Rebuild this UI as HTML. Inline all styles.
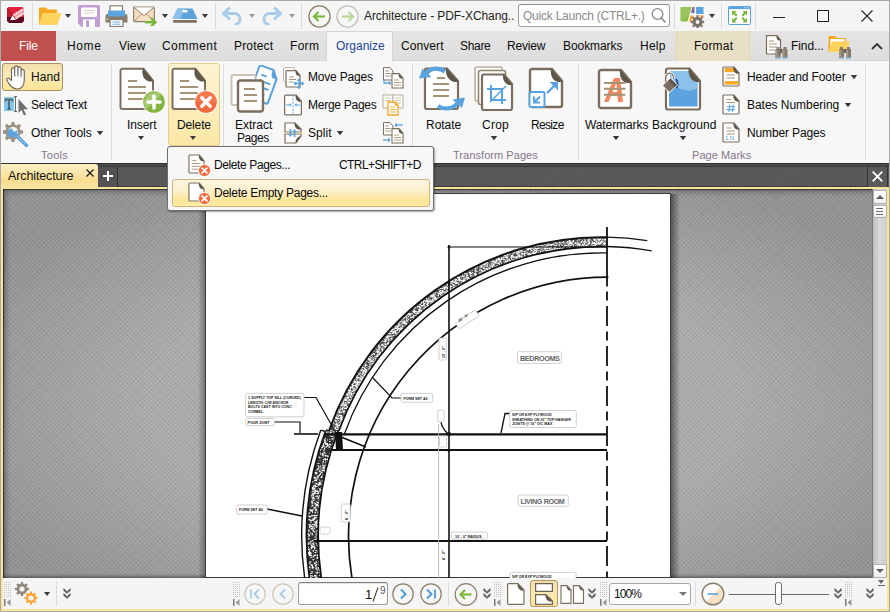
<!DOCTYPE html>
<html><head><meta charset="utf-8">
<style>
*{margin:0;padding:0;box-sizing:border-box}
html,body{width:890px;height:612px;overflow:hidden;background:#f5f5f5}
body{position:relative;font-family:"Liberation Sans",sans-serif;font-size:12px;color:#0a0a0a}
.a{position:absolute}
.t{position:absolute;white-space:nowrap;line-height:14px}
.sep{position:absolute;width:1px;background:#dcdcdc}
.dd{position:absolute;width:0;height:0;border-left:3.5px solid transparent;border-right:3.5px solid transparent;border-top:4px solid #3a3a3a}
.gl{position:absolute;color:#85768a;font-size:11px;white-space:nowrap;line-height:14px}
</style></head>
<body>

<svg width="0" height="0" style="position:absolute">
<defs>
<symbol id="pg" viewBox="0 0 36 44">
<path d="M3.5,1.8 H24.5 L34,13.5 V40 A2,2 0 0 1 32,42 H3.5 A2,2 0 0 1 1.5,40 V3.8 A2,2 0 0 1 3.5,1.8 Z" fill="#fff" stroke="#7b6e5e" stroke-width="2"/>
<path d="M23.8,1.2 L34.6,14.5 L31,14.5 C26,14 22,9 23.8,1.2 Z" fill="#5f564a"/>
<path d="M9,14 H18 M9,20 H27 M9,26 H27 M9,32 H27" stroke="#a39478" stroke-width="1.8"/>
</symbol>
<symbol id="pgs" viewBox="0 0 18 21">
<path d="M2,1 H12 L17,7 V19 A1,1 0 0 1 16,20 H2 A1,1 0 0 1 1,19 V2 A1,1 0 0 1 2,1 Z" fill="#fff" stroke="#7b6e5e" stroke-width="1.2"/>
<path d="M11.5,0.8 L17.2,7.5 L15,7.5 C12.5,7 11,4.5 11.5,0.8 Z" fill="#5f564a"/>
</symbol>
<symbol id="pgl" viewBox="0 0 18 21">
<use href="#pgs"/>
<path d="M4,7 H9 M4,10 H13 M4,13 H13 M4,16 H13" stroke="#a39478" stroke-width="1"/>
</symbol>
<symbol id="xc" viewBox="0 0 24 24">
<circle cx="12" cy="12" r="12" fill="#fff" opacity=".7"/>
<circle cx="12" cy="12" r="10.8" fill="#f36a3f"/>
<path d="M12,1.2 A10.8,10.8 0 0 1 22.8,12 L1.2,12 A10.8,10.8 0 0 1 12,1.2Z" fill="#f7825a" opacity=".6"/>
<path d="M7.8,7.8 L16.2,16.2 M16.2,7.8 L7.8,16.2" stroke="#fff" stroke-width="3.4" stroke-linecap="round"/>
</symbol>
<symbol id="plc" viewBox="0 0 24 24">
<circle cx="12" cy="12" r="12" fill="#fff" opacity=".7"/>
<circle cx="12" cy="12" r="10.8" fill="#86b443"/>
<path d="M4.4,19.6 A10.8,10.8 0 0 1 19.6,4.4 Z" fill="#a6c970"/>
<path d="M12,6 V18 M6,12 H18" stroke="#fff" stroke-width="3.6" stroke-linecap="round"/>
</symbol>
<symbol id="xs" viewBox="0 0 12 12">
<circle cx="6" cy="6" r="5.6" fill="#f36a3f" stroke="#fff" stroke-width=".8"/>
<path d="M3.8,3.8 L8.2,8.2 M8.2,3.8 L3.8,8.2" stroke="#fff" stroke-width="1.7" stroke-linecap="round"/>
</symbol>
<symbol id="chev" viewBox="0 0 8 12">
<defs><linearGradient id="chg" x1="0" y1="0" x2="0" y2="1"><stop offset="0" stop-color="#3c3c3c"/><stop offset="1" stop-color="#8a8a8a"/></linearGradient></defs>
<path d="M0.5,0 L4,3.2 L7.5,0 V2.8 L4,6 L0.5,2.8 Z" fill="url(#chg)"/>
<path d="M0.5,5 L4,8.2 L7.5,5 V7.8 L4,11 L0.5,7.8 Z" fill="url(#chg)"/>
</symbol>
<symbol id="grip" viewBox="0 0 8 26">
<g fill="#c0c0c0"><rect x="0" y="1" width="1" height="1"/><rect x="2" y="1" width="1" height="1"/><rect x="4" y="1" width="1" height="1"/><rect x="6" y="1" width="1" height="1"/><rect x="0" y="3" width="1" height="1"/><rect x="2" y="3" width="1" height="1"/><rect x="4" y="3" width="1" height="1"/><rect x="6" y="3" width="1" height="1"/><rect x="0" y="5" width="1" height="1"/><rect x="2" y="5" width="1" height="1"/><rect x="4" y="5" width="1" height="1"/><rect x="6" y="5" width="1" height="1"/><rect x="0" y="7" width="1" height="1"/><rect x="2" y="7" width="1" height="1"/><rect x="4" y="7" width="1" height="1"/><rect x="6" y="7" width="1" height="1"/><rect x="0" y="9" width="1" height="1"/><rect x="2" y="9" width="1" height="1"/><rect x="4" y="9" width="1" height="1"/><rect x="6" y="9" width="1" height="1"/><rect x="0" y="11" width="1" height="1"/><rect x="2" y="11" width="1" height="1"/><rect x="4" y="11" width="1" height="1"/><rect x="6" y="11" width="1" height="1"/><rect x="0" y="13" width="1" height="1"/><rect x="2" y="13" width="1" height="1"/><rect x="4" y="13" width="1" height="1"/><rect x="6" y="13" width="1" height="1"/><rect x="0" y="15" width="1" height="1"/><rect x="2" y="15" width="1" height="1"/><rect x="4" y="15" width="1" height="1"/><rect x="6" y="15" width="1" height="1"/></g>
<rect x="0" y="18" width="1.5" height="7" fill="#7a7a7a"/>
<path d="M6.5,18 L2.5,21.5 L6.5,25 Z" fill="#9a9a9a"/>
</symbol>
</defs>
</svg>
<!-- window frame -->


<!-- TITLE BAR -->
<div id="titlebar" class="a" style="left:1px;top:1px;width:888px;height:30px;background:#f5f5f5"></div>
<div class="sep" style="left:32px;top:3px;height:26px"></div>
<div class="sep" style="left:215px;top:3px;height:26px"></div>
<div class="sep" style="left:301px;top:3px;height:26px"></div>
<div class="sep" style="left:674px;top:3px;height:26px"></div>
<div class="sep" style="left:721px;top:3px;height:26px"></div>
<div class="sep" style="left:755px;top:3px;height:26px"></div>
<div class="t" style="left:364px;top:9px;font-size:12px;color:#1e1e1e;letter-spacing:-0.09px">Architecture - PDF-XChang..</div>
<div class="a" style="left:518px;top:4px;width:152px;height:23px;border:1px solid #a0a0a0;border-top-color:#8c8c8c;border-radius:3px;background:#fff"></div>
<div class="t" style="left:523px;top:9px;color:#8a8a8a;letter-spacing:-0.23px">Quick Launch (CTRL+.)</div>


<!-- QAT ICONS -->
<svg class="a" style="left:7px;top:7px" width="17" height="16" viewBox="0 0 17 16">
<defs><clipPath id="lg"><path d="M2,0 H15 L17,2 V14 L15,16 H2 L0,14 V2Z"/></clipPath></defs>
<g clip-path="url(#lg)">
<rect width="17" height="16" fill="#5e0322"/>
<rect width="17" height="10" fill="#e0233a"/>
<path d="M0,0 L8,10 L0,10Z" fill="#bd1a2b"/>
<path d="M3,13 L9,13 L5.5,8.5Z" fill="#fff"/>
<path d="M6.5,8.5 L17,2 M8.5,11.5 L17,6" stroke="#fff" stroke-width="2.2"/>
<path d="M6.5,8.5 L17,2 M8.5,11.5 L17,6" stroke="#d02030" stroke-width=".8" stroke-dasharray="1 1"/>
<path d="M7.5,10 L17,4" stroke="#fff" stroke-width=".6"/>
</g>
</svg>
<svg class="a" style="left:38px;top:7px" width="24" height="18" viewBox="0 0 24 18">
<path d="M1,1.5 A1,1 0 0 1 2,0.5 H8 L10,2.5 H18 A1,1 0 0 1 19,3.5 V17.5 H1 Z" fill="#f6a823"/>
<path d="M4.5,6 H23.5 L19.5,17.5 H1 Z" fill="#fdd45c"/>
</svg>
<div class="dd" style="left:65px;top:14px"></div>
<svg class="a" style="left:78px;top:5px" width="22" height="22" viewBox="0 0 22 22">
<path d="M1.5,0 H20.5 A1.5,1.5 0 0 1 22,1.5 V20.5 A1.5,1.5 0 0 1 20.5,22 H3.5 L0,18.5 V1.5 A1.5,1.5 0 0 1 1.5,0Z" fill="#c29fd3"/>
<rect x="3" y="2.5" width="16" height="9.5" rx="1.5" fill="#fff"/>
<path d="M6,5.5 H16 M6,8 H16" stroke="#d9ccb8" stroke-width="1"/>
<rect x="5" y="14.5" width="12" height="7.5" fill="#fff"/>
<rect x="8" y="15.5" width="3" height="6.5" fill="#c29fd3"/>
</svg>
<svg class="a" style="left:105px;top:5px" width="23" height="22" viewBox="0 0 23 22">
<rect x="5" y="0.8" width="12.5" height="8" fill="#fff" stroke="#8a7d6c" stroke-width="1.2"/>
<path d="M2.5,10 A2,2 0 0 1 4.5,8 H18.5 A2,2 0 0 1 20.5,10 V17 H2.5Z" fill="#8a7d6c"/>
<path d="M0.5,11 A2,2 0 0 1 2.5,9 H20.5 A2,2 0 0 1 22.5,11 V17.5 H0.5Z" fill="#8a7d6c"/>
<rect x="3" y="5.5" width="17" height="6" fill="#5ba4de"/>
<rect x="5" y="14.5" width="13" height="7" fill="#fff" stroke="#8a7d6c" stroke-width="1.2"/>
<path d="M7.5,17 H15.5 M7.5,19.2 H15.5" stroke="#5ba4de" stroke-width=".9"/>
<circle cx="2.5" cy="14" r=".7" fill="#fff"/>
</svg>
<svg class="a" style="left:133px;top:6px" width="24" height="20" viewBox="0 0 24 20">
<rect x="0.7" y="1" width="20.6" height="14.6" rx="1" fill="#f6e0c2" stroke="#8c7e6a" stroke-width="1.2"/>
<path d="M1.3,1.5 L11,9.5 L20.7,1.5" fill="#fff" stroke="#8c7e6a" stroke-width="1"/>
<path d="M1.5,15 L8.5,8 M20.5,15 L13.5,8" stroke="#8c7e6a" stroke-width=".8"/>
<path d="M12,16.2 H21" stroke="#78b43b" stroke-width="2.4"/>
<path d="M18,12 L22.5,16.2 L18,20.4" fill="none" stroke="#78b43b" stroke-width="2.4"/>
</svg>
<div class="dd" style="left:162px;top:14px"></div>
<svg class="a" style="left:172px;top:8px" width="26" height="15" viewBox="0 0 26 15">
<path d="M5.5,0.5 H20.5 L25.5,11 H0.5Z" fill="#5ba2dc"/>
<path d="M5.5,0.5 H13 L8,11 H0.5Z" fill="#8cc0ea"/>
<rect x="10.5" y="2" width="5" height="2.5" fill="#fff"/>
<rect x="1" y="12" width="24" height="2.8" rx="1" fill="#7d7062"/>
<rect x="2" y="11" width="22" height="1" fill="#fff"/>
</svg>
<div class="dd" style="left:202px;top:14px"></div>
<svg class="a" style="left:222px;top:7px" width="21" height="18" viewBox="0 0 21 18">
<path d="M2,6.5 H12.5 A5.5,5.5 0 0 1 12.5,17.5" fill="none" stroke="#a9cde9" stroke-width="3"/>
<path d="M8,0.5 L1.5,6.5 L8,12.5" fill="none" stroke="#a9cde9" stroke-width="3"/>
</svg>
<div class="dd" style="left:249px;top:14px;border-top-color:#9a9a9a"></div>
<svg class="a" style="left:261px;top:7px" width="21" height="18" viewBox="0 0 21 18">
<path d="M19,6.5 H8.5 A5.5,5.5 0 0 0 8.5,17.5" fill="none" stroke="#a9cde9" stroke-width="3"/>
<path d="M13,0.5 L19.5,6.5 L13,12.5" fill="none" stroke="#a9cde9" stroke-width="3"/>
</svg>
<div class="dd" style="left:289px;top:14px;border-top-color:#9a9a9a"></div>
<svg class="a" style="left:308px;top:5px" width="23" height="23" viewBox="0 0 23 23">
<circle cx="11.5" cy="11.5" r="10.6" fill="#f7f7f7" stroke="#8b7f6c" stroke-width="1.3"/>
<path d="M6,11.5 H17" stroke="#7db63f" stroke-width="2.2"/>
<path d="M10.5,7 L6,11.5 L10.5,16" fill="none" stroke="#7db63f" stroke-width="2.2"/>
</svg>
<svg class="a" style="left:336px;top:5px" width="23" height="23" viewBox="0 0 23 23">
<circle cx="11.5" cy="11.5" r="10.6" fill="#f7f7f7" stroke="#c6bfb4" stroke-width="1.3"/>
<path d="M6,11.5 H17" stroke="#b9d898" stroke-width="2.2"/>
<path d="M12.5,7 L17,11.5 L12.5,16" fill="none" stroke="#b9d898" stroke-width="2.2"/>
</svg>
<svg class="a" style="left:651px;top:7px" width="16" height="17" viewBox="0 0 16 17">
<circle cx="6.5" cy="7" r="5.3" fill="none" stroke="#8a8a8a" stroke-width="1.3"/>
<path d="M10.3,11 L14.5,15.5" stroke="#8a8a8a" stroke-width="1.7"/>
</svg>
<svg class="a" style="left:680px;top:6px" width="25" height="22" viewBox="0 0 25 22">
<path d="M1.5,1 H11.5 L7.5,15.5 H1.5 A1,1 0 0 1 0.5,14.5 V2 A1,1 0 0 1 1.5,1Z" fill="#8cbd4c"/>
<path d="M1.5,1 H11.5 L9,10 L0.5,14Z" fill="#9fca62" opacity=".6"/>
<path d="M12.5,1 H14.5 V7 H11Z" fill="#8a5cb0"/>
<rect x="16" y="1" width="7.5" height="7" fill="#5ba3de"/>
<path d="M10.5,9.5 H13 V15.5 H9Z" fill="#f4a52c"/>
<rect x="16" y="9.5" width="7.5" height="2.5" fill="#f08a3c"/>
<g transform="translate(17.5,16)">
<circle r="6.4" fill="#f5f5f5"/>
<path d="M-0.9,-6 H0.9 L1.2,-4.3 L2.8,-3.6 L4.2,-4.7 L5.4,-3.5 L4.3,-2.1 L5,-0.5 L6.7,-0.2 V1.6 L5,1.9 L4.3,3.5 L5.4,4.9 L4.2,6.1 L2.8,5 L1.2,5.7 L0.9,7.4 H-0.9 L-1.2,5.7 L-2.8,5 L-4.2,6.1 L-5.4,4.9 L-4.3,3.5 L-5,1.9 L-6.7,1.6 V-0.2 L-5,-0.5 L-4.3,-2.1 L-5.4,-3.5 L-4.2,-4.7 L-2.8,-3.6 L-1.2,-4.3Z" fill="#7e7468" transform="translate(0,-0.7)"/>
<circle r="1.9" fill="#f5f5f5"/>
</g>
</svg>
<div class="dd" style="left:709px;top:14px"></div>
<svg class="a" style="left:728px;top:6px" width="23" height="19" viewBox="0 0 23 19">
<rect x="0.5" y="0.5" width="22" height="18" rx="1" fill="#fff" stroke="#5ba3de" stroke-width="1"/>
<rect x="0.5" y="0.5" width="22" height="2.6" fill="#5ba3de"/>
<path d="M16,1.8 h1 M18,1.8 h1 M20,1.8 h1" stroke="#fff" stroke-width=".9"/>
<g fill="#7ab43d">
<path d="M4,5 H8.5 L7,6.5 L9.5,9 L8,10.5 L5.5,8 L4,9.5Z"/>
<path d="M19,5 H14.5 L16,6.5 L13.5,9 L15,10.5 L17.5,8 L19,9.5Z"/>
<path d="M4,17 H8.5 L7,15.5 L9.5,13 L8,11.5 L5.5,14 L4,12.5Z" transform="translate(0,-0.5)"/>
<path d="M19,17 H14.5 L16,15.5 L13.5,13 L15,11.5 L17.5,14 L19,12.5Z" transform="translate(0,-0.5)"/>
</g>
</svg>
<!-- window controls -->
<div class="a" style="left:773px;top:17px;width:12px;height:1px;background:#222"></div>
<div class="a" style="left:817px;top:10px;width:12px;height:12px;border:1px solid #222"></div>
<svg class="a" style="left:861px;top:10px" width="12" height="12" viewBox="0 0 12 12"><path d="M0.5,0.5 L11.5,11.5 M11.5,0.5 L0.5,11.5" stroke="#222" stroke-width="1.1"/></svg>

<!-- MENU BAR -->
<div class="a" style="left:1px;top:31px;width:888px;height:30px;background:linear-gradient(#e4e4e4,#dedede);border-bottom:1px solid #d6d6d6"></div>
<div class="a" style="left:1px;top:31px;width:55px;height:30px;background:#c0504e"></div>
<div class="t" style="left:19px;top:39px;color:#fff;letter-spacing:-0.16px">File</div>
<div class="a" style="left:326px;top:31px;width:67px;height:31px;background:#f7f7f7;border:1px solid #d4d4d4;border-bottom:none;border-radius:2px 2px 0 0"></div>
<div class="a" style="left:676px;top:31px;width:74px;height:30px;background:#e8e0c4;border-left:1px solid #e8d9a0;border-right:1px solid #e8d9a0"></div>
<div class="t" style="left:67px;top:39px;letter-spacing:0.62px">Home</div>
<div class="t" style="left:119px;top:39px;letter-spacing:0.2px">View</div>
<div class="t" style="left:162px;top:39px;letter-spacing:0.45px">Comment</div>
<div class="t" style="left:234px;top:39px;letter-spacing:0.17px">Protect</div>
<div class="t" style="left:290px;top:39px;letter-spacing:0.3px">Form</div>
<div class="t" style="left:336px;top:39px;color:#23449a;letter-spacing:-0.0px">Organize</div>
<div class="t" style="left:401px;top:39px;letter-spacing:0.08px">Convert</div>
<div class="t" style="left:460px;top:39px;letter-spacing:-0.31px">Share</div>
<div class="t" style="left:507px;top:39px;letter-spacing:-0.19px">Review</div>
<div class="t" style="left:563px;top:39px;letter-spacing:-0.07px">Bookmarks</div>
<div class="t" style="left:640px;top:39px;letter-spacing:0.23px">Help</div>
<div class="t" style="left:694px;top:39px;letter-spacing:0.2px">Format</div>
<div class="t" style="left:791px;top:39px;letter-spacing:-0.08px">Find...</div>

<!-- menu bar right icons -->
<svg class="a" style="left:765px;top:35px" width="24" height="24" viewBox="0 0 24 24">
<path d="M1.5,0.7 H12 L15.5,5 V19 H1.5 Z" fill="#fff" stroke="#7b6e5e" stroke-width="1.2"/>
<path d="M11.5,0.5 L15.8,5.5 L13.5,5.5 C12,5 11.2,3 11.5,0.5Z" fill="#5f564a"/>
<path d="M4,6 H9 M4,9 H12 M4,12 H12 M4,15 H10" stroke="#a39478" stroke-width="1"/>
<g transform="translate(0,0)"><path d="M11.5,12 h3 v2 h1 v8.5 h-5 v-8.5 h1z M18.5,12 h3 v2 h1 v8.5 h-5 v-8.5 h1z" fill="#857c6e"/>
<path d="M15.5,14 h2 v4 h-2z" fill="#6a6258"/>
<path d="M10.5,15 h2 v7.5 h-2z M17.5,15 h2 v7.5 h-2z" fill="#a39a8c"/>
<path d="M10.5,23 h5 M17.5,23 h5" stroke="#5ba3de" stroke-width="1.2"/></g>
</svg>
<svg class="a" style="left:828px;top:35px" width="25" height="24" viewBox="0 0 25 24">
<path d="M0.5,2 A1,1 0 0 1 1.5,1 H7 L9,3 H17 A1,1 0 0 1 18,4 V17 H0.5Z" fill="#f6a823"/>
<rect x="2.5" y="4" width="14" height="8" fill="#fff"/>
<path d="M4,6.5 H22 L18,17 H0.5Z" fill="#fdd45c"/>
<g transform="translate(0.5,0)"><path d="M11.5,12 h3 v2 h1 v8.5 h-5 v-8.5 h1z M18.5,12 h3 v2 h1 v8.5 h-5 v-8.5 h1z" fill="#857c6e"/>
<path d="M15.5,14 h2 v4 h-2z" fill="#6a6258"/>
<path d="M10.5,15 h2 v7.5 h-2z M17.5,15 h2 v7.5 h-2z" fill="#a39a8c"/>
<path d="M10.5,23 h5 M17.5,23 h5" stroke="#5ba3de" stroke-width="1.2"/></g>
</svg>
<svg class="a" style="left:871px;top:42px" width="12" height="8" viewBox="0 0 12 8"><path d="M1,7 L6,2 L11,7" fill="none" stroke="#333" stroke-width="1.8"/></svg>


<!-- RIBBON -->
<div class="a" style="left:1px;top:61px;width:888px;height:102px;background:#f7f7f7"></div>
<div class="sep" style="left:111px;top:64px;height:96px"></div>
<div class="sep" style="left:223px;top:64px;height:96px"></div>
<div class="sep" style="left:412px;top:64px;height:96px"></div>
<div class="sep" style="left:578px;top:64px;height:96px"></div>
<div class="sep" style="left:865px;top:64px;height:96px"></div>

<!-- Tools group -->
<div class="a" style="left:2px;top:63px;width:61px;height:28px;border:1px solid #a89060;border-radius:3px;background:linear-gradient(#f2e0ac,#fbe9b6 45%,#fde496 100%)"></div>
<div class="t" style="left:31px;top:70px;letter-spacing:0.1px">Hand</div>
<div class="t" style="left:31px;top:98px;letter-spacing:-0.25px">Select Text</div>
<div class="t" style="left:31px;top:126px;letter-spacing:-0.04px">Other Tools</div>
<div class="dd" style="left:97px;top:131px"></div>
<div class="gl" style="left:41px;top:148px;letter-spacing:0.28px">Tools</div>

<!-- Insert / Delete -->
<div class="a" style="left:168px;top:63px;width:52px;height:83px;border:1px solid #e3cf8e;border-radius:3px;background:linear-gradient(#fdf3d2,#fbe7a6)"></div>
<div class="t" style="left:127px;top:118px;letter-spacing:-0.09px">Insert</div>
<div class="dd" style="left:138px;top:136px"></div>
<div class="t" style="left:177px;top:118px;letter-spacing:-0.13px">Delete</div>
<div class="dd" style="left:190px;top:136px"></div>

<!-- Extract etc -->
<div class="t" style="left:235px;top:118px;letter-spacing:-0.02px">Extract</div>
<div class="t" style="left:237px;top:131px;letter-spacing:-0.45px">Pages</div>
<div class="t" style="left:308px;top:70px;letter-spacing:-0.2px">Move Pages</div>
<div class="t" style="left:308px;top:98px;letter-spacing:-0.26px">Merge Pages</div>
<div class="t" style="left:308px;top:126px;letter-spacing:0.07px">Split</div>
<div class="dd" style="left:337px;top:131px"></div>

<!-- Transform -->
<div class="t" style="left:426px;top:118px;letter-spacing:-0.03px">Rotate</div>
<div class="t" style="left:482px;top:118px;letter-spacing:0.25px">Crop</div>
<div class="dd" style="left:491px;top:136px"></div>
<div class="t" style="left:531px;top:118px;letter-spacing:-0.66px">Resize</div>
<div class="gl" style="left:453px;top:148px;letter-spacing:0.06px">Transform Pages</div>

<!-- Page marks -->
<div class="t" style="left:585px;top:118px;letter-spacing:-0.09px">Watermarks</div>
<div class="dd" style="left:613px;top:136px"></div>
<div class="t" style="left:652px;top:118px;letter-spacing:0.03px">Background</div>
<div class="dd" style="left:680px;top:136px"></div>
<div class="t" style="left:747px;top:70px;letter-spacing:-0.13px">Header and Footer</div>
<div class="dd" style="left:851px;top:75px"></div>
<div class="t" style="left:747px;top:98px;letter-spacing:-0.03px">Bates Numbering</div>
<div class="dd" style="left:845px;top:103px"></div>
<div class="t" style="left:747px;top:126px;letter-spacing:-0.13px">Number Pages</div>
<div class="gl" style="left:692px;top:148px;letter-spacing:0.05px">Page Marks</div>


<!-- RIBBON ICONS -->
<svg class="a" style="left:6px;top:65px" width="20" height="25" viewBox="0 0 20 25">
<path d="M5.5,15 V4.5 a1.6,1.6 0 0 1 3.2,0 V11 V2.5 a1.6,1.6 0 0 1 3.2,0 V11 V3.5 a1.6,1.6 0 0 1 3.2,0 V11.5 V6 a1.6,1.6 0 0 1 3.2,0 V15 C18.1,20 16,24 11,24 C7,24 5.5,22 3.5,19.5 L1,15.5 a1.5,1.5 0 0 1 2.4,-1.8 L5.5,16" fill="#fff" stroke="#6a6258" stroke-width="1.1" stroke-linejoin="round"/>
</svg>
<svg class="a" style="left:4px;top:96px" width="25" height="20" viewBox="0 0 25 20">
<rect x="0" y="1" width="10" height="14" fill="#7ec7ef"/>
<path d="M1.5,3.5 H8.5 M5,3.5 V13 M3.5,13 H6.5 M1.5,3.5 V5.5 M8.5,3.5 V5.5" stroke="#555" stroke-width="1.6"/>
<path d="M11.5,0.5 V15.5 M10,0.5 H13 M10,15.5 H13" stroke="#666" stroke-width="1"/>
<path d="M14.5,3 V17 L17.5,14 L20,19.5 L22,18.5 L19.5,13.3 H24 Z" fill="#6e6e6e"/>
</svg>
<svg class="a" style="left:2px;top:121px" width="28" height="26" viewBox="0 0 28 26">
<g transform="translate(11,11)">
<path d="M7.42,-1.63 L10.07,-1.65 L10.07,1.65 L7.42,1.63 L7.02,2.91 L6.40,4.10 L8.28,5.95 L5.95,8.28 L4.10,6.40 L2.91,7.02 L1.63,7.42 L1.65,10.07 L-1.65,10.07 L-1.63,7.42 L-2.91,7.02 L-4.10,6.40 L-5.95,8.28 L-8.28,5.95 L-6.40,4.10 L-7.02,2.91 L-7.42,1.63 L-10.07,1.65 L-10.07,-1.65 L-7.42,-1.63 L-7.02,-2.91 L-6.40,-4.10 L-8.28,-5.95 L-5.95,-8.28 L-4.10,-6.40 L-2.91,-7.02 L-1.63,-7.42 L-1.65,-10.07 L1.65,-10.07 L1.63,-7.42 L2.91,-7.02 L4.10,-6.40 L5.95,-8.28 L8.28,-5.95 L6.40,-4.10 L7.02,-2.91Z M5.2,0 A5.2,5.2 0 1 0 -5.2,0 A5.2,5.2 0 1 0 5.2,0Z" fill="#9c9182" fill-rule="evenodd"/>
</g>
<path d="M13.5,13.5 L24.5,24.5" stroke="#5ba3de" stroke-width="3.2" stroke-linecap="round"/>
<path d="M15,15 L23.5,23.5" stroke="#d8ebf8" stroke-width="1" stroke-dasharray="1.2 1.2"/>
<path d="M14.5,13 A4.6,4.6 0 1 1 9.5,7.3 L11.2,10.2 L13.8,10.6 L15.4,8.4 A4.6,4.6 0 0 1 14.5,13Z" fill="#5ba3de"/>
</svg>
<div class="dd" style="left:97px;top:131px"></div>

<svg class="a" style="left:119px;top:67px" width="36" height="44"><use href="#pg"/></svg>
<svg class="a" style="left:142px;top:90px" width="24" height="24"><use href="#plc"/></svg>
<svg class="a" style="left:171px;top:67px" width="36" height="44"><use href="#pg"/></svg>
<svg class="a" style="left:194px;top:90px" width="24" height="24"><use href="#xc"/></svg>

<!-- Extract -->
<svg class="a" style="left:230px;top:65px" width="48" height="48" viewBox="0 0 48 48">
<g transform="translate(0,1.5) rotate(20 35 18)">
<path d="M25,1.5 H38 L44,9 V34 A1.5,1.5 0 0 1 42.5,35.5 H25 A1.5,1.5 0 0 1 23.5,34 V3 A1.5,1.5 0 0 1 25,1.5Z" fill="#fff" stroke="#5ba3de" stroke-width="2"/>
<path d="M37.5,1 L44.5,9.5 L41,9.5 C38,9 37,6 37.5,1Z" fill="#5ba3de"/>
<path d="M28,10 H34 M28,16 H40 M28,22 H40 M28,28 H38" stroke="#5ba3de" stroke-width="2"/>
</g>
<rect x="1.5" y="10" width="24" height="30" rx="2" fill="#fff" stroke="#cbc2b3" stroke-width="2"/>
<rect x="8" y="15.5" width="25" height="31" rx="2.5" fill="#fff" stroke="#7b6e5e" stroke-width="2.4"/>
<path d="M14,24 H25 M14,30 H27 M14,36 H27" stroke="#a39478" stroke-width="2"/>
</svg>

<!-- Move / Merge / Split small icons -->
<svg class="a" style="left:283px;top:67px" width="22" height="22" viewBox="0 0 22 22">
<rect x="0.6" y="0.6" width="11" height="14" rx="1" fill="#fff" stroke="#b8ae9e" stroke-width="1"/>
<path d="M4,3.6 H13 L17,8.5 V19 A1,1 0 0 1 16,20 H4 A1,1 0 0 1 3,19 V4.6 A1,1 0 0 1 4,3.6Z" fill="#fff" stroke="#7b6e5e" stroke-width="1.2"/>
<path d="M12.6,3.4 L17.2,8.8 L15,8.8 C13,8.4 12.3,6 12.6,3.4Z" fill="#5f564a"/>
<path d="M6,10 H11 M6,12.5 H13 M6,15 H11" stroke="#a39478" stroke-width="1"/>
<path d="M16,12 V21.5 M11.5,16.5 H20.5" stroke="#5ba3de" stroke-width="1.3"/>
<path d="M14.3,13.8 L16,12 L17.7,13.8 M14.3,19.8 L16,21.5 L17.7,19.8 M13.3,14.8 L11.5,16.5 L13.3,18.2 M18.7,14.8 L20.5,16.5 L18.7,18.2" fill="none" stroke="#5ba3de" stroke-width="1.1"/>
</svg>
<svg class="a" style="left:283px;top:94px" width="20" height="22"><use href="#pgs" width="20" height="22"/>
<path d="M10,1 V21" stroke="#5ba3de" stroke-width="1" stroke-dasharray="2 1.5"/>
<path d="M3,11 H8 M12,11 H17" stroke="#5ba3de" stroke-width="1.1"/>
<path d="M6.5,9 L8.5,11 L6.5,13 Z M13.5,9 L11.5,11 L13.5,13 Z" fill="#5ba3de"/>
</svg>
<svg class="a" style="left:283px;top:122px" width="20" height="22" viewBox="0 0 20 22">
<path d="M2,1 H12 L18,7 V10 H2Z M2,12 H18 V14 L13,21 H2Z" fill="#fff" stroke="#7b6e5e" stroke-width="1.2"/>
<path d="M11.5,0.8 L18.3,7.5 L15.5,7.5 C13,7 11.3,4.5 11.5,0.8Z M18.3,13.5 L12.5,21.3 C12.3,18 14,15 18.3,13.5Z" fill="#5f564a"/>
<path d="M0.5,11 H19.5" stroke="#f3d2a0" stroke-width="1"/>
<path d="M7.4,7 V12.5 M11.6,9.5 V15" stroke="#5ba3de" stroke-width="1.8"/>
<path d="M5.2,12 L7.4,15 L9.6,12Z M9.4,10 L11.6,7 L13.8,10Z" fill="#5ba3de"/>
</svg>
<div class="dd" style="left:337px;top:131px"></div>

<!-- right column small icons -->
<svg class="a" style="left:382px;top:67px" width="23" height="22" viewBox="0 0 23 22">
<path d="M1.5,0.6 H8 L11,4 V13 H1.5Z" fill="#fff" stroke="#7b6e5e" stroke-width="1"/>
<path d="M3,4 H7 M3,6.5 H9 M3,9 H9" stroke="#a39478" stroke-width=".9"/>
<path d="M10,6.6 H17 L21,11 V21 H10Z" fill="#fff" stroke="#7b6e5e" stroke-width="1.1"/>
<path d="M16.6,6.4 L21.2,11.4 L19,11.4 C17.2,11 16.4,9 16.6,6.4Z" fill="#5f564a"/>
<path d="M12,13 H17 M12,15.5 H19 M12,18 H19" stroke="#a39478" stroke-width=".9"/>
<path d="M2,12 V16 H8" fill="none" stroke="#5ba3de" stroke-width="1.3"/>
<path d="M7,14 L10,16 L7,18Z" fill="#5ba3de"/>
</svg>
<svg class="a" style="left:382px;top:94px" width="23" height="22" viewBox="0 0 23 22">
<rect x="1" y="1" width="10" height="13" fill="#fff" stroke="#b8ae9e" stroke-width="1"/>
<rect x="11" y="1" width="10" height="13" fill="#fff" stroke="#b8ae9e" stroke-width="1"/>
<path d="M3,4 H9 M3,6.5 H9 M13,4 H19 M13,6.5 H19 M13,9 H19" stroke="#cbbfa8" stroke-width=".9"/>
<path d="M6,8 H13 L16,11.5 V21 H6Z" fill="#fff" stroke="#f5a623" stroke-width="1.3"/>
<path d="M12.6,7.8 L16.2,12 L14,12 C12.8,11.5 12.4,10 12.6,7.8Z" fill="#f5a623"/>
<path d="M8,13 H13 M8,15.5 H14 M8,18 H14" stroke="#f5a623" stroke-width=".9"/>
</svg>
<svg class="a" style="left:382px;top:121px" width="23" height="23" viewBox="0 0 23 23">
<path d="M1.5,1.6 H8 L11,5 V14 H1.5Z" fill="#fff" stroke="#7b6e5e" stroke-width="1"/>
<path d="M3,5 H7 M3,7.5 H9 M3,10 H9" stroke="#a39478" stroke-width=".9"/>
<path d="M10,7.6 H17 L21,12 V22 H10Z" fill="#fff" stroke="#7b6e5e" stroke-width="1.1"/>
<path d="M16.6,7.4 L21.2,12.4 L19,12.4 C17.2,12 16.4,10 16.6,7.4Z" fill="#5f564a"/>
<path d="M12,14 H17 M12,16.5 H19 M12,19 H19" stroke="#a39478" stroke-width=".9"/>
<path d="M13,4 H21" stroke="#5ba3de" stroke-width="1.3"/><path d="M15,1.5 L12.5,4 L15,6.5Z" fill="#5ba3de"/>
<path d="M1,19 H8" stroke="#5ba3de" stroke-width="1.3"/><path d="M6,16.5 L8.5,19 L6,21.5Z" fill="#5ba3de"/>
</svg>

<!-- Rotate -->
<svg class="a" style="left:419px;top:66px" width="46" height="46" viewBox="0 0 46 46">
<path d="M8,2.5 H28 L39,15 V41 A2,2 0 0 1 37,43 H8 A2,2 0 0 1 6,41 V4.5 A2,2 0 0 1 8,2.5Z" fill="#fff" stroke="#7b6e5e" stroke-width="2.2"/>
<path d="M27,2 L39.5,16 L35.5,16 C30.5,15 26,10 27,2Z" fill="#5f564a"/>
<path d="M18,12 H26 M14,18 H30 M14,24 H30 M14,30 H30" stroke="#a39478" stroke-width="2"/>
<path d="M26,5.5 C18,0.5 10,2.5 7,8.5" fill="none" stroke="#5ba3de" stroke-width="4.2"/>
<path d="M0,12.5 L12.5,11 L3.5,2.5 Z" fill="#5ba3de"/>
<path d="M19,40 C27,45 36,42 40,35" fill="none" stroke="#5ba3de" stroke-width="4.2"/>
<path d="M46,31.5 L33.5,33.5 L43,42 Z" fill="#5ba3de"/>
</svg>
<!-- Crop -->
<svg class="a" style="left:474px;top:66px" width="40" height="46" viewBox="0 0 40 46">
<rect x="1" y="1" width="27" height="34" rx="2" fill="#fff" stroke="#b8ae9e" stroke-width="1.6"/>
<rect x="4.5" y="4.5" width="27" height="34" rx="2" fill="#fff" stroke="#8f8371" stroke-width="1.6"/>
<path d="M10,8.5 H30 L38,18 V42 A2,2 0 0 1 36,44 H10 A2,2 0 0 1 8,42 V10.5 A2,2 0 0 1 10,8.5Z" fill="#fff" stroke="#7b6e5e" stroke-width="2.2"/>
<path d="M29,8 L38.5,19 L35,19 C31,18 28.5,14 29,8Z" fill="#5f564a"/>
<path d="M17,19 V34 H32 M13,23 H28 V38" fill="none" stroke="#5ba3de" stroke-width="2"/>
<path d="M16,36 L32,20" stroke="#5ba3de" stroke-width="1.6"/>
</svg>
<div class="dd" style="left:491px;top:136px"></div>
<!-- Resize -->
<svg class="a" style="left:528px;top:66px" width="36" height="46"><use href="#pgs" width="36" height="44"/>
<rect x="1.5" y="26" width="15" height="15" rx="1.5" fill="#fff" stroke="#5ba3de" stroke-width="2"/>
<path d="M12,30.5 L6,36.5 M6,30.5 V36.5 H12" fill="none" stroke="#5ba3de" stroke-width="2.2"/>
<path d="M19,27 L28,18" stroke="#5ba3de" stroke-width="2.4"/>
<path d="M21.5,16 H30 V24.5Z" fill="#5ba3de"/>
</svg>

<!-- Watermarks -->
<svg class="a" style="left:597px;top:67px" width="36" height="44" viewBox="0 0 36 44">
<use href="#pgs" width="36" height="44"/>
<path d="M7,35 L17,11 H23 L26,35 H21 L20.5,29 H14 L11.5,35 Z M15.5,25 H20.2 L19.5,15.5Z" fill="#f7875c" fill-rule="evenodd"/>
<path d="M7,16 H28.5 M7,21.8 H28.5 M7,27.8 H28.5" stroke="#a39478" stroke-width="2"/>
</svg>
<div class="dd" style="left:613px;top:136px"></div>
<!-- Background -->
<svg class="a" style="left:661px;top:67px" width="42" height="44" viewBox="0 0 42 44">
<path d="M7,1.5 H28.5 L39,14 V40.5 A2,2 0 0 1 37,42.5 H7 A2,2 0 0 1 5,40.5 V3.5 A2,2 0 0 1 7,1.5 Z" fill="#fff" stroke="#7b6e5e" stroke-width="2.2"/>
<path d="M9,4 H27.5 L36.5,15 V39.5 H8 V24 L12,20 L9,17Z" fill="#5ba3de"/>
<path d="M9,4 H27.5 L36.5,15 V21 C30,25 22,24 16,20 L12,20 L9,17Z" fill="#8cc2ea"/>
<path d="M27.5,1 L39.5,15 L35.5,15 C31,14 27,10 27.5,1Z" fill="#5f564a"/>
<path d="M15,12 C17,15 17,19 15.5,21" stroke="#1f4f90" stroke-width="2" fill="none"/>
<path d="M1,18.5 L9.5,10.5 L17,18 L8.5,26 Z" fill="#fff"/>
<path d="M2,18.5 L9.5,11.5 L16,18 L8.5,25 Z" fill="#7b6e5e"/>
<path d="M9.5,11.5 L16,18 L14,20 L7.5,13.5Z" fill="#5f564a"/>
<path d="M5,14 C3,8 8,4 11.5,7.5 L13,12" fill="none" stroke="#fff" stroke-width="2.4"/>
<path d="M5,14 C3,8 8,4 11.5,7.5 L13,12" fill="none" stroke="#7b6e5e" stroke-width="1.2"/>
</svg>
<div class="dd" style="left:680px;top:136px"></div>

<!-- Header/Bates/Number -->
<svg class="a" style="left:722px;top:66px" width="18" height="21" viewBox="0 0 18 21">
<use href="#pgs"/>
<path d="M2.6,2 H11.3 L13.5,4.6 V6.3 H2.6Z" fill="#f7a72c"/>
<path d="M2.6,15 H16.4 V18.6 H2.6Z" fill="#f7a72c"/>
<path d="M4.5,9 H13 M4.5,12 H13" stroke="#a39478" stroke-width="1"/>
<path d="M11.5,0.8 L17.2,7.5 L15,7.5 C12.5,7 11,4.5 11.5,0.8 Z" fill="#5f564a"/>
</svg>
<svg class="a" style="left:722px;top:94px" width="18" height="21" viewBox="0 0 18 21">
<use href="#pgs"/>
<path d="M4.5,5.5 H9 M4.5,8.5 H13" stroke="#a39478" stroke-width="1"/>
<path d="M7.8,10.5 L7,18 M11.3,10.5 L10.5,18 M5,12.8 H13 M4.6,15.6 H12.6" stroke="#5ba3de" stroke-width="1.1"/>
</svg>
<svg class="a" style="left:722px;top:122px" width="18" height="21" viewBox="0 0 18 21">
<use href="#pgs"/>
<path d="M4.5,6 H9 M4.5,9 H13 M4.5,12 H13" stroke="#a39478" stroke-width="1"/>
<text x="3" y="18.4" font-family="Liberation Sans" font-size="6.2" fill="#4f9ad8" letter-spacing="-.2">1.N</text>
</svg>
<div class="dd" style="left:851px;top:75px"></div>
<div class="dd" style="left:845px;top:103px"></div>

<!-- TAB BAR -->
<div class="a" style="left:1px;top:163px;width:888px;height:24px;background-color:#535353;background-image:repeating-linear-gradient(45deg,rgba(255,255,255,.035) 0 1.2px,transparent 1.2px 2.6px),repeating-linear-gradient(-45deg,rgba(255,255,255,.035) 0 1.2px,transparent 1.2px 2.6px)"></div>
<div class="a" style="left:1px;top:163px;width:888px;height:1px;background:#2f2f2f"></div>
<div class="a" style="left:1px;top:164px;width:888px;height:3px;background:#4a4a4a;border-bottom:1px solid #3a3a3a"></div>
<div class="a" style="left:1px;top:186px;width:888px;height:1px;background:#3a3a3a"></div>
<div class="a" style="left:1px;top:164px;width:97px;height:24px;border-radius:0 3px 0 0;background:linear-gradient(#fdf0c6,#f9dc8e 70%,#fae3a2)"></div>
<div class="t" style="left:8px;top:169px;font-size:12.5px;color:#111;letter-spacing:-0.12px">Architecture</div>
<svg class="a" style="left:86px;top:169px" width="8" height="8" viewBox="0 0 8 8"><path d="M0.5,0.5 L7.5,7.5 M7.5,0.5 L0.5,7.5" stroke="#111" stroke-width="1.1"/></svg>
<div class="a" style="left:98px;top:167px;width:20px;height:20px;background:#525252;border-right:1px solid #333"></div>
<svg class="a" style="left:103px;top:171px" width="10" height="10" viewBox="0 0 10 10"><path d="M5,0 V10 M0,5 H10" stroke="#fff" stroke-width="2"/></svg>
<div class="a" style="left:867px;top:167px;width:21px;height:20px;background:#5a5a5a;border-left:1px solid #333;border-right:1px solid #333"></div>
<svg class="a" style="left:872px;top:171px" width="11" height="11" viewBox="0 0 11 11"><path d="M0.7,0.7 L10.3,10.3 M10.3,0.7 L0.7,10.3" stroke="#fff" stroke-width="1.8"/></svg>

<!-- DOC AREA -->
<div class="a" style="left:1px;top:187px;width:888px;height:391px;background:#f9e49f"></div>
<div class="a" style="left:3px;top:189px;width:884px;height:389px;background-color:#a5a5a5;background-image:radial-gradient(ellipse 60% 65% at 50% 55%,rgba(255,255,255,.08) 0%,rgba(255,255,255,.04) 55%,rgba(0,0,0,.12) 100%),repeating-linear-gradient(45deg,rgba(255,255,255,.07) 0 1.4px,rgba(0,0,0,.02) 1.4px 3.1px),repeating-linear-gradient(-45deg,rgba(255,255,255,.07) 0 1.4px,rgba(0,0,0,.02) 1.4px 3.1px);box-shadow:inset 1px 1px 0 rgba(0,0,0,.5),inset 3px 3px 5px rgba(0,0,0,.3),inset 0 -2px 3px rgba(0,0,0,.35)"></div>
<div class="a" style="left:671px;top:194px;width:9px;height:384px;background:linear-gradient(90deg,rgba(0,0,0,.45),rgba(0,0,0,0))"></div>
<div class="a" style="left:198px;top:194px;width:7px;height:384px;background:linear-gradient(270deg,rgba(0,0,0,.3),rgba(0,0,0,0))"></div>
<div class="a" style="left:205px;top:193px;width:466px;height:385px;background:#fff;border:1px solid #3a3a3a"></div>
<!-- DRAWING -->
<svg class="a" style="left:206px;top:194px" width="464" height="384" viewBox="206 194 464 384">
<defs><clipPath id="cl"><rect x="206" y="194" width="401.5" height="384"/></clipPath></defs>
<g fill="none" stroke="#111">
<path d="M607.5,241.9 A284.7,284.7 0 0 0 333.8,431.0" stroke="#4a4a4a" stroke-width="9.4"/>
<path d="M331.8,431.0 A295.4,295.4 0 0 0 315.9,582.0" stroke="#333" stroke-width="11.8"/>
<path d="M358.4,381.8h1.3v0.6h-1.3zM403.9,321.6h0.8v0.9h-0.8zM424.3,308.7h0.8v0.6h-0.8zM546.4,247.9h0.8v0.7h-0.8zM588.5,241.1h1.2v0.8h-1.2zM337.1,412.4h1.5v0.7h-1.5zM353.9,392.6h1.0v1.1h-1.0zM466.4,279.0h1.3v0.8h-1.3zM342.5,408.5h0.8v0.6h-0.8zM419.5,306.2h1.0v0.9h-1.0zM388.3,338.9h1.4v1.0h-1.4zM464.0,279.8h1.2v1.1h-1.2zM384.0,340.7h1.6v0.6h-1.6zM522.5,253.8h0.8v0.8h-0.8zM494.2,266.9h1.4v0.9h-1.4zM389.2,333.0h1.3v0.9h-1.3zM427.9,300.5h1.5v1.2h-1.5zM491.5,264.3h0.8v1.0h-0.8zM604.5,240.7h1.4v0.7h-1.4zM493.3,264.3h0.7v0.8h-0.7zM353.6,392.7h0.8v1.0h-0.8zM378.7,354.6h1.1v1.1h-1.1zM428.3,305.1h1.2v1.1h-1.2zM558.8,242.6h1.0v0.8h-1.0zM566.3,245.2h1.6v0.6h-1.6zM375.1,358.8h0.9v0.8h-0.9zM379.1,348.2h0.7v0.8h-0.7zM461.1,280.3h1.6v1.0h-1.6zM476.5,270.8h1.3v0.5h-1.3zM529.3,248.0h1.5v1.1h-1.5zM413.3,314.5h0.8v0.9h-0.8zM346.6,408.6h0.9v0.6h-0.9zM342.5,412.4h0.7v0.6h-0.7zM405.7,324.6h0.7v1.1h-0.7zM356.0,381.4h0.9v0.7h-0.9zM353.3,390.2h1.5v1.2h-1.5zM436.2,295.4h0.8v0.6h-0.8zM381.1,348.9h1.4v0.6h-1.4zM589.8,245.8h1.2v0.6h-1.2zM337.6,420.1h1.2v1.2h-1.2zM501.0,257.3h0.9v0.8h-0.9zM528.1,254.3h1.2v1.0h-1.2zM372.3,360.6h1.4v1.2h-1.4zM538.5,246.2h1.4v1.0h-1.4zM447.1,290.2h1.0v0.5h-1.0zM386.2,346.5h0.9v1.0h-0.9zM423.6,300.1h1.5v1.2h-1.5zM401.4,319.5h0.9v0.7h-0.9zM369.4,366.5h1.3v1.1h-1.3zM433.3,293.9h1.3v1.1h-1.3zM491.6,267.6h1.5v1.0h-1.5zM433.3,294.8h0.9v1.1h-0.9zM537.6,250.5h1.6v0.8h-1.6zM588.2,242.9h1.4v0.6h-1.4zM359.8,382.5h1.5v1.1h-1.5zM546.7,250.0h1.6v1.0h-1.6zM455.8,283.6h0.8v0.5h-0.8zM485.3,262.8h1.2v1.2h-1.2zM561.9,245.2h1.4v0.6h-1.4zM388.0,341.7h0.9v0.9h-0.9zM419.3,310.6h0.8v1.1h-0.8zM429.5,301.4h1.2v1.1h-1.2zM578.0,243.4h1.2v0.9h-1.2zM336.6,422.9h1.1v0.6h-1.1zM537.6,253.2h0.9v0.8h-0.9zM456.7,279.7h1.0v0.9h-1.0zM531.5,250.2h0.8v0.9h-0.8zM384.3,346.0h1.4v0.9h-1.4zM523.2,252.4h1.5v0.8h-1.5zM441.9,290.0h1.2v1.0h-1.2zM450.8,285.7h1.1v1.2h-1.1zM563.3,242.9h1.5v0.7h-1.5zM586.9,241.7h1.5v0.6h-1.5zM426.2,306.3h0.8v0.7h-0.8zM494.5,266.5h1.4v1.1h-1.4zM509.5,260.1h1.3v0.6h-1.3zM595.5,238.9h0.9v1.2h-0.9zM437.5,295.1h1.6v1.1h-1.6zM423.1,308.4h1.2v0.7h-1.2zM394.2,335.3h1.3v0.5h-1.3zM423.6,304.1h0.7v0.7h-0.7zM443.8,288.6h0.8v1.2h-0.8zM596.9,239.6h0.8v0.7h-0.8zM530.7,254.6h0.9v0.6h-0.9zM575.8,243.6h1.4v0.7h-1.4zM578.7,245.5h1.2v1.0h-1.2zM345.0,411.6h1.3v0.8h-1.3zM585.4,245.6h1.3v1.1h-1.3zM557.0,248.7h0.8v1.1h-0.8zM397.7,328.7h1.2v1.1h-1.2zM355.0,388.6h1.2v0.7h-1.2zM361.8,379.5h0.7v0.6h-0.7zM390.4,338.2h1.4v0.7h-1.4zM362.2,373.0h1.0v0.5h-1.0zM338.2,424.8h1.4v0.9h-1.4zM434.9,299.0h1.5v0.6h-1.5zM420.0,304.3h1.1v1.1h-1.1zM443.2,291.2h1.3v1.2h-1.3zM548.4,248.1h1.3v0.9h-1.3zM400.1,326.9h0.7v0.6h-0.7zM517.9,258.0h0.9v0.6h-0.9zM551.8,249.6h1.5v1.0h-1.5zM376.6,355.4h1.0v0.8h-1.0zM427.0,305.3h0.9v1.2h-0.9zM452.8,279.7h0.9v1.2h-0.9zM402.8,325.1h0.7v0.8h-0.7zM441.7,291.5h0.9v0.9h-0.9zM383.0,350.7h0.8v0.8h-0.8zM340.6,423.0h1.0v0.7h-1.0zM449.0,285.6h1.4v1.0h-1.4zM564.2,242.6h1.1v0.7h-1.1zM353.7,379.6h1.4v1.0h-1.4zM549.8,250.2h1.5v0.9h-1.5zM540.8,246.6h0.8v0.9h-0.8zM549.0,246.7h1.4v1.1h-1.4zM569.2,243.0h1.3v1.0h-1.3zM340.4,419.7h0.8v0.8h-0.8zM549.9,249.7h1.2v0.9h-1.2zM496.5,261.0h1.1v0.5h-1.1zM518.7,251.8h1.2v0.9h-1.2zM342.2,407.1h1.4v0.7h-1.4zM382.9,350.0h1.4v0.6h-1.4zM598.4,240.0h1.1v0.8h-1.1zM497.9,261.7h1.4v0.9h-1.4zM344.0,403.5h0.8v0.7h-0.8zM387.7,336.2h1.2v0.5h-1.2zM383.7,349.2h1.3v1.0h-1.3zM385.0,340.1h1.2v0.8h-1.2zM351.8,391.2h1.5v0.6h-1.5zM584.3,238.6h0.7v0.8h-0.7zM595.7,239.4h1.1v0.7h-1.1zM587.9,244.4h0.9v0.9h-0.9zM449.3,289.5h1.6v0.6h-1.6zM441.9,288.1h1.5v1.0h-1.5zM571.2,245.6h1.1v0.5h-1.1zM440.6,296.7h1.1v0.7h-1.1zM400.7,329.2h1.0v1.1h-1.0zM521.3,257.5h1.5v0.6h-1.5zM506.4,254.8h1.5v0.7h-1.5zM411.8,316.0h1.6v0.9h-1.6zM421.2,308.0h0.9v0.5h-0.9zM549.5,249.8h1.0v1.2h-1.0zM381.9,349.1h1.2v0.6h-1.2zM591.5,243.0h1.5v1.1h-1.5zM576.4,241.9h1.5v0.9h-1.5zM339.4,412.2h1.4v0.8h-1.4zM484.3,265.1h1.0v0.5h-1.0zM350.2,386.7h1.1v0.7h-1.1zM516.7,256.5h1.6v0.7h-1.6zM387.4,337.6h1.2v0.8h-1.2zM361.4,379.2h0.9v1.1h-0.9zM370.6,360.7h1.5v1.2h-1.5zM355.6,384.7h0.9v0.6h-0.9zM348.2,400.2h0.9v0.7h-0.9zM567.2,243.4h1.4v0.8h-1.4zM448.2,287.7h1.0v0.7h-1.0zM385.6,346.8h1.6v0.6h-1.6zM480.3,269.1h1.5v0.7h-1.5zM378.0,353.7h1.1v0.8h-1.1zM553.2,242.4h1.5v0.5h-1.5zM507.6,261.8h1.5v0.8h-1.5zM333.9,428.8h1.1v1.1h-1.1zM555.8,243.0h1.6v0.7h-1.6zM360.5,381.6h1.2v1.0h-1.2zM509.3,253.7h1.3v1.0h-1.3zM456.2,282.4h0.7v1.0h-0.7zM578.9,244.8h1.3v0.7h-1.3zM379.6,353.5h1.3v1.0h-1.3zM346.7,407.5h1.2v0.9h-1.2zM372.0,360.2h1.2v0.5h-1.2zM430.4,301.2h1.6v1.0h-1.6zM431.9,294.5h0.9v0.7h-0.9zM503.5,255.5h1.0v0.5h-1.0zM494.8,262.8h1.1v0.7h-1.1zM580.5,241.3h0.9v0.5h-0.9zM419.3,309.8h1.3v0.6h-1.3zM515.6,252.8h1.2v0.6h-1.2zM388.1,333.1h1.4v0.7h-1.4zM524.1,254.9h1.0v1.2h-1.0zM364.1,370.2h0.9v0.8h-0.9zM588.8,240.8h0.8v0.8h-0.8zM597.9,244.1h0.8v0.5h-0.8zM413.5,317.7h1.5v1.1h-1.5zM606.1,240.0h1.5v0.7h-1.5zM584.5,244.8h1.4v0.5h-1.4zM406.5,317.7h1.0v0.7h-1.0zM337.2,429.1h1.0v0.7h-1.0zM349.4,387.7h1.6v0.6h-1.6zM544.6,248.8h1.4v0.8h-1.4zM435.2,300.1h1.0v1.1h-1.0zM405.4,323.9h1.5v0.5h-1.5zM541.2,249.1h1.4v0.5h-1.4zM346.1,410.2h1.5v0.7h-1.5zM571.0,241.5h1.0v0.7h-1.0zM474.8,267.8h0.9v1.0h-0.9zM383.6,346.1h0.7v1.0h-0.7zM480.4,265.5h1.5v0.5h-1.5zM434.8,298.6h1.6v1.2h-1.6zM377.8,352.5h1.1v0.8h-1.1zM360.4,369.7h1.4v1.0h-1.4zM527.0,249.2h1.2v0.7h-1.2zM404.1,323.8h1.4v0.6h-1.4zM521.6,255.9h0.9v0.5h-0.9zM458.2,285.0h1.0v1.2h-1.0zM602.7,238.8h0.9v0.6h-0.9zM442.1,294.8h1.3v0.8h-1.3zM418.8,311.3h1.3v1.0h-1.3zM552.9,244.1h1.3v0.6h-1.3zM384.7,338.5h1.2v0.8h-1.2zM364.8,365.7h0.9v0.7h-0.9zM566.5,246.7h1.2v0.7h-1.2zM604.3,242.6h1.2v0.7h-1.2zM487.0,263.4h1.6v0.6h-1.6zM543.6,248.1h1.5v1.1h-1.5zM389.4,342.6h0.8v0.6h-0.8zM464.0,273.3h1.5v0.8h-1.5zM424.5,300.3h0.9v1.0h-0.9zM346.4,393.4h1.2v0.9h-1.2zM406.4,322.7h0.8v0.6h-0.8zM471.7,275.5h1.3v0.6h-1.3zM397.4,334.1h1.3v0.6h-1.3zM368.4,366.3h1.4v0.9h-1.4zM351.8,397.9h1.1v0.9h-1.1zM346.2,399.1h0.8v1.0h-0.8zM384.8,343.5h1.0v1.2h-1.0zM461.3,280.7h1.0v0.8h-1.0zM605.8,239.0h1.0v0.6h-1.0zM365.8,364.4h0.7v1.1h-0.7zM544.1,248.4h1.1v1.1h-1.1zM359.6,377.7h0.7v0.9h-0.7zM575.1,242.0h0.8v0.9h-0.8zM442.6,291.8h0.8v0.7h-0.8zM580.7,242.4h0.8v0.8h-0.8zM595.2,239.5h0.9v0.6h-0.9zM598.3,238.4h1.1v0.5h-1.1zM407.6,314.0h1.5v0.9h-1.5zM356.8,376.9h1.4v0.7h-1.4zM553.1,246.8h1.4v0.6h-1.4zM414.4,315.3h1.2v0.8h-1.2zM378.6,354.8h1.4v1.1h-1.4zM461.1,283.2h1.4v0.5h-1.4zM349.1,390.0h1.2v0.9h-1.2zM388.8,336.3h1.1v0.9h-1.1zM490.0,265.4h1.1v0.8h-1.1zM478.6,274.1h1.1v0.7h-1.1zM529.6,249.0h1.1v0.6h-1.1zM349.9,394.7h0.8v0.8h-0.8zM426.3,306.6h1.2v0.5h-1.2zM344.8,402.0h1.4v1.0h-1.4zM341.5,411.3h1.2v0.8h-1.2zM351.6,383.8h1.5v1.2h-1.5zM541.8,246.4h0.9v1.2h-0.9zM591.7,242.1h1.5v0.6h-1.5zM582.3,240.2h0.8v0.7h-0.8zM357.0,377.7h1.5v0.7h-1.5zM353.8,382.1h1.2v1.1h-1.2zM381.5,350.1h1.2v0.7h-1.2zM366.1,373.7h0.8v1.2h-0.8zM570.0,242.2h0.9v1.0h-0.9zM451.4,288.4h1.3v0.8h-1.3zM455.7,278.9h1.2v1.1h-1.2zM604.5,244.9h1.3v0.8h-1.3zM378.3,346.7h1.6v0.9h-1.6zM525.2,253.5h1.1v0.6h-1.1zM339.0,412.5h1.4v0.7h-1.4zM601.3,240.7h1.2v1.0h-1.2zM336.1,429.0h0.7v0.6h-0.7zM421.1,305.5h1.2v1.1h-1.2zM374.4,360.3h1.3v0.5h-1.3zM404.1,327.2h0.8v0.8h-0.8zM466.9,278.3h1.2v0.6h-1.2zM433.0,296.2h0.8v1.2h-0.8zM358.7,382.6h0.8v0.9h-0.8zM530.2,248.0h1.1v0.7h-1.1zM486.8,270.3h1.2v0.7h-1.2zM424.1,302.8h1.5v1.0h-1.5zM573.2,245.2h0.7v0.9h-0.7zM374.8,356.1h0.8v1.0h-0.8zM457.8,285.4h1.5v0.6h-1.5zM474.6,274.5h1.2v0.9h-1.2zM359.6,372.6h1.0v0.7h-1.0zM568.4,247.3h1.4v1.0h-1.4zM553.0,250.0h1.4v0.8h-1.4zM426.1,300.3h0.9v0.6h-0.9zM341.4,417.2h1.0v1.0h-1.0zM552.4,244.6h1.3v0.7h-1.3zM422.4,305.0h1.4v0.9h-1.4zM485.1,268.9h1.6v0.7h-1.6zM333.6,423.0h0.9v0.7h-0.9zM587.4,240.3h1.4v0.7h-1.4zM392.7,329.1h0.9v1.1h-0.9zM500.5,259.4h1.3v1.2h-1.3zM550.7,246.7h1.3v1.1h-1.3zM511.6,257.1h1.2v0.7h-1.2zM479.1,272.2h0.8v1.1h-0.8zM340.4,421.3h0.8v1.2h-0.8zM356.7,384.5h0.7v0.5h-0.7zM481.1,267.1h1.3v1.0h-1.3zM469.6,278.3h1.0v1.1h-1.0zM568.4,241.3h0.8v1.1h-0.8zM587.2,238.9h0.8v0.6h-0.8zM341.7,419.0h1.5v1.1h-1.5zM545.4,246.4h1.3v0.7h-1.3zM351.0,398.9h1.4v0.6h-1.4zM420.2,309.2h0.7v0.7h-0.7zM509.0,259.2h1.0v0.7h-1.0zM439.8,288.1h1.5v0.9h-1.5zM418.8,313.4h1.1v1.0h-1.1zM505.2,260.0h1.2v0.7h-1.2zM344.6,398.4h1.4v0.6h-1.4zM370.1,368.1h1.4v1.2h-1.4zM440.3,296.9h1.1v1.1h-1.1zM440.6,295.0h1.0v1.1h-1.0zM587.3,244.1h1.0v0.7h-1.0zM439.4,290.9h0.8v0.9h-0.8zM533.6,253.5h1.3v1.1h-1.3zM400.9,323.6h1.1v0.8h-1.1zM343.6,399.8h1.5v0.5h-1.5zM381.6,350.0h1.5v0.9h-1.5zM566.3,245.0h0.9v0.8h-0.9zM521.4,253.2h1.4v1.0h-1.4zM395.3,332.4h0.8v1.1h-0.8zM516.9,253.5h0.9v0.8h-0.9zM463.5,275.3h0.8v0.8h-0.8zM371.9,353.8h0.9v0.7h-0.9zM551.8,244.7h0.8v0.6h-0.8zM395.9,333.0h1.2v0.6h-1.2zM365.5,370.4h1.6v1.0h-1.6zM593.8,245.0h0.8v0.8h-0.8zM534.3,246.1h1.4v0.8h-1.4zM484.0,270.0h0.8v0.6h-0.8zM339.6,418.3h1.1v1.1h-1.1zM440.0,290.5h1.3v0.8h-1.3zM473.4,275.6h1.1v1.0h-1.1zM419.0,304.3h1.2v1.0h-1.2zM372.8,358.6h1.3v1.1h-1.3zM502.5,257.5h1.5v1.0h-1.5zM426.9,300.6h1.0v0.9h-1.0zM420.2,311.5h1.4v1.0h-1.4zM376.1,351.6h1.1v0.8h-1.1zM414.8,310.7h1.3v1.2h-1.3zM489.3,267.7h1.4v0.8h-1.4zM598.0,241.9h0.7v0.9h-0.7zM531.4,253.4h1.5v0.9h-1.5zM464.6,280.7h1.2v1.0h-1.2zM483.4,267.6h1.4v0.9h-1.4zM588.7,242.8h0.9v1.0h-0.9zM524.5,253.4h0.8v1.2h-0.8zM343.0,411.1h0.9v0.8h-0.9zM420.4,312.2h1.1v1.0h-1.1zM381.1,348.7h0.9v1.0h-0.9zM446.9,283.7h0.9v1.1h-0.9zM369.6,363.5h0.8v1.0h-0.8zM480.8,266.2h1.1v0.9h-1.1zM594.3,244.0h1.0v0.9h-1.0zM542.0,245.6h1.1v0.7h-1.1zM352.4,388.8h1.5v0.7h-1.5zM378.6,345.7h1.0v0.7h-1.0zM364.3,370.9h0.7v1.0h-0.7zM377.2,354.6h1.0v0.8h-1.0zM483.0,268.5h1.3v0.8h-1.3zM555.3,242.3h0.8v1.1h-0.8zM530.7,247.6h0.8v1.1h-0.8zM335.4,423.8h0.7v1.2h-0.7zM375.9,351.4h0.8v0.6h-0.8zM529.4,253.4h1.0v0.6h-1.0zM533.4,246.9h0.9v1.1h-0.9zM530.4,250.1h1.3v1.1h-1.3zM550.0,244.3h0.9v1.0h-0.9zM517.2,254.5h1.1v1.1h-1.1zM379.7,347.9h0.9v0.6h-0.9zM342.3,410.0h1.1v0.6h-1.1zM440.3,292.3h1.2v1.1h-1.2zM551.8,250.2h1.1v0.9h-1.1zM550.8,245.1h1.0v0.8h-1.0zM341.5,403.1h1.3v0.9h-1.3zM475.7,275.5h1.3v1.2h-1.3zM600.5,243.1h1.2v0.8h-1.2zM335.9,416.8h1.3v0.9h-1.3zM558.5,246.4h1.0v0.8h-1.0zM526.9,251.7h0.9v0.8h-0.9zM457.1,282.1h1.4v0.7h-1.4zM412.3,310.8h1.2v0.7h-1.2zM598.1,241.8h1.3v1.1h-1.3zM393.1,335.0h1.0v0.9h-1.0zM531.3,249.6h0.7v1.0h-0.7zM452.6,280.6h0.7v0.7h-0.7zM367.8,371.5h1.5v0.9h-1.5zM532.9,249.0h1.5v0.9h-1.5zM479.1,268.7h1.3v0.9h-1.3zM367.9,362.0h1.3v0.8h-1.3zM347.0,395.4h0.9v0.5h-0.9zM576.5,240.8h1.3v0.8h-1.3zM531.8,248.0h1.2v0.7h-1.2zM419.8,309.8h1.0v0.8h-1.0zM583.6,241.3h0.7v0.9h-0.7zM354.8,392.6h1.4v0.9h-1.4zM423.5,300.5h0.7v0.8h-0.7zM585.0,241.6h1.6v0.8h-1.6zM349.5,396.5h1.3v0.6h-1.3zM338.9,425.0h0.7v1.0h-0.7zM595.2,244.8h0.8v1.1h-0.8zM339.4,424.3h1.3v0.7h-1.3zM362.5,369.2h0.7v1.0h-0.7zM555.9,243.9h1.4v0.6h-1.4zM506.0,257.4h1.1v1.2h-1.1zM594.4,243.8h1.3v0.5h-1.3zM488.6,269.5h1.4v0.6h-1.4zM513.5,257.5h0.8v1.1h-0.8zM342.5,409.6h1.0v0.9h-1.0zM495.8,262.9h0.8v1.1h-0.8zM485.7,267.8h1.3v0.8h-1.3zM532.5,251.3h1.6v1.0h-1.6zM386.0,340.3h0.8v1.2h-0.8zM546.1,245.7h1.0v0.9h-1.0zM547.1,243.4h1.2v0.7h-1.2zM567.7,244.4h1.0v1.0h-1.0zM570.3,242.8h1.4v0.7h-1.4zM382.8,351.0h1.1v0.9h-1.1zM567.0,241.5h0.7v1.1h-0.7zM559.9,242.5h1.2v0.7h-1.2zM538.8,246.1h1.3v1.1h-1.3zM347.3,402.0h1.2v1.1h-1.2zM520.7,256.1h1.5v0.7h-1.5zM495.6,261.5h1.1v0.6h-1.1zM520.9,255.6h1.4v0.8h-1.4zM540.0,251.9h1.4v0.7h-1.4zM570.6,242.9h1.5v0.9h-1.5zM467.7,275.7h0.9v0.6h-0.9zM504.4,261.7h1.0v0.9h-1.0zM446.2,289.1h0.8v0.5h-0.8zM403.6,317.0h0.8v0.9h-0.8zM356.3,378.3h1.2v0.7h-1.2zM336.9,422.3h0.7v1.2h-0.7zM435.1,292.3h1.2v0.7h-1.2zM418.5,306.0h1.6v1.0h-1.6zM594.0,239.4h0.9v0.5h-0.9zM364.7,373.4h0.8v0.5h-0.8zM561.4,244.3h1.1v1.2h-1.1zM340.1,406.8h1.2v0.8h-1.2zM592.7,244.9h0.9v0.9h-0.9zM591.6,240.9h1.3v0.8h-1.3zM359.2,378.6h1.6v1.2h-1.6zM341.4,417.3h0.9v0.7h-0.9zM573.0,240.1h1.5v0.5h-1.5zM505.7,256.2h1.3v1.2h-1.3zM359.1,384.7h1.4v1.2h-1.4zM386.8,338.0h1.2v1.0h-1.2zM396.0,334.4h0.9v0.6h-0.9zM360.6,375.8h0.9v0.6h-0.9zM334.7,424.5h1.3v0.6h-1.3zM581.7,246.2h0.9v1.2h-0.9zM567.4,241.0h0.8v0.8h-0.8zM582.1,245.6h1.5v0.9h-1.5zM397.9,328.5h1.4v0.8h-1.4zM354.9,383.1h0.9v0.5h-0.9zM455.8,280.3h0.8v1.1h-0.8zM417.3,312.2h0.8v0.7h-0.8zM394.4,327.8h0.9v0.8h-0.9zM573.0,244.7h0.8v1.2h-0.8zM570.4,247.0h1.3v0.6h-1.3zM385.1,342.4h0.9v0.6h-0.9zM603.8,242.9h1.6v1.1h-1.6zM388.1,343.5h1.5v0.5h-1.5zM385.3,339.2h1.6v0.5h-1.6zM396.2,326.3h0.8v0.5h-0.8zM447.2,284.5h0.9v0.8h-0.9zM367.6,359.3h1.2v0.6h-1.2zM527.5,254.3h1.3v0.6h-1.3zM349.5,402.2h1.2v0.8h-1.2zM369.2,365.7h1.3v1.0h-1.3zM464.5,274.4h0.9v0.5h-0.9zM413.9,310.3h1.3v0.5h-1.3zM394.8,327.8h1.5v1.1h-1.5zM336.4,424.0h1.5v0.8h-1.5zM378.2,345.9h0.9v1.1h-0.9zM360.4,377.8h1.0v0.9h-1.0zM448.7,291.2h1.1v0.9h-1.1zM509.0,260.5h1.4v1.1h-1.4zM507.4,259.5h1.0v1.0h-1.0zM562.7,248.0h1.6v0.8h-1.6zM449.7,285.9h1.2v0.5h-1.2zM368.4,357.5h0.9v0.6h-0.9zM543.3,249.9h0.7v0.6h-0.7zM364.3,367.0h0.7v0.9h-0.7zM447.1,286.9h1.3v0.6h-1.3zM508.0,254.7h0.7v0.6h-0.7zM441.0,291.8h1.0v0.6h-1.0zM355.4,385.7h1.2v1.1h-1.2zM463.9,280.7h1.4v0.6h-1.4zM584.8,239.8h1.0v0.8h-1.0zM446.8,284.6h1.1v1.2h-1.1zM395.8,327.1h0.9v0.7h-0.9zM600.3,242.3h1.4v1.1h-1.4zM553.0,243.5h0.7v0.9h-0.7zM583.6,238.8h0.9v0.8h-0.9zM403.1,321.4h1.2v0.5h-1.2zM442.4,291.4h0.7v0.6h-0.7zM528.0,247.8h1.5v0.9h-1.5zM566.0,241.7h1.5v0.5h-1.5zM379.5,347.1h1.3v0.7h-1.3zM580.3,242.3h1.3v0.7h-1.3zM421.9,305.8h1.6v0.7h-1.6zM486.7,267.9h0.8v0.9h-0.8zM442.8,286.2h0.9v0.8h-0.9zM356.6,381.7h0.8v0.6h-0.8zM415.8,313.3h1.0v0.7h-1.0zM456.1,285.8h1.5v0.9h-1.5zM486.8,265.6h0.9v1.0h-0.9zM455.1,283.0h1.3v0.8h-1.3zM376.4,355.3h0.9v0.9h-0.9zM467.0,276.9h0.7v0.7h-0.7zM372.2,353.7h1.2v0.8h-1.2zM602.6,243.5h1.0v1.0h-1.0zM345.9,408.5h1.5v0.8h-1.5zM412.1,319.0h1.1v1.0h-1.1zM374.1,361.0h1.6v1.0h-1.6zM398.9,330.9h1.0v1.0h-1.0zM554.1,244.9h1.4v0.9h-1.4zM517.1,252.8h1.4v0.8h-1.4zM505.3,256.4h1.5v0.6h-1.5zM332.3,426.7h1.4v0.9h-1.4zM593.8,241.9h1.2v0.8h-1.2zM561.9,242.4h1.2v0.8h-1.2zM429.0,300.9h1.4v0.7h-1.4zM457.6,282.1h1.0v0.7h-1.0zM553.7,243.6h1.1v0.8h-1.1zM390.9,339.2h0.8v0.9h-0.8zM346.1,400.3h1.5v0.7h-1.5zM549.7,243.9h1.6v0.6h-1.6zM575.5,243.6h0.7v0.5h-0.7zM439.7,292.0h1.5v1.0h-1.5zM606.4,241.5h1.2v0.9h-1.2zM409.3,315.0h1.0v0.9h-1.0zM588.6,243.3h1.3v0.9h-1.3zM408.5,322.0h1.1v0.9h-1.1zM564.6,243.7h1.6v0.8h-1.6zM478.9,270.3h1.6v0.7h-1.6zM542.4,247.9h0.9v0.7h-0.9zM545.2,243.7h1.2v0.6h-1.2zM498.8,257.9h1.4v1.2h-1.4zM416.6,306.5h0.8v0.7h-0.8zM442.1,290.8h0.9v0.6h-0.9zM471.5,272.3h1.0v1.2h-1.0zM339.0,414.8h1.1v1.1h-1.1zM500.7,262.0h0.7v0.7h-0.7zM465.4,273.7h1.3v0.6h-1.3zM456.6,281.8h0.9v1.0h-0.9zM606.0,241.6h1.2v0.8h-1.2zM360.8,380.8h1.4v0.6h-1.4zM363.5,376.8h1.2v1.1h-1.2zM539.1,247.9h0.8v0.5h-0.8zM392.0,331.2h1.3v0.7h-1.3zM382.5,349.2h0.8v1.1h-0.8zM399.4,325.5h1.1v0.8h-1.1zM568.8,247.2h1.2v1.2h-1.2zM477.5,271.0h0.9v0.5h-0.9zM555.4,242.2h1.0v1.1h-1.0zM387.1,336.0h1.2v1.2h-1.2zM589.2,242.1h0.9v0.8h-0.9zM369.5,359.3h1.0v1.1h-1.0zM534.5,250.0h0.9v0.6h-0.9zM364.8,371.0h1.6v0.7h-1.6zM350.6,391.9h1.2v0.8h-1.2zM343.9,408.1h0.8v1.1h-0.8zM376.7,354.3h0.9v0.7h-0.9zM340.8,418.4h1.3v0.7h-1.3zM506.1,261.3h0.8v0.7h-0.8zM350.9,386.9h1.1v1.1h-1.1zM356.7,377.3h1.0v1.0h-1.0zM592.3,242.9h0.9v1.2h-0.9zM372.0,358.6h1.1v0.6h-1.1zM378.0,348.2h1.5v0.9h-1.5zM376.9,353.9h1.2v0.6h-1.2zM349.8,388.3h1.2v0.9h-1.2zM527.8,253.5h1.0v1.0h-1.0zM390.3,335.4h1.1v0.6h-1.1zM555.0,248.3h1.0v1.0h-1.0zM460.8,282.8h1.0v0.9h-1.0zM344.7,408.3h1.0v0.7h-1.0zM509.7,260.3h1.0v0.8h-1.0zM527.6,248.4h1.5v1.1h-1.5zM384.9,346.7h0.7v1.0h-0.7zM399.6,324.5h1.1v1.0h-1.1zM375.3,351.7h1.5v0.7h-1.5zM362.1,371.3h0.8v1.1h-0.8zM506.8,256.3h0.7v0.5h-0.7zM368.3,368.5h1.0v0.8h-1.0zM393.3,338.1h1.3v0.6h-1.3zM460.4,276.5h1.3v0.7h-1.3zM498.2,261.9h1.0v0.5h-1.0zM528.3,248.8h1.0v0.5h-1.0zM472.1,270.1h0.7v0.7h-0.7zM534.8,253.0h0.9v1.1h-0.9zM344.6,400.3h1.3v0.8h-1.3zM546.5,245.3h1.0v0.6h-1.0zM417.2,305.4h1.5v1.0h-1.5zM547.0,245.3h1.3v0.8h-1.3zM503.9,263.0h1.1v0.9h-1.1zM350.2,386.6h1.4v0.5h-1.4zM538.6,247.3h0.9v0.9h-0.9zM481.3,264.6h1.2v0.7h-1.2zM404.5,326.2h1.1v0.6h-1.1zM356.0,386.2h1.3v1.0h-1.3zM376.7,355.8h1.2v0.8h-1.2zM398.1,322.9h1.0v1.1h-1.0zM461.0,282.4h1.0v1.1h-1.0zM523.4,252.5h0.9v1.0h-0.9zM429.2,299.3h1.4v1.1h-1.4zM387.9,343.4h1.0v0.6h-1.0zM386.4,345.9h0.9v1.0h-0.9zM351.0,392.9h1.0v0.8h-1.0zM361.3,376.5h0.8v0.5h-0.8zM519.0,250.2h0.8v1.0h-0.8zM457.9,276.6h0.8v0.8h-0.8zM365.0,369.7h1.2v0.5h-1.2zM483.8,263.9h1.3v1.2h-1.3zM376.3,351.1h0.9v0.6h-0.9zM529.2,255.1h1.5v0.7h-1.5zM484.1,270.1h1.5v1.1h-1.5zM532.4,253.1h1.4v1.0h-1.4zM364.6,371.8h1.4v0.7h-1.4zM456.5,283.0h1.0v1.1h-1.0zM341.7,416.4h1.2v0.9h-1.2zM504.2,256.5h1.5v1.2h-1.5zM440.6,292.0h0.8v0.7h-0.8zM344.9,402.8h1.3v0.6h-1.3zM596.3,242.3h0.8v0.5h-0.8zM365.1,369.4h1.4v0.5h-1.4zM555.7,242.9h1.4v0.8h-1.4zM491.3,266.0h1.2v0.8h-1.2zM424.2,305.8h1.3v1.1h-1.3zM357.0,375.3h1.0v0.8h-1.0zM399.3,325.8h0.9v0.6h-0.9zM430.3,301.1h1.6v1.1h-1.6zM597.9,239.0h1.6v0.9h-1.6zM340.2,408.5h1.3v0.9h-1.3zM462.8,280.0h1.6v0.8h-1.6zM387.1,338.0h1.0v1.1h-1.0zM367.4,371.8h1.3v0.8h-1.3zM491.5,267.6h1.0v0.9h-1.0zM449.9,286.6h1.2v0.8h-1.2zM365.3,373.8h1.5v0.9h-1.5zM559.0,248.1h0.9v0.6h-0.9zM377.0,351.6h1.1v0.9h-1.1zM463.6,280.2h0.8v0.9h-0.8zM344.8,402.8h1.1v0.6h-1.1zM559.0,245.5h1.2v1.0h-1.2zM349.2,391.3h1.6v1.0h-1.6zM548.0,250.1h1.1v0.6h-1.1zM457.7,276.9h1.4v0.6h-1.4zM340.1,409.4h0.9v0.8h-0.9zM471.0,278.0h0.9v0.7h-0.9zM418.9,306.4h1.5v0.9h-1.5zM458.1,277.5h1.5v1.1h-1.5zM519.2,256.8h1.0v1.0h-1.0zM545.5,246.0h0.8v0.8h-0.8zM588.6,240.3h1.3v0.5h-1.3zM347.8,396.5h1.2v1.1h-1.2zM580.9,245.6h1.3v0.7h-1.3zM427.1,304.9h1.5v0.9h-1.5zM339.9,423.3h0.8v1.1h-0.8zM458.1,283.7h1.0v1.0h-1.0zM356.8,383.6h1.5v0.9h-1.5zM539.5,247.2h1.6v0.5h-1.6zM358.3,381.7h1.2v1.1h-1.2zM336.8,416.6h0.9v1.1h-0.9zM410.1,314.3h1.1v0.6h-1.1zM409.4,313.2h1.5v0.9h-1.5zM397.5,333.2h0.9v1.1h-0.9zM339.5,414.5h0.9v0.8h-0.9zM464.0,277.8h1.0v0.7h-1.0zM466.4,280.6h1.0v0.5h-1.0zM602.2,242.1h0.7v0.6h-0.7zM380.8,345.1h0.9v0.9h-0.9zM462.3,280.6h1.2v1.2h-1.2zM335.3,416.4h1.2v1.0h-1.2zM527.4,248.7h1.3v0.9h-1.3zM384.7,344.2h1.4v1.1h-1.4zM495.8,258.7h1.0v1.0h-1.0zM442.3,288.6h1.3v0.7h-1.3zM414.3,311.9h0.8v0.7h-0.8zM602.9,243.2h1.1v0.8h-1.1zM375.3,357.7h1.0v0.6h-1.0zM562.1,248.5h1.1v0.8h-1.1zM388.3,337.6h0.9v0.5h-0.9zM391.3,337.4h1.4v0.9h-1.4zM395.4,325.7h1.5v0.9h-1.5zM365.2,374.5h1.2v1.2h-1.2zM528.5,252.6h1.1v1.1h-1.1zM438.2,297.7h1.5v0.7h-1.5zM339.1,422.2h0.8v0.7h-0.8zM368.9,360.2h1.1v0.6h-1.1zM559.1,244.2h1.3v0.6h-1.3zM593.9,240.1h1.2v0.6h-1.2zM562.8,242.1h1.0v0.6h-1.0zM452.9,286.8h1.5v0.9h-1.5zM366.3,361.0h1.0v1.0h-1.0zM413.6,311.5h1.3v0.7h-1.3zM419.0,312.9h0.7v0.9h-0.7zM439.8,294.1h1.2v0.7h-1.2zM336.4,424.7h1.5v0.9h-1.5zM338.4,409.3h1.3v1.0h-1.3zM348.7,399.5h0.8v0.6h-0.8zM345.1,399.1h1.4v0.8h-1.4zM467.2,275.4h1.2v1.0h-1.2zM394.9,330.0h1.4v0.7h-1.4zM524.0,251.0h1.4v0.7h-1.4zM599.0,239.7h1.1v0.7h-1.1zM586.1,242.1h0.8v0.5h-0.8zM488.7,265.5h1.4v0.8h-1.4zM369.2,356.1h1.4v0.6h-1.4zM357.5,388.0h0.8v0.9h-0.8zM362.6,371.6h1.5v0.8h-1.5zM364.5,374.6h1.4v1.1h-1.4zM340.6,420.6h1.4v0.7h-1.4zM438.3,289.0h1.3v0.7h-1.3zM427.9,298.3h1.0v1.1h-1.0zM515.3,258.5h0.8v1.0h-0.8zM559.3,245.8h0.8v0.9h-0.8zM578.5,243.5h1.6v0.9h-1.6zM379.0,353.0h0.9v0.8h-0.9zM368.9,366.7h1.4v0.9h-1.4zM604.9,243.4h0.9v0.9h-0.9zM559.2,247.7h1.5v0.7h-1.5zM544.5,245.7h1.0v0.7h-1.0zM568.6,243.9h0.8v1.0h-0.8zM426.9,301.0h1.2v1.1h-1.2zM566.3,246.3h1.0v1.0h-1.0zM360.7,370.1h1.5v1.2h-1.5zM339.0,421.7h0.8v1.2h-0.8zM576.2,246.8h0.8v1.0h-0.8zM363.2,377.4h1.3v0.6h-1.3zM578.3,244.0h1.3v1.1h-1.3zM335.2,416.9h0.9v1.1h-0.9zM338.0,416.1h1.2v0.7h-1.2zM349.8,395.5h0.7v1.2h-0.7zM564.4,245.7h0.8v0.8h-0.8zM422.4,309.3h0.9v1.0h-0.9zM516.8,257.7h1.2v0.6h-1.2zM440.3,293.6h1.5v0.7h-1.5zM595.6,244.1h1.5v1.0h-1.5zM363.6,374.1h0.9v0.5h-0.9zM445.3,293.1h1.1v0.9h-1.1zM336.8,426.0h1.3v1.0h-1.3zM455.0,282.3h1.3v1.2h-1.3zM508.2,254.6h1.1v0.7h-1.1zM597.4,242.5h1.0v0.8h-1.0zM356.4,383.8h1.6v0.5h-1.6zM580.9,241.7h0.9v0.9h-0.9zM375.7,355.4h0.9v0.6h-0.9zM530.8,248.1h1.5v0.5h-1.5zM392.8,331.2h1.3v0.9h-1.3zM597.0,243.3h0.7v1.0h-0.7zM442.2,287.6h1.2v1.2h-1.2zM481.2,271.0h1.4v0.8h-1.4zM410.2,313.9h1.2v0.9h-1.2zM392.3,331.9h1.3v0.9h-1.3zM475.9,273.7h0.9v1.1h-0.9zM510.5,257.1h1.2v0.8h-1.2zM357.5,384.9h1.5v0.9h-1.5zM448.7,286.4h1.4v0.7h-1.4zM545.0,250.2h1.1v0.9h-1.1zM569.4,241.1h1.5v0.5h-1.5zM548.2,247.9h1.4v0.6h-1.4zM379.3,353.4h0.8v0.7h-0.8zM445.7,285.7h1.1v0.6h-1.1zM605.9,242.6h1.3v0.8h-1.3zM536.4,249.6h1.4v0.6h-1.4zM403.4,320.5h1.2v0.7h-1.2zM398.4,328.9h1.0v0.5h-1.0zM463.0,280.7h0.8v0.6h-0.8zM381.0,344.3h1.0v0.7h-1.0zM344.8,398.4h1.3v1.1h-1.3zM420.7,310.1h1.4v0.9h-1.4zM341.1,415.1h1.1v0.8h-1.1zM385.8,338.8h1.1v1.0h-1.1zM399.0,323.4h1.0v0.9h-1.0zM362.1,367.1h1.6v1.0h-1.6zM492.3,264.9h1.0v0.5h-1.0zM406.2,317.0h1.2v0.8h-1.2zM521.5,250.2h0.7v0.9h-0.7zM430.1,299.9h1.5v0.8h-1.5zM568.4,244.0h1.1v0.8h-1.1zM545.5,247.4h1.3v1.0h-1.3zM340.4,416.1h1.3v0.9h-1.3zM526.1,249.9h0.8v0.7h-0.8zM543.7,251.2h0.8v0.6h-0.8zM459.0,278.0h0.7v1.0h-0.7zM434.8,294.0h0.7v1.0h-0.7zM466.3,277.0h1.6v1.1h-1.6zM353.8,381.3h1.0v0.9h-1.0zM603.0,245.7h0.9v0.7h-0.9zM379.1,351.7h1.5v0.9h-1.5zM418.3,308.9h0.7v0.7h-0.7zM537.0,246.4h1.5v0.7h-1.5zM343.4,413.0h1.2v0.8h-1.2zM437.7,294.3h1.2v0.8h-1.2zM364.6,365.1h1.5v0.9h-1.5zM394.1,337.2h1.2v0.8h-1.2zM393.3,332.1h0.9v1.1h-0.9zM507.3,259.7h1.4v0.9h-1.4zM584.0,242.7h1.1v1.1h-1.1zM424.2,308.6h1.3v0.5h-1.3zM341.6,404.5h1.2v0.6h-1.2zM457.3,277.5h1.4v0.8h-1.4zM494.5,261.4h1.0v0.6h-1.0zM354.0,381.3h1.5v0.6h-1.5zM350.6,399.7h1.4v1.2h-1.4zM490.0,265.5h0.9v1.1h-0.9zM356.7,379.1h0.8v1.0h-0.8zM550.1,250.2h1.0v0.7h-1.0zM392.1,333.3h1.2v0.6h-1.2zM391.5,330.0h1.5v0.6h-1.5zM599.9,239.5h1.1v0.5h-1.1zM484.3,268.3h0.9v0.9h-0.9zM432.5,301.7h1.4v0.8h-1.4zM349.7,391.7h1.4v0.6h-1.4zM605.6,238.5h1.5v0.9h-1.5zM400.8,327.4h1.4v0.8h-1.4zM344.4,397.5h1.1v1.1h-1.1zM452.4,283.4h0.8v0.6h-0.8zM569.5,245.5h1.5v0.7h-1.5zM335.5,417.2h1.2v1.2h-1.2zM587.4,243.4h1.3v0.5h-1.3zM427.2,303.4h0.9v1.0h-0.9zM533.4,252.8h1.0v0.5h-1.0zM347.5,398.0h1.2v1.1h-1.2zM429.3,299.3h0.7v0.9h-0.7zM487.1,269.4h0.8v0.9h-0.8zM407.2,320.5h1.3v0.6h-1.3zM586.5,244.8h1.0v1.1h-1.0zM433.3,293.5h0.8v0.6h-0.8zM348.8,390.1h1.1v0.9h-1.1zM433.3,300.9h0.8v0.9h-0.8zM404.4,321.5h0.9v0.8h-0.9zM355.1,389.5h0.9v1.1h-0.9zM568.5,243.8h0.7v1.2h-0.7zM533.9,250.1h1.2v1.0h-1.2zM520.6,255.9h0.8v0.7h-0.8zM413.7,317.9h1.2v0.7h-1.2zM343.3,400.4h1.2v0.7h-1.2zM531.3,249.9h1.3v0.5h-1.3zM471.6,275.6h1.6v0.5h-1.6zM500.2,259.6h1.4v0.7h-1.4zM428.4,297.8h1.5v0.5h-1.5zM413.9,308.2h1.1v0.6h-1.1zM515.1,257.5h1.3v0.6h-1.3zM356.4,384.9h0.9v0.7h-0.9zM598.5,243.1h1.6v1.1h-1.6zM440.1,292.5h1.4v1.1h-1.4zM481.7,266.3h0.9v0.9h-0.9zM531.7,247.8h0.8v1.0h-0.8zM360.3,378.3h1.6v1.0h-1.6zM352.7,385.0h1.4v1.2h-1.4zM517.3,251.4h1.4v1.1h-1.4zM422.0,305.0h1.4v1.0h-1.4zM385.7,337.0h1.6v0.9h-1.6zM348.1,390.2h1.6v1.1h-1.6zM550.6,248.4h0.9v0.6h-0.9zM374.3,356.1h1.1v1.1h-1.1zM506.2,256.9h1.1v1.0h-1.1zM496.7,259.5h1.5v1.1h-1.5zM347.2,401.2h1.3v1.1h-1.3zM470.0,275.7h1.5v1.1h-1.5zM439.8,297.2h0.7v0.6h-0.7zM416.4,307.4h1.2v0.8h-1.2zM370.3,363.3h1.0v1.1h-1.0zM385.6,340.1h0.8v0.7h-0.8zM423.3,302.8h1.3v1.1h-1.3zM498.7,264.4h0.7v1.1h-0.7zM383.5,347.8h1.6v0.8h-1.6zM568.4,246.0h1.2v1.1h-1.2zM441.1,292.6h1.6v0.9h-1.6zM361.3,367.5h1.4v0.6h-1.4zM334.3,428.9h0.9v1.2h-0.9zM540.3,248.9h0.9v0.7h-0.9zM458.0,284.5h1.5v0.9h-1.5zM581.9,243.5h1.5v1.0h-1.5zM480.0,272.9h1.1v1.2h-1.1zM490.9,265.5h1.3v0.8h-1.3zM495.4,262.3h1.5v0.8h-1.5zM598.6,242.9h0.8v1.1h-0.8zM457.1,279.8h1.1v1.0h-1.1zM511.9,253.2h1.4v0.5h-1.4zM355.9,386.0h1.6v1.1h-1.6zM468.4,278.2h1.2v0.5h-1.2zM519.3,255.0h1.3v0.7h-1.3zM384.5,339.6h1.2v0.8h-1.2zM485.0,262.9h1.4v1.0h-1.4zM594.0,242.8h1.3v1.0h-1.3zM360.7,378.7h1.2v1.1h-1.2zM397.8,324.8h0.8v0.9h-0.8zM356.8,376.2h1.4v0.6h-1.4zM342.8,412.2h1.0v0.8h-1.0zM593.5,238.3h0.9v0.7h-0.9zM363.1,365.3h1.0v0.8h-1.0zM381.5,351.3h1.1v0.8h-1.1zM377.8,345.3h0.9v1.1h-0.9zM549.9,247.0h1.3v1.0h-1.3zM358.7,381.5h1.4v0.8h-1.4zM493.4,262.8h1.4v0.7h-1.4zM578.0,243.9h1.2v0.7h-1.2zM378.2,348.9h1.4v0.5h-1.4zM459.3,277.2h1.0v1.2h-1.0zM376.9,355.2h0.8v0.9h-0.8zM495.3,260.4h1.1v1.1h-1.1zM392.0,338.8h1.3v1.2h-1.3zM500.2,259.5h1.4v0.8h-1.4zM516.4,251.4h1.0v0.8h-1.0zM398.4,324.1h0.9v1.1h-0.9zM446.8,287.5h1.3v1.1h-1.3zM399.4,330.5h0.8v0.8h-0.8zM554.9,245.7h1.3v0.9h-1.3zM463.2,278.8h0.9v1.1h-0.9zM549.8,244.3h0.8v1.0h-0.8zM439.8,290.1h1.5v1.1h-1.5zM543.8,245.9h1.3v1.1h-1.3zM505.6,261.7h1.3v0.9h-1.3zM345.1,407.9h1.2v1.1h-1.2zM370.6,363.7h0.9v0.6h-0.9zM598.1,240.5h1.4v0.8h-1.4zM342.8,405.0h1.5v0.7h-1.5zM481.9,272.7h0.8v0.7h-0.8zM427.5,305.9h1.2v1.1h-1.2zM547.1,250.8h0.8v0.7h-0.8zM397.0,327.5h1.0v0.9h-1.0zM535.3,252.0h0.9v1.1h-0.9zM450.4,282.7h0.7v1.0h-0.7zM444.2,294.0h1.1v0.5h-1.1zM511.1,255.6h1.2v0.8h-1.2zM467.4,275.5h0.9v1.1h-0.9zM537.6,245.2h1.6v0.7h-1.6zM340.7,404.3h1.1v0.6h-1.1zM497.6,262.0h1.3v0.8h-1.3zM365.6,370.1h1.1v0.7h-1.1zM516.0,257.6h1.2v0.8h-1.2zM505.3,261.2h0.9v0.7h-0.9zM503.5,258.9h1.6v1.0h-1.6zM578.5,239.3h1.4v1.0h-1.4zM370.5,366.8h0.7v1.1h-0.7zM479.8,267.4h0.9v0.7h-0.9zM482.3,271.1h1.6v0.7h-1.6zM364.7,375.7h1.0v1.1h-1.0zM426.5,299.3h0.8v0.6h-0.8zM530.0,253.9h1.1v1.2h-1.1zM534.4,246.6h1.1v1.1h-1.1zM352.6,395.4h1.2v0.9h-1.2zM379.1,353.1h0.7v1.1h-0.7zM587.6,240.5h1.6v0.8h-1.6zM407.6,316.0h1.4v1.1h-1.4zM338.7,425.9h0.9v0.9h-0.9zM336.5,426.4h1.4v1.1h-1.4zM340.3,415.0h1.5v0.9h-1.5zM396.1,334.8h1.3v1.1h-1.3zM483.5,267.7h0.9v0.7h-0.9zM406.3,315.4h0.8v0.9h-0.8zM368.9,368.1h1.1v0.9h-1.1zM505.2,257.6h1.1v0.5h-1.1zM339.9,410.8h1.1v0.8h-1.1zM507.3,256.6h0.9v1.0h-0.9zM431.7,296.5h0.8v1.1h-0.8zM342.1,408.3h0.9v1.2h-0.9zM412.4,317.0h1.4v1.1h-1.4zM516.8,253.8h0.7v0.6h-0.7zM537.1,245.5h0.7v0.5h-0.7zM582.7,244.5h0.9v1.0h-0.9zM481.8,264.7h1.5v0.7h-1.5zM339.3,424.1h1.4v0.6h-1.4zM505.3,254.8h0.9v1.1h-0.9zM445.7,291.7h0.8v1.1h-0.8zM577.2,239.8h0.7v1.1h-0.7zM544.3,247.3h1.2v0.9h-1.2zM536.7,248.6h0.8v0.5h-0.8zM385.8,340.8h1.1v0.5h-1.1zM335.7,420.5h1.4v1.1h-1.4zM352.5,390.1h1.3v0.6h-1.3zM350.7,393.8h1.6v0.9h-1.6zM348.6,399.2h1.4v1.1h-1.4zM346.4,395.1h1.0v0.7h-1.0zM354.9,381.0h1.2v1.2h-1.2zM333.4,426.1h0.8v0.6h-0.8zM469.9,272.6h1.2v0.8h-1.2zM474.8,272.6h1.3v1.1h-1.3zM535.4,247.8h1.5v1.1h-1.5zM336.8,418.4h1.3v1.1h-1.3zM564.2,244.9h0.9v1.2h-0.9zM505.5,259.1h0.9v0.7h-0.9zM394.8,333.0h0.8v0.8h-0.8zM486.7,262.1h1.5v1.0h-1.5zM605.0,239.2h1.4v0.7h-1.4zM417.6,312.2h0.7v0.7h-0.7zM578.8,239.7h1.0v1.0h-1.0zM567.9,241.7h1.4v0.9h-1.4zM546.4,250.4h1.0v0.9h-1.0zM452.3,285.6h1.6v0.6h-1.6zM486.8,265.9h1.2v1.2h-1.2zM576.6,243.7h1.3v1.2h-1.3zM371.6,364.7h1.0v1.1h-1.0zM382.1,351.7h1.3v1.2h-1.3zM424.8,306.9h1.3v1.0h-1.3zM520.5,251.7h0.9v0.7h-0.9zM501.6,264.0h0.9v0.7h-0.9zM483.2,263.8h1.2v1.0h-1.2zM501.3,259.4h1.0v0.5h-1.0zM339.4,425.5h1.0v0.6h-1.0zM440.6,295.6h1.6v1.0h-1.6zM527.0,253.7h0.9v0.6h-0.9zM416.4,312.7h1.3v0.8h-1.3zM346.1,397.6h1.5v0.7h-1.5zM336.0,418.0h1.4v0.7h-1.4zM537.4,246.4h1.3v0.7h-1.3zM367.7,371.5h1.5v0.6h-1.5zM466.3,274.8h1.3v0.6h-1.3zM350.6,399.0h1.6v0.8h-1.6zM461.0,277.8h0.9v0.5h-0.9zM555.8,249.4h0.8v1.2h-0.8zM511.1,257.8h0.8v1.1h-0.8zM405.6,323.1h1.2v0.6h-1.2zM536.1,251.6h1.0v0.8h-1.0zM369.7,358.3h0.9v0.7h-0.9zM404.6,322.6h1.3v0.8h-1.3zM338.5,411.4h1.3v1.1h-1.3zM340.1,420.2h1.1v0.6h-1.1zM507.2,258.4h0.8v0.6h-0.8zM361.6,374.3h0.9v0.8h-0.9zM346.3,408.2h1.0v0.8h-1.0zM455.3,278.5h0.8v0.7h-0.8zM458.5,278.4h1.5v1.2h-1.5zM347.7,392.4h1.5v0.9h-1.5zM362.6,376.2h1.5v0.6h-1.5zM382.8,350.0h1.5v0.8h-1.5zM342.9,404.1h1.1v0.7h-1.1zM492.0,266.4h1.0v0.6h-1.0zM433.2,292.5h0.9v0.5h-0.9zM444.4,288.0h0.7v0.8h-0.7zM450.7,283.1h0.9v0.8h-0.9zM486.9,265.2h0.8v1.1h-0.8zM515.7,251.6h1.5v0.8h-1.5zM360.3,370.1h0.9v0.9h-0.9zM342.9,401.1h0.9v0.5h-0.9zM355.8,384.5h0.9v1.0h-0.9zM585.6,241.6h1.1v1.0h-1.1zM588.9,245.9h0.9v0.8h-0.9zM588.7,242.0h1.1v1.2h-1.1zM369.1,361.2h1.5v0.6h-1.5zM426.0,297.8h0.9v1.2h-0.9zM415.7,313.0h1.0v1.0h-1.0zM408.8,322.5h0.8v1.1h-0.8zM475.1,276.0h0.9v0.8h-0.9zM507.0,257.6h0.8v0.7h-0.8zM593.0,244.9h0.8v0.6h-0.8zM465.1,276.7h1.5v0.5h-1.5zM362.0,377.2h1.2v0.8h-1.2zM567.8,244.6h1.3v1.1h-1.3zM378.3,344.7h1.5v0.8h-1.5zM577.2,246.4h0.8v0.5h-0.8zM386.8,342.6h1.6v1.1h-1.6zM449.7,286.7h1.5v1.1h-1.5zM443.8,288.3h0.8v0.7h-0.8zM466.1,274.9h1.4v1.1h-1.4zM362.1,366.6h0.8v1.1h-0.8zM362.5,371.6h1.3v0.7h-1.3zM405.7,323.2h1.2v1.0h-1.2zM518.0,258.0h1.3v0.8h-1.3zM536.5,248.0h0.7v0.8h-0.7zM505.8,257.1h1.3v0.6h-1.3zM531.2,247.1h0.9v0.8h-0.9zM365.0,362.4h1.1v1.2h-1.1zM370.7,355.3h1.4v0.8h-1.4zM525.3,251.0h0.8v0.7h-0.8zM382.1,349.2h0.7v0.6h-0.7zM419.0,309.4h0.8v0.9h-0.8zM462.1,274.6h1.0v1.0h-1.0zM362.2,374.0h1.1v0.5h-1.1zM357.9,377.3h1.0v1.2h-1.0zM548.9,244.7h1.3v0.9h-1.3zM595.0,240.3h0.9v1.0h-0.9zM379.4,351.6h1.4v0.9h-1.4zM562.7,241.8h1.2v0.6h-1.2zM453.0,288.3h1.4v0.7h-1.4zM338.2,428.7h0.9v1.0h-0.9zM375.8,360.1h0.9v1.0h-0.9zM333.3,421.4h0.8v1.2h-0.8zM353.7,379.9h1.0v0.9h-1.0zM418.5,310.6h1.1v0.7h-1.1zM349.1,403.4h0.8v0.6h-0.8zM501.8,259.0h0.9v1.1h-0.9zM396.8,326.6h1.1v0.6h-1.1zM457.0,277.6h0.7v0.6h-0.7zM408.1,316.0h1.3v0.7h-1.3zM537.1,246.9h0.8v0.9h-0.8zM506.6,260.8h1.4v1.1h-1.4zM349.4,399.8h1.3v0.9h-1.3zM367.4,370.2h1.2v0.6h-1.2zM374.1,354.1h0.9v0.8h-0.9zM511.3,256.4h0.7v1.0h-0.7zM387.6,342.5h1.3v1.0h-1.3zM572.3,242.5h0.9v0.7h-0.9zM378.2,348.4h0.8v0.7h-0.8zM545.9,245.2h1.3v1.2h-1.3zM388.7,334.5h1.0v1.0h-1.0zM475.4,275.4h0.8v0.5h-0.8zM357.2,380.9h1.5v1.1h-1.5zM366.3,367.3h0.8v0.9h-0.8zM403.3,322.4h1.3v0.9h-1.3zM347.7,393.9h0.8v0.8h-0.8zM377.6,351.6h1.3v0.7h-1.3zM434.9,297.7h1.3v1.0h-1.3zM426.3,303.8h1.5v1.2h-1.5zM348.5,394.8h1.1v0.9h-1.1zM340.9,417.5h1.6v1.1h-1.6zM432.7,301.2h1.3v0.7h-1.3zM521.1,257.0h1.4v0.8h-1.4zM413.5,317.4h0.8v1.2h-0.8zM388.0,344.1h1.4v0.6h-1.4zM346.8,407.4h0.8v0.9h-0.8zM358.4,374.2h0.9v1.0h-0.9zM397.6,329.1h0.8v0.7h-0.8zM348.1,389.8h0.9v1.0h-0.9zM572.9,240.2h1.1v1.2h-1.1zM384.9,341.1h1.1v1.0h-1.1zM351.9,386.7h0.9v1.2h-0.9zM542.3,251.3h1.0v0.7h-1.0zM433.1,299.7h1.6v0.6h-1.6zM391.1,331.2h0.9v1.0h-0.9zM365.1,370.8h1.1v1.1h-1.1zM461.8,275.5h0.7v1.0h-0.7zM571.4,242.6h1.6v0.7h-1.6zM542.9,245.2h0.9v0.8h-0.9zM401.6,325.7h1.0v0.6h-1.0zM575.3,245.2h1.1v0.9h-1.1zM521.0,250.4h0.9v1.1h-0.9zM603.7,239.4h1.4v1.0h-1.4zM375.7,349.8h1.3v0.8h-1.3zM351.9,385.1h1.2v0.7h-1.2zM397.2,325.1h1.5v1.1h-1.5zM352.6,383.2h1.5v1.0h-1.5zM487.1,264.5h0.7v1.1h-0.7zM427.9,300.8h1.0v1.0h-1.0zM560.9,242.6h0.9v0.7h-0.9zM350.4,397.6h1.0v0.5h-1.0zM370.2,357.3h0.8v0.5h-0.8zM364.7,365.9h1.1v0.8h-1.1zM590.7,239.7h1.0v0.9h-1.0zM430.4,295.5h1.5v1.0h-1.5zM562.8,246.0h1.2v0.6h-1.2zM546.9,246.5h1.2v0.8h-1.2zM565.0,244.9h1.3v0.6h-1.3zM404.2,323.2h1.6v1.0h-1.6zM577.0,245.8h0.7v0.9h-0.7zM509.2,257.9h1.1v0.6h-1.1zM544.0,247.6h1.4v0.7h-1.4zM518.8,256.5h1.4v0.7h-1.4zM604.3,238.8h1.1v0.8h-1.1zM582.1,240.9h0.9v0.7h-0.9zM514.4,257.0h0.9v0.9h-0.9zM492.9,263.5h0.8v1.2h-0.8zM457.0,277.0h1.4v0.6h-1.4zM454.4,279.3h1.4v1.1h-1.4zM580.3,243.7h0.9v0.5h-0.9zM571.3,243.4h1.5v1.2h-1.5zM583.2,242.3h1.2v0.6h-1.2zM537.9,248.1h1.1v0.9h-1.1zM384.1,346.2h1.1v0.9h-1.1zM347.6,399.3h0.7v0.7h-0.7zM518.9,252.4h0.9v0.7h-0.9zM361.7,373.6h1.2v1.1h-1.2zM467.6,278.2h1.3v1.0h-1.3zM506.2,256.7h0.9v1.1h-0.9zM338.3,410.6h1.5v0.8h-1.5zM346.8,407.8h1.4v1.0h-1.4zM431.0,302.4h1.3v1.2h-1.3zM525.9,253.5h0.9v0.6h-0.9zM417.4,313.2h1.3v0.7h-1.3zM372.4,362.6h0.8v0.6h-0.8zM442.9,292.2h0.9v0.8h-0.9zM597.4,242.3h1.1v1.2h-1.1zM366.3,367.2h1.2v0.6h-1.2zM346.7,406.4h1.3v1.2h-1.3zM401.7,325.2h1.1v0.7h-1.1zM409.9,314.4h0.8v1.1h-0.8zM334.7,426.8h1.5v1.0h-1.5zM480.9,270.1h1.5v0.8h-1.5zM388.1,339.4h1.2v1.0h-1.2zM589.0,240.3h0.8v0.8h-0.8zM533.3,247.4h1.2v1.0h-1.2zM587.6,243.4h1.2v0.8h-1.2zM353.3,393.2h1.5v1.1h-1.5zM396.3,335.0h1.1v0.8h-1.1zM570.2,244.7h1.0v0.9h-1.0zM482.0,264.6h1.1v0.7h-1.1zM474.3,273.1h1.4v0.7h-1.4zM410.4,317.3h1.0v1.1h-1.0zM382.3,344.9h1.0v1.1h-1.0zM500.9,263.2h0.7v0.6h-0.7zM539.7,252.2h0.8v0.7h-0.8zM382.6,350.5h1.4v1.0h-1.4zM588.1,238.9h1.2v1.1h-1.2zM580.8,245.8h1.1v0.6h-1.1zM557.0,243.4h1.0v0.6h-1.0zM520.3,250.7h1.2v1.2h-1.2zM345.1,412.3h0.8v0.5h-0.8zM479.8,267.6h0.8v0.6h-0.8zM475.0,274.5h1.3v1.2h-1.3zM599.6,242.9h1.1v0.8h-1.1zM374.7,358.2h1.6v1.2h-1.6zM360.4,373.0h0.9v0.6h-0.9zM516.0,256.3h0.8v0.9h-0.8zM337.4,417.6h1.1v1.1h-1.1zM426.6,301.5h1.5v0.9h-1.5zM412.8,315.5h1.5v1.1h-1.5zM457.2,277.6h0.8v0.6h-0.8zM500.5,261.5h0.7v1.1h-0.7zM443.9,287.1h0.7v1.1h-0.7zM493.4,264.0h1.2v1.0h-1.2zM592.9,242.7h1.6v1.2h-1.6zM391.3,333.7h1.0v0.7h-1.0zM533.6,246.9h1.4v1.1h-1.4zM497.9,257.4h1.0v1.0h-1.0zM475.2,273.7h0.8v1.1h-0.8zM382.5,345.3h1.5v0.6h-1.5zM521.4,250.0h0.8v1.0h-0.8zM574.2,242.6h1.2v0.8h-1.2zM343.5,399.3h1.4v0.6h-1.4zM352.3,393.3h1.5v0.8h-1.5zM376.9,349.3h1.4v1.0h-1.4zM440.8,295.7h1.3v0.7h-1.3zM382.1,343.8h1.0v1.1h-1.0zM606.3,238.4h1.1v0.9h-1.1zM522.2,250.7h1.1v1.1h-1.1zM589.4,242.9h1.1v0.6h-1.1zM354.5,381.9h1.3v0.5h-1.3zM450.9,280.8h1.4v0.6h-1.4zM406.1,318.4h0.9v1.1h-0.9zM436.5,299.3h0.8v1.1h-0.8zM336.0,416.6h1.1v0.8h-1.1zM512.4,254.5h1.0v1.2h-1.0zM356.8,386.7h1.4v0.6h-1.4zM442.2,293.9h1.0v0.6h-1.0zM431.3,294.5h1.4v0.7h-1.4zM368.2,358.5h1.5v0.9h-1.5zM526.2,248.3h1.3v0.9h-1.3zM423.0,301.6h0.8v1.1h-0.8zM496.4,259.5h1.4v0.7h-1.4zM544.9,247.9h1.6v1.1h-1.6zM498.9,264.0h1.2v0.8h-1.2zM357.0,386.6h1.1v0.8h-1.1zM405.9,322.7h1.2v1.0h-1.2zM358.7,377.3h1.5v0.8h-1.5zM600.5,238.2h0.8v0.9h-0.8zM406.6,314.5h1.2v0.7h-1.2zM370.5,367.2h0.8v0.7h-0.8zM459.0,279.1h1.6v1.0h-1.6zM589.2,243.2h1.3v0.9h-1.3zM492.3,260.7h1.0v0.9h-1.0zM596.1,243.4h0.9v1.2h-0.9zM338.9,427.1h1.2v0.6h-1.2zM351.5,391.1h1.5v1.0h-1.5zM581.0,241.1h1.6v1.0h-1.6zM333.1,428.0h0.7v0.8h-0.7zM388.5,332.7h1.2v0.5h-1.2zM572.7,244.0h1.2v1.1h-1.2zM370.2,367.8h0.9v1.1h-0.9zM583.2,245.5h0.9v1.1h-0.9zM393.6,332.4h1.6v0.8h-1.6zM342.1,406.5h1.4v1.2h-1.4zM519.6,257.2h0.9v0.6h-0.9zM491.1,265.4h1.6v1.2h-1.6zM476.7,266.6h1.3v0.6h-1.3zM455.1,280.6h1.0v1.1h-1.0zM357.2,384.9h0.8v0.6h-0.8zM537.1,248.6h0.8v0.9h-0.8zM458.5,280.0h1.1v0.9h-1.1zM345.6,411.7h1.1v0.7h-1.1zM373.6,353.3h1.4v0.7h-1.4zM436.1,299.0h1.0v0.7h-1.0zM369.4,358.8h1.3v1.1h-1.3zM441.9,291.6h1.5v0.9h-1.5zM346.1,407.5h0.8v0.7h-0.8zM487.8,269.2h1.1v0.7h-1.1zM584.6,242.2h0.9v0.6h-0.9zM395.0,333.3h1.5v1.0h-1.5zM360.5,376.8h0.7v0.6h-0.7zM485.1,263.9h0.8v0.9h-0.8zM444.7,293.4h1.0v0.6h-1.0zM508.2,255.7h1.2v0.6h-1.2zM421.1,305.0h1.3v0.6h-1.3zM332.0,426.9h0.9v0.8h-0.9zM348.7,401.7h1.3v1.2h-1.3zM381.4,348.5h1.3v0.7h-1.3zM499.7,261.6h1.1v0.6h-1.1zM455.2,286.5h1.6v1.1h-1.6zM443.2,294.0h1.1v0.6h-1.1zM438.7,291.7h1.4v0.7h-1.4zM541.3,244.9h1.1v0.6h-1.1zM353.2,388.4h1.3v1.0h-1.3zM598.6,241.2h0.7v1.0h-0.7zM348.6,391.7h1.0v0.5h-1.0zM510.7,256.2h1.0v1.0h-1.0zM507.6,259.0h0.9v1.2h-0.9zM335.4,428.1h0.8v1.0h-0.8zM481.4,265.5h0.8v1.1h-0.8zM349.6,391.3h1.0v1.0h-1.0zM343.5,416.8h1.0v1.1h-1.0zM389.6,331.2h1.5v1.1h-1.5zM466.0,273.2h1.6v1.0h-1.6zM458.7,276.5h0.9v0.9h-0.9zM397.1,329.0h1.0v0.9h-1.0zM370.5,359.6h0.9v0.9h-0.9zM418.0,309.2h1.3v0.6h-1.3zM382.4,344.9h1.4v1.0h-1.4zM444.6,286.6h0.9v1.1h-0.9zM406.5,319.5h1.0v0.8h-1.0zM543.0,246.3h1.1v1.0h-1.1zM428.5,303.6h1.0v0.7h-1.0zM521.9,254.5h1.4v0.6h-1.4zM532.2,252.6h1.3v1.0h-1.3zM500.7,259.3h0.9v0.5h-0.9zM339.6,418.9h1.6v0.9h-1.6zM595.1,240.6h1.4v0.7h-1.4zM351.1,394.7h1.4v1.0h-1.4zM405.1,321.0h0.9v0.8h-0.9zM569.9,241.9h1.5v1.1h-1.5zM419.0,309.1h1.0v1.2h-1.0zM360.6,380.3h1.0v1.1h-1.0zM393.6,328.5h1.5v1.1h-1.5zM365.5,369.0h1.4v0.8h-1.4zM573.0,246.3h1.1v0.8h-1.1zM377.5,350.3h0.7v0.8h-0.7zM336.7,425.8h1.0v1.0h-1.0zM497.0,263.3h1.3v0.6h-1.3zM496.2,266.2h1.2v0.7h-1.2zM556.5,247.8h1.5v0.7h-1.5zM462.8,277.4h1.0v0.5h-1.0zM485.6,268.2h1.2v0.9h-1.2zM371.5,364.5h1.0v0.8h-1.0zM572.7,244.4h0.8v1.2h-0.8zM556.9,247.4h0.9v0.9h-0.9zM340.2,417.0h1.4v1.1h-1.4zM529.3,253.1h1.1v1.2h-1.1zM410.2,320.8h0.9v0.9h-0.9zM551.2,244.2h1.2v0.8h-1.2zM347.2,394.3h0.9v1.0h-0.9zM604.5,242.3h0.8v0.8h-0.8zM336.8,429.2h0.8v0.6h-0.8zM422.4,306.9h1.2v0.7h-1.2zM444.6,287.4h1.6v0.6h-1.6zM438.9,293.1h1.0v1.1h-1.0zM564.2,246.6h1.0v0.7h-1.0zM459.2,279.2h1.0v0.6h-1.0zM402.6,318.4h0.8v1.0h-0.8zM394.5,331.2h1.0v1.1h-1.0zM418.4,310.5h1.6v0.8h-1.6zM359.9,378.1h1.3v1.0h-1.3zM414.8,312.5h0.9v1.1h-0.9zM548.1,247.3h1.0v1.0h-1.0zM373.5,362.9h1.6v1.0h-1.6zM439.1,291.3h1.1v0.6h-1.1zM486.4,269.1h1.3v0.7h-1.3zM353.6,385.0h1.3v0.6h-1.3zM391.3,334.9h1.2v0.6h-1.2zM476.3,271.2h0.8v0.7h-0.8zM453.7,281.8h1.3v1.0h-1.3zM370.6,359.7h1.1v1.1h-1.1zM520.9,253.1h1.0v0.8h-1.0zM543.9,244.1h1.3v0.6h-1.3zM337.9,417.9h1.5v1.2h-1.5zM379.4,346.2h1.5v0.6h-1.5zM445.4,285.7h0.7v1.1h-0.7zM547.5,247.5h1.3v0.9h-1.3zM364.8,364.0h1.5v0.7h-1.5zM399.5,331.7h0.8v0.6h-0.8zM351.1,389.9h0.8v0.7h-0.8zM578.9,244.5h1.5v1.1h-1.5zM421.4,301.5h1.4v0.7h-1.4zM540.0,245.2h1.4v0.7h-1.4zM580.8,245.8h1.2v0.9h-1.2zM353.5,381.9h1.3v0.8h-1.3zM426.8,299.3h0.9v1.2h-0.9zM518.7,256.0h1.4v0.7h-1.4zM410.9,313.4h0.9v0.7h-0.9zM402.3,318.7h1.2v0.9h-1.2zM522.2,257.1h1.4v1.1h-1.4zM369.4,364.3h1.0v1.0h-1.0zM413.8,311.3h1.2v0.6h-1.2zM430.7,295.0h1.2v1.1h-1.2zM511.5,259.1h1.0v1.1h-1.0zM385.1,347.1h1.3v0.8h-1.3zM464.8,278.1h0.9v0.8h-0.9zM537.4,253.2h0.9v1.1h-0.9zM471.3,273.1h1.3v0.6h-1.3zM384.6,339.3h1.5v1.1h-1.5zM541.9,246.8h1.1v1.0h-1.1zM361.4,367.7h0.8v0.8h-0.8zM356.8,381.6h0.9v1.1h-0.9zM357.6,382.1h0.9v0.9h-0.9zM435.0,298.9h1.2v0.8h-1.2zM549.7,246.6h0.7v1.2h-0.7zM341.6,417.4h1.4v0.9h-1.4zM369.8,361.2h1.4v0.7h-1.4zM370.8,357.3h1.2v1.0h-1.2zM435.5,296.8h0.8v1.0h-0.8zM356.4,379.6h1.2v1.0h-1.2zM551.0,249.6h1.5v0.5h-1.5zM347.8,402.7h0.9v0.6h-0.9zM377.0,352.1h1.0v0.8h-1.0zM533.3,251.2h1.4v0.6h-1.4zM337.5,427.2h1.0v0.6h-1.0zM529.9,249.5h1.6v0.6h-1.6zM523.3,256.7h1.1v1.2h-1.1zM391.7,335.9h0.8v1.2h-0.8zM423.9,304.3h1.1v1.0h-1.1zM432.3,294.7h0.9v0.8h-0.9zM413.0,309.5h1.3v0.9h-1.3zM463.3,278.2h0.9v0.9h-0.9zM342.8,401.9h1.0v1.1h-1.0zM332.6,423.4h1.3v0.9h-1.3zM430.5,295.9h0.8v0.7h-0.8zM512.1,254.6h0.9v0.9h-0.9zM488.9,263.9h0.7v0.8h-0.7zM470.7,275.4h1.0v0.6h-1.0zM384.1,341.2h1.4v0.7h-1.4zM539.7,248.3h0.8v1.0h-0.8zM584.7,245.7h0.7v1.0h-0.7zM363.4,373.0h1.1v0.9h-1.1zM352.8,390.2h1.2v0.7h-1.2zM406.1,314.9h1.1v0.7h-1.1zM390.6,330.4h1.3v1.1h-1.3zM522.0,254.1h1.0v0.6h-1.0zM428.4,305.3h1.5v0.6h-1.5zM524.4,253.1h0.9v0.6h-0.9zM419.7,307.6h1.5v1.1h-1.5zM459.9,282.2h1.1v0.5h-1.1zM577.3,243.3h1.0v0.9h-1.0zM341.4,407.9h1.5v0.6h-1.5zM509.0,259.1h0.7v0.8h-0.7zM434.8,299.7h0.7v0.6h-0.7zM347.6,403.6h0.8v0.6h-0.8zM354.6,385.3h1.4v0.8h-1.4zM376.5,355.9h1.5v0.5h-1.5zM346.5,396.7h1.6v0.8h-1.6zM558.8,244.3h0.8v0.5h-0.8zM466.4,274.5h1.3v0.7h-1.3zM363.9,370.4h1.1v0.7h-1.1zM387.4,338.4h0.9v0.9h-0.9zM538.1,252.4h1.1v0.7h-1.1zM445.0,292.6h1.2v1.0h-1.2zM416.9,311.5h1.5v0.7h-1.5zM568.7,240.0h1.6v1.2h-1.6zM542.3,250.1h1.3v0.6h-1.3zM484.6,262.9h1.4v0.9h-1.4zM559.4,248.3h0.9v0.7h-0.9zM364.6,367.7h1.1v1.0h-1.1zM491.6,267.5h0.8v0.8h-0.8zM498.6,260.0h0.7v0.6h-0.7zM408.2,313.1h1.1v0.8h-1.1zM516.3,253.4h1.3v0.8h-1.3zM445.0,288.4h0.9v1.2h-0.9zM528.3,247.7h1.6v0.8h-1.6zM372.8,353.2h1.4v1.0h-1.4zM547.9,243.5h1.5v0.7h-1.5zM432.3,295.1h1.0v0.8h-1.0zM551.3,244.0h1.5v1.0h-1.5zM360.3,381.0h1.2v0.6h-1.2zM350.1,396.6h0.8v1.0h-0.8zM553.9,248.1h1.0v1.1h-1.0zM381.9,348.3h1.1v0.5h-1.1zM408.1,318.7h0.7v1.1h-0.7zM335.4,429.3h1.6v0.7h-1.6zM339.3,421.8h0.8v1.0h-0.8zM441.6,290.5h0.9v0.7h-0.9zM403.2,317.6h1.6v1.1h-1.6zM554.1,248.8h0.7v1.0h-0.7zM500.9,257.8h1.2v1.1h-1.2zM453.9,286.5h0.9v0.8h-0.9zM506.8,260.7h1.2v1.0h-1.2zM470.3,273.0h1.5v1.1h-1.5zM393.9,331.4h1.5v0.8h-1.5zM398.3,332.1h1.3v1.2h-1.3zM490.5,263.3h1.5v1.0h-1.5zM430.1,300.1h1.4v0.7h-1.4zM478.5,273.4h1.4v0.7h-1.4zM569.0,242.3h0.8v0.6h-0.8zM396.3,329.7h1.6v1.2h-1.6zM534.7,250.3h1.3v0.6h-1.3zM358.5,372.0h0.8v0.8h-0.8zM437.4,298.8h1.1v1.2h-1.1zM554.3,246.5h1.4v0.9h-1.4zM390.8,338.7h1.1v0.8h-1.1zM441.7,289.9h1.0v0.9h-1.0zM363.8,363.5h1.0v0.5h-1.0zM344.7,412.3h1.1v1.1h-1.1zM595.0,240.3h1.5v0.9h-1.5zM335.4,424.8h1.0v0.7h-1.0zM342.4,407.4h1.2v0.8h-1.2zM414.2,312.6h0.8v1.0h-0.8zM469.3,272.0h0.8v0.9h-0.8zM602.2,238.9h1.4v0.5h-1.4zM490.6,261.3h0.9v1.1h-0.9zM569.8,241.1h0.9v0.9h-0.9zM387.9,340.3h1.4v0.9h-1.4zM454.2,284.7h1.5v0.9h-1.5zM458.9,276.7h1.6v0.5h-1.6zM456.4,282.2h1.4v1.2h-1.4zM433.8,295.6h1.3v0.9h-1.3zM588.2,240.5h0.7v0.7h-0.7zM339.7,408.4h1.4v0.5h-1.4zM536.8,248.2h0.9v0.8h-0.9zM505.5,260.9h1.2v0.9h-1.2zM467.5,277.1h1.6v1.0h-1.6zM373.5,350.8h1.2v0.8h-1.2zM538.4,250.2h0.9v0.9h-0.9zM584.1,240.2h0.7v0.7h-0.7zM584.5,242.4h0.8v1.1h-0.8zM455.3,283.4h1.5v0.5h-1.5zM359.3,380.3h0.8v0.7h-0.8zM464.1,275.6h0.8v1.1h-0.8zM355.8,383.4h1.4v1.1h-1.4zM585.8,244.5h1.4v0.7h-1.4zM560.9,248.7h1.4v0.6h-1.4zM527.3,249.6h1.3v1.1h-1.3zM392.0,328.8h1.5v1.1h-1.5zM498.3,262.9h1.3v1.1h-1.3zM382.1,344.8h0.9v0.9h-0.9zM558.0,248.1h1.5v0.7h-1.5zM493.8,261.5h0.8v1.0h-0.8zM388.0,335.5h0.8v0.7h-0.8zM429.9,297.0h1.4v0.6h-1.4zM402.1,328.1h1.5v0.6h-1.5zM521.9,256.8h0.8v1.0h-0.8zM378.8,355.1h1.3v1.1h-1.3zM426.8,303.0h0.7v0.7h-0.7zM533.6,252.2h1.3v1.0h-1.3zM502.9,259.3h0.8v0.8h-0.8zM385.3,344.4h1.4v0.6h-1.4zM385.1,344.2h1.5v0.9h-1.5zM407.8,318.5h1.5v1.2h-1.5zM460.9,279.7h1.5v0.7h-1.5zM350.7,396.7h1.2v1.0h-1.2zM423.4,308.3h1.6v0.8h-1.6zM550.8,247.4h1.5v0.8h-1.5zM483.8,270.7h1.4v1.1h-1.4zM389.0,335.7h1.2v0.7h-1.2zM431.9,298.8h1.5v1.1h-1.5zM432.5,293.7h1.6v0.6h-1.6zM482.4,264.5h1.5v0.8h-1.5zM334.1,419.5h1.5v1.1h-1.5zM547.1,248.1h0.9v1.0h-0.9zM416.1,311.2h0.9v1.1h-0.9zM345.2,399.5h1.6v0.7h-1.6zM417.5,310.9h1.2v1.1h-1.2zM480.0,265.4h1.0v0.6h-1.0zM448.1,291.0h1.2v0.8h-1.2zM414.2,307.6h1.0v0.8h-1.0zM585.7,244.8h1.2v0.9h-1.2zM377.4,352.5h1.0v0.8h-1.0zM599.7,242.2h1.2v0.6h-1.2zM361.7,380.4h1.0v1.0h-1.0zM371.6,354.2h1.4v0.8h-1.4zM450.3,285.2h0.7v0.5h-0.7zM499.2,259.6h1.0v1.1h-1.0zM386.7,336.4h0.8v0.9h-0.8zM370.5,358.7h0.7v0.8h-0.7zM516.6,258.7h1.3v0.7h-1.3zM373.6,357.3h0.9v0.6h-0.9zM425.9,299.6h1.3v0.7h-1.3zM468.6,272.3h1.3v0.8h-1.3zM364.3,368.9h1.6v1.0h-1.6zM483.2,267.5h0.8v0.7h-0.8zM552.3,248.3h0.7v0.8h-0.7zM530.3,248.0h1.3v0.7h-1.3zM505.4,260.9h1.0v1.0h-1.0zM523.9,253.9h1.2v1.1h-1.2zM404.8,315.9h1.6v0.5h-1.6zM335.5,418.2h1.2v0.8h-1.2zM390.1,333.2h0.9v1.0h-0.9zM521.7,252.9h1.1v0.5h-1.1zM368.5,360.0h1.1v0.5h-1.1zM492.7,265.7h1.4v0.9h-1.4zM514.3,256.1h1.3v0.6h-1.3zM470.2,273.8h1.4v0.6h-1.4zM399.5,328.5h0.8v0.7h-0.8zM463.1,275.9h0.9v1.0h-0.9zM521.2,256.6h0.8v0.6h-0.8zM446.2,290.5h0.9v1.1h-0.9zM381.7,340.8h1.4v1.0h-1.4zM377.6,350.5h1.6v1.2h-1.6zM398.0,333.4h1.0v0.6h-1.0zM571.2,244.0h0.7v1.1h-0.7zM337.5,425.2h1.5v0.7h-1.5zM353.3,392.7h1.0v0.6h-1.0zM378.9,353.7h1.2v0.8h-1.2zM449.2,288.1h1.4v1.0h-1.4zM578.2,244.0h1.4v0.9h-1.4zM395.3,331.0h0.8v1.1h-0.8zM347.6,396.9h1.5v1.1h-1.5zM504.7,262.8h0.9v0.9h-0.9zM398.4,323.7h1.1v1.0h-1.1zM480.4,271.7h1.1v1.2h-1.1zM507.7,260.5h0.7v0.7h-0.7zM359.4,383.2h1.2v0.6h-1.2zM345.9,396.9h1.3v1.1h-1.3zM372.4,363.1h1.4v0.8h-1.4zM394.8,326.4h1.1v1.2h-1.1zM595.1,243.1h1.5v0.6h-1.5zM586.2,241.9h0.8v1.1h-0.8zM519.1,251.9h1.2v0.6h-1.2zM345.8,394.4h1.4v1.0h-1.4zM498.7,262.7h1.1v1.0h-1.1zM583.7,246.0h1.0v1.1h-1.0zM541.3,248.6h1.0v0.9h-1.0zM439.8,297.1h0.8v1.1h-0.8zM418.8,306.8h1.6v1.2h-1.6zM342.6,400.8h1.3v1.0h-1.3zM335.7,423.6h1.5v0.8h-1.5zM541.9,247.5h0.9v0.5h-0.9zM378.8,344.4h0.7v0.6h-0.7zM515.3,251.3h0.9v0.6h-0.9zM490.5,261.2h1.2v0.6h-1.2zM588.1,242.8h0.7v0.8h-0.7zM606.1,245.3h0.8v1.2h-0.8zM513.0,253.3h0.7v1.0h-0.7zM438.2,293.7h0.8v0.9h-0.8zM351.8,385.9h1.5v0.8h-1.5zM376.0,356.3h1.1v1.0h-1.1zM568.2,243.3h1.2v0.9h-1.2zM366.5,359.9h0.7v0.7h-0.7zM353.8,390.0h1.1v0.5h-1.1zM434.3,292.4h1.5v1.0h-1.5zM522.3,251.3h1.0v1.0h-1.0zM458.2,283.4h1.2v1.0h-1.2zM400.5,329.0h1.4v1.1h-1.4zM348.3,389.3h0.9v0.6h-0.9zM517.9,252.7h1.3v1.0h-1.3zM459.3,280.0h1.5v1.0h-1.5zM466.9,274.5h1.1v1.0h-1.1zM352.9,387.5h1.1v0.8h-1.1zM459.2,280.8h1.0v0.8h-1.0zM406.0,320.8h1.6v0.6h-1.6zM511.6,260.5h1.1v0.8h-1.1zM403.9,321.0h0.9v0.5h-0.9zM585.3,239.4h1.0v0.8h-1.0zM343.5,410.6h1.5v1.1h-1.5zM379.5,352.1h1.3v1.1h-1.3zM409.9,316.7h0.9v1.1h-0.9zM556.6,242.6h0.8v0.9h-0.8zM507.0,254.1h1.1v0.6h-1.1zM514.9,259.1h0.8v1.1h-0.8zM432.4,296.3h1.5v1.2h-1.5zM347.7,396.5h1.2v0.8h-1.2zM582.0,244.5h1.4v0.6h-1.4zM399.8,329.0h1.2v0.7h-1.2zM541.7,248.7h0.9v1.0h-0.9zM587.5,243.5h1.6v0.7h-1.6zM349.6,393.0h1.1v0.9h-1.1zM397.6,326.8h0.7v0.6h-0.7zM360.6,374.7h1.0v0.9h-1.0zM443.5,286.3h0.9v0.9h-0.9zM531.4,252.5h0.8v0.7h-0.8zM574.7,243.6h0.8v0.6h-0.8zM371.6,364.2h1.0v0.8h-1.0zM412.6,311.2h1.1v0.8h-1.1zM572.6,241.2h1.1v1.1h-1.1zM599.2,243.8h1.2v1.0h-1.2zM382.3,346.8h0.8v1.1h-0.8zM503.2,260.7h1.1v0.9h-1.1zM364.0,374.5h1.0v1.0h-1.0zM334.4,428.2h1.3v0.8h-1.3zM381.7,351.5h0.9v1.1h-0.9zM394.2,331.3h0.9v0.7h-0.9zM400.5,327.8h1.4v1.1h-1.4zM566.3,242.5h1.3v0.6h-1.3zM362.7,378.9h0.9v0.9h-0.9zM465.3,273.9h1.1v0.7h-1.1zM520.0,249.9h1.0v0.5h-1.0zM375.3,348.2h1.5v0.6h-1.5zM400.9,323.3h1.5v0.7h-1.5zM368.9,368.6h1.4v1.2h-1.4zM496.8,260.7h1.0v0.7h-1.0zM601.6,245.0h0.7v0.9h-0.7zM364.9,371.0h1.1v1.2h-1.1zM361.4,378.0h1.3v1.0h-1.3zM362.5,372.4h1.5v0.6h-1.5zM377.1,356.0h1.2v0.8h-1.2zM512.1,255.9h1.5v0.8h-1.5zM548.3,250.5h0.7v0.7h-0.7zM473.0,275.9h1.4v0.6h-1.4zM554.9,247.3h1.3v0.6h-1.3zM534.6,248.4h1.1v0.6h-1.1zM391.7,332.7h0.8v0.6h-0.8zM353.7,388.8h1.0v0.9h-1.0zM413.7,312.4h1.4v0.6h-1.4zM583.6,243.7h1.5v1.1h-1.5zM450.2,283.2h1.4v0.9h-1.4zM380.4,352.5h0.8v1.1h-0.8zM415.9,312.9h1.2v0.6h-1.2zM535.1,248.1h1.4v1.1h-1.4zM357.5,383.5h1.4v1.0h-1.4zM399.2,328.1h0.8v1.1h-0.8zM541.2,248.7h1.0v0.7h-1.0zM518.4,254.2h1.5v0.7h-1.5zM413.0,311.6h1.5v1.0h-1.5zM403.0,322.3h0.9v1.1h-0.9zM387.6,335.7h0.8v0.6h-0.8zM336.2,414.8h1.4v0.9h-1.4zM452.2,283.9h1.1v0.9h-1.1zM579.0,245.9h0.8v0.6h-0.8zM483.4,266.2h1.4v1.0h-1.4zM338.2,410.8h0.7v0.7h-0.7zM355.7,379.4h1.2v1.0h-1.2zM450.3,288.8h1.5v1.0h-1.5zM435.1,296.8h1.0v1.2h-1.0zM496.0,259.9h1.0v1.0h-1.0zM536.4,249.6h1.0v1.1h-1.0zM425.8,301.0h1.2v1.1h-1.2zM592.9,241.7h0.7v1.1h-0.7zM436.7,292.6h1.5v0.6h-1.5zM508.3,259.0h1.4v0.8h-1.4zM484.9,262.8h0.7v0.6h-0.7zM463.3,281.7h1.0v0.7h-1.0zM345.5,403.9h1.5v1.1h-1.5zM424.7,303.2h1.0v0.9h-1.0zM598.3,243.0h1.6v1.0h-1.6zM342.4,403.5h0.8v0.7h-0.8zM420.9,310.6h1.6v1.1h-1.6zM368.0,358.1h0.9v0.5h-0.9zM343.5,411.4h1.2v0.7h-1.2zM458.3,279.2h1.2v0.7h-1.2zM499.0,259.1h1.3v0.8h-1.3zM385.1,342.5h0.7v0.8h-0.7zM363.1,370.1h1.5v1.1h-1.5zM542.0,245.4h1.1v0.6h-1.1zM516.3,256.9h1.6v0.6h-1.6zM403.7,327.6h1.0v0.9h-1.0zM552.7,249.2h1.0v1.1h-1.0zM390.4,338.1h0.9v1.2h-0.9zM545.7,246.7h0.8v0.9h-0.8zM601.3,240.0h1.5v0.6h-1.5zM606.5,242.8h1.2v1.2h-1.2zM339.5,421.4h1.6v0.7h-1.6zM402.5,322.7h1.2v1.2h-1.2zM563.2,240.9h0.9v1.1h-0.9zM419.8,312.7h1.5v0.7h-1.5zM465.8,277.7h0.9v1.0h-0.9zM346.7,397.8h1.5v0.6h-1.5zM398.7,325.0h0.8v0.6h-0.8zM536.0,245.6h1.1v1.1h-1.1zM580.7,238.9h1.2v0.7h-1.2zM600.4,241.7h1.4v1.0h-1.4zM413.6,309.5h1.2v1.1h-1.2zM557.7,247.6h0.7v0.9h-0.7zM355.9,382.2h1.5v0.8h-1.5zM417.7,312.8h1.2v0.8h-1.2zM350.8,400.9h1.3v0.6h-1.3zM540.0,250.6h1.5v1.1h-1.5zM337.5,428.3h1.4v0.9h-1.4zM337.8,423.4h1.1v0.7h-1.1zM600.1,241.1h0.9v0.6h-0.9zM348.5,393.7h0.9v0.8h-0.9zM391.1,329.6h1.0v0.8h-1.0zM415.3,315.0h1.3v0.7h-1.3zM361.5,369.8h0.8v0.9h-0.8zM578.1,243.2h0.8v1.0h-0.8zM404.4,319.7h0.8v0.9h-0.8zM431.7,295.9h1.1v1.0h-1.1zM418.7,307.6h0.9v0.8h-0.9zM570.5,243.2h1.6v0.9h-1.6zM372.2,360.7h1.3v1.0h-1.3zM500.7,262.5h1.6v0.8h-1.6zM420.7,302.6h1.3v1.1h-1.3zM400.7,328.5h1.6v0.5h-1.6zM434.9,297.9h1.4v0.9h-1.4zM492.0,260.3h0.7v0.5h-0.7zM423.8,309.2h0.7v0.9h-0.7zM366.1,365.2h1.5v0.8h-1.5zM399.6,321.2h1.3v0.9h-1.3zM530.6,252.8h0.7v0.7h-0.7zM565.7,245.5h1.2v0.5h-1.2zM474.7,273.6h1.4v0.6h-1.4zM409.0,314.2h1.2v0.8h-1.2zM603.6,242.3h1.5v1.1h-1.5zM502.6,257.7h0.8v0.5h-0.8zM493.4,260.5h1.3v0.7h-1.3zM579.2,244.5h1.2v0.5h-1.2zM400.8,326.9h0.8v1.2h-0.8zM541.4,245.1h0.7v0.8h-0.7zM512.8,259.3h1.4v1.1h-1.4zM350.0,389.2h0.7v0.6h-0.7zM546.5,244.5h1.2v0.7h-1.2zM349.5,389.1h1.0v0.5h-1.0zM414.5,307.3h1.4v1.1h-1.4zM602.4,241.2h1.4v1.1h-1.4zM342.5,400.9h1.4v0.7h-1.4zM399.0,328.8h1.6v0.5h-1.6zM353.7,388.3h1.6v0.8h-1.6zM445.8,286.6h1.4v0.7h-1.4zM518.3,255.1h1.3v1.1h-1.3zM553.9,247.4h1.4v0.9h-1.4zM461.1,279.9h0.8v0.6h-0.8zM353.7,390.2h0.7v1.0h-0.7zM475.1,269.6h0.9v1.0h-0.9zM475.9,268.4h0.9v0.9h-0.9zM381.7,347.5h0.8v1.1h-0.8zM583.2,241.4h0.9v0.7h-0.9zM342.2,409.8h1.0v0.9h-1.0zM575.1,243.2h1.2v0.9h-1.2zM531.8,249.9h1.0v0.5h-1.0zM533.5,246.3h0.8v0.6h-0.8zM490.3,267.0h0.8v0.5h-0.8zM335.3,427.1h0.9v0.8h-0.9zM336.9,429.1h0.9v0.7h-0.9zM417.7,311.3h1.0v0.7h-1.0zM550.5,250.3h1.4v0.8h-1.4zM376.4,359.2h1.5v0.8h-1.5zM544.3,250.0h1.5v0.6h-1.5zM459.0,280.3h0.8v0.7h-0.8zM494.2,262.0h1.3v0.9h-1.3zM344.6,407.1h0.7v1.1h-0.7zM573.2,240.4h0.8v1.0h-0.8zM401.1,328.5h0.9v1.1h-0.9zM547.8,244.5h1.0v1.2h-1.0zM463.9,279.7h1.3v0.7h-1.3zM349.4,397.2h1.4v0.6h-1.4zM385.2,346.3h1.3v0.9h-1.3zM555.5,245.4h1.4v0.6h-1.4zM360.4,375.4h0.9v0.6h-0.9zM402.6,328.0h1.5v1.0h-1.5zM373.0,362.8h1.2v0.9h-1.2zM350.9,400.4h1.2v0.9h-1.2zM528.5,254.8h0.9v0.9h-0.9zM397.5,328.1h1.6v0.8h-1.6zM453.0,284.6h1.5v1.2h-1.5zM451.1,282.6h1.3v0.9h-1.3zM596.5,238.3h1.4v0.7h-1.4zM423.3,304.2h0.9v1.0h-0.9zM507.2,260.4h1.1v0.8h-1.1zM511.0,255.0h1.6v1.2h-1.6zM378.1,346.9h1.3v0.8h-1.3zM423.6,300.3h1.0v0.5h-1.0zM450.4,285.8h1.0v0.6h-1.0zM344.1,406.2h0.9v0.8h-0.9zM441.4,292.8h1.2v0.8h-1.2zM339.4,424.1h1.2v1.2h-1.2zM401.8,326.5h1.0v1.0h-1.0zM535.6,249.7h0.7v0.6h-0.7zM406.5,322.7h1.1v0.8h-1.1zM421.3,301.8h1.2v1.2h-1.2zM468.8,273.6h1.4v0.7h-1.4zM592.1,245.6h1.2v0.9h-1.2zM519.3,257.6h1.0v1.0h-1.0zM578.3,244.5h1.0v0.7h-1.0zM368.6,358.1h0.9v0.8h-0.9zM347.8,390.2h0.9v1.1h-0.9zM418.9,312.8h1.4v1.0h-1.4zM349.4,390.3h1.5v0.7h-1.5zM431.2,295.7h1.5v0.8h-1.5zM358.8,382.1h1.1v0.5h-1.1zM563.2,247.1h1.2v1.1h-1.2zM436.7,298.1h1.1v0.6h-1.1zM579.6,244.5h1.4v0.9h-1.4zM557.9,244.4h1.6v0.9h-1.6zM562.4,248.1h0.8v0.7h-0.8zM445.9,291.8h1.2v0.8h-1.2zM355.7,384.3h1.3v0.9h-1.3zM548.9,248.3h1.5v1.1h-1.5zM340.3,405.1h1.0v0.8h-1.0zM518.4,256.3h1.5v0.6h-1.5zM595.5,241.8h1.5v0.8h-1.5zM430.2,303.4h1.2v1.0h-1.2zM385.3,345.7h1.6v0.5h-1.6zM347.0,398.0h1.4v0.8h-1.4zM368.6,357.8h1.5v0.7h-1.5zM349.6,402.7h0.8v0.8h-0.8zM398.8,321.9h1.3v0.5h-1.3zM452.3,284.2h0.8v0.9h-0.8zM394.9,331.7h1.4v1.0h-1.4zM352.2,396.3h0.7v0.7h-0.7zM595.8,240.8h1.6v1.1h-1.6zM534.9,252.8h1.4v0.8h-1.4zM468.9,270.5h0.8v0.7h-0.8zM475.6,274.6h1.3v1.1h-1.3zM339.2,427.2h1.6v0.7h-1.6zM560.4,246.7h0.8v1.1h-0.8zM457.8,277.5h1.2v0.5h-1.2zM474.9,270.8h1.4v0.9h-1.4zM373.5,361.7h1.3v0.6h-1.3zM379.5,353.8h1.4v0.9h-1.4zM594.2,243.0h1.2v0.7h-1.2zM556.1,245.0h1.0v0.8h-1.0zM602.5,241.2h1.3v0.6h-1.3zM392.7,332.6h1.1v1.0h-1.1zM445.1,293.5h1.0v0.9h-1.0zM429.9,296.6h1.3v0.7h-1.3zM444.7,291.5h1.2v0.7h-1.2zM439.4,290.3h1.0v0.7h-1.0zM572.2,240.7h1.5v0.7h-1.5zM482.4,271.8h0.7v1.1h-0.7zM395.9,328.0h1.1v1.0h-1.1zM405.8,323.9h1.4v1.0h-1.4zM348.5,395.5h0.9v0.7h-0.9zM485.2,270.9h1.2v1.1h-1.2zM578.2,242.4h1.1v0.9h-1.1zM431.5,300.6h1.5v0.8h-1.5zM403.8,327.5h0.9v0.9h-0.9zM433.7,296.8h1.5v1.0h-1.5zM341.3,420.3h1.3v0.9h-1.3zM440.2,290.8h0.7v0.8h-0.7zM470.4,271.1h0.7v0.6h-0.7zM452.4,280.6h0.8v1.0h-0.8zM559.0,241.7h1.3v1.1h-1.3zM432.2,302.0h1.4v0.7h-1.4zM560.1,247.7h1.3v0.5h-1.3zM459.5,284.0h1.6v0.9h-1.6zM346.8,393.8h1.2v0.6h-1.2zM358.1,382.3h1.1v0.5h-1.1zM485.2,265.5h1.5v1.0h-1.5zM561.3,248.1h1.2v1.2h-1.2zM345.7,402.7h1.3v0.6h-1.3zM450.4,281.1h1.5v0.8h-1.5zM491.4,265.6h1.3v0.8h-1.3zM419.5,310.2h1.3v0.7h-1.3zM437.7,297.3h1.3v0.5h-1.3zM597.0,243.6h0.9v1.0h-0.9zM347.7,401.9h1.1v1.1h-1.1zM338.8,412.5h1.3v0.9h-1.3zM491.7,264.2h1.2v0.6h-1.2zM352.0,387.1h1.0v1.1h-1.0zM443.7,289.2h1.3v0.8h-1.3zM456.7,282.7h0.7v0.7h-0.7zM605.4,245.4h1.5v1.0h-1.5zM556.5,248.2h1.0v1.1h-1.0zM472.0,271.9h1.4v0.7h-1.4zM452.0,281.5h1.4v1.1h-1.4zM417.1,312.6h1.0v0.6h-1.0zM497.4,258.6h1.1v0.9h-1.1zM341.2,405.1h1.0v1.0h-1.0zM439.8,292.2h0.9v0.7h-0.9zM397.0,327.1h1.5v1.1h-1.5zM379.9,342.5h1.2v0.6h-1.2zM345.6,405.3h1.2v1.2h-1.2zM402.2,320.8h0.9v1.2h-0.9zM553.1,249.6h1.5v0.5h-1.5zM484.2,263.5h1.1v0.8h-1.1zM448.2,285.9h1.5v1.1h-1.5zM336.8,426.7h1.4v1.0h-1.4zM343.5,404.4h0.8v1.1h-0.8zM433.5,298.3h1.6v0.6h-1.6zM341.7,408.6h1.2v1.0h-1.2zM524.0,255.5h1.6v1.1h-1.6zM588.3,239.9h1.3v0.9h-1.3zM538.6,246.4h1.3v1.0h-1.3zM399.1,330.4h1.0v1.1h-1.0zM384.3,339.7h1.6v0.5h-1.6zM397.2,333.7h0.8v1.2h-0.8zM410.6,317.2h1.5v0.9h-1.5zM423.1,303.7h1.1v1.2h-1.1zM449.2,288.4h1.1v0.6h-1.1zM444.2,292.8h1.4v0.8h-1.4zM584.3,245.8h0.8v1.1h-0.8zM488.2,269.4h0.8v0.7h-0.8zM522.0,253.9h1.1v0.8h-1.1zM447.2,288.4h1.0v1.2h-1.0zM356.1,387.9h1.2v0.7h-1.2zM338.0,415.5h1.3v0.8h-1.3zM385.6,336.4h1.1v0.7h-1.1zM383.5,343.5h1.3v0.8h-1.3zM384.9,339.8h1.1v0.9h-1.1zM487.0,264.2h1.1v0.6h-1.1zM359.1,383.9h0.9v0.6h-0.9zM397.0,327.1h1.5v0.7h-1.5zM364.9,372.6h0.8v1.0h-0.8zM376.7,351.5h1.4v1.0h-1.4zM473.7,273.0h1.3v0.8h-1.3zM406.0,324.4h1.6v0.8h-1.6zM345.7,400.0h1.4v1.1h-1.4zM406.4,321.0h1.2v0.7h-1.2zM355.3,389.0h1.3v0.9h-1.3zM593.6,238.4h1.5v1.2h-1.5zM335.1,420.1h0.8v1.2h-0.8zM474.7,268.6h1.3v0.8h-1.3zM356.8,383.0h1.2v0.7h-1.2zM561.8,247.6h1.2v1.1h-1.2zM464.5,279.0h0.9v1.1h-0.9zM487.1,268.5h1.2v0.7h-1.2zM438.8,297.2h1.2v1.1h-1.2zM365.6,372.0h1.0v1.1h-1.0zM482.6,270.3h0.7v0.6h-0.7zM438.9,291.2h0.8v0.8h-0.8zM408.4,313.1h1.2v0.8h-1.2zM340.0,414.9h1.5v0.9h-1.5zM385.4,343.5h0.9v1.2h-0.9zM405.5,316.8h1.2v0.9h-1.2zM340.9,419.1h1.4v0.6h-1.4zM336.1,423.3h0.7v0.6h-0.7zM474.5,270.6h1.6v1.0h-1.6zM335.9,424.7h1.6v0.8h-1.6zM337.3,414.3h1.5v0.8h-1.5zM416.0,313.8h0.8v0.9h-0.8zM504.5,261.3h0.9v1.0h-0.9zM506.8,257.2h1.6v0.7h-1.6zM411.3,313.2h1.5v1.1h-1.5zM470.0,271.9h0.9v1.1h-0.9zM589.1,238.4h1.0v1.1h-1.0zM550.5,245.1h1.4v0.8h-1.4zM535.7,250.5h1.3v0.9h-1.3zM335.8,417.6h0.7v0.8h-0.7zM552.1,249.4h0.8v1.1h-0.8zM356.1,387.3h1.4v1.0h-1.4zM470.1,275.0h1.2v1.2h-1.2zM452.4,284.2h1.1v0.8h-1.1zM349.1,392.5h1.3v1.2h-1.3zM452.4,281.9h1.0v0.6h-1.0zM454.0,287.0h1.5v1.1h-1.5zM520.4,256.3h1.4v0.8h-1.4zM361.6,368.8h1.0v0.9h-1.0zM425.1,301.2h1.0v1.1h-1.0zM418.8,309.7h0.9v0.8h-0.9zM402.0,321.6h1.3v0.8h-1.3zM593.8,245.7h1.0v0.9h-1.0zM364.9,362.5h0.8v0.6h-0.8zM555.2,248.4h1.2v0.5h-1.2zM445.0,291.2h0.9v0.7h-0.9zM423.1,301.0h0.9v0.9h-0.9zM448.2,290.5h1.3v0.6h-1.3zM390.0,335.9h1.4v0.9h-1.4zM471.8,269.7h0.9v0.6h-0.9zM540.2,247.0h0.8v0.8h-0.8zM432.4,299.9h1.5v0.9h-1.5zM524.5,250.6h0.9v0.9h-0.9zM433.9,297.9h1.2v1.0h-1.2zM550.7,249.1h0.8v0.7h-0.8zM601.8,239.1h1.0v1.2h-1.0zM591.3,245.6h0.9v0.5h-0.9zM357.4,376.8h1.4v0.5h-1.4zM404.1,325.9h0.8v0.8h-0.8zM516.5,256.2h1.1v1.2h-1.1zM358.7,373.6h1.5v1.1h-1.5zM448.4,286.2h0.9v0.7h-0.9zM367.6,368.8h1.3v0.7h-1.3zM461.6,276.4h1.4v0.6h-1.4zM441.5,288.1h1.3v0.7h-1.3zM413.6,311.0h1.3v0.9h-1.3zM390.4,340.3h1.4v0.5h-1.4zM453.7,282.3h1.3v0.7h-1.3zM434.2,296.7h1.4v0.6h-1.4zM378.9,349.5h1.2v0.7h-1.2zM374.8,358.7h1.5v0.8h-1.5zM514.1,252.6h0.9v0.9h-0.9zM583.5,246.2h1.3v0.6h-1.3zM439.2,292.7h1.3v0.7h-1.3zM476.7,267.3h0.8v1.1h-0.8zM386.9,335.5h1.3v1.1h-1.3zM341.3,404.9h1.5v0.7h-1.5zM498.0,259.0h1.1v1.1h-1.1zM605.0,239.4h1.6v0.9h-1.6zM492.8,261.6h1.1v0.8h-1.1zM369.6,361.9h0.9v1.1h-0.9zM501.4,257.3h1.3v0.9h-1.3zM492.0,263.3h0.7v0.8h-0.7zM364.7,362.7h1.1v0.6h-1.1zM545.7,249.4h0.7v1.1h-0.7zM560.2,242.5h0.9v1.2h-0.9zM427.2,303.0h1.6v0.9h-1.6zM349.0,392.9h0.7v0.7h-0.7zM545.9,250.5h0.9v1.2h-0.9zM363.8,368.1h1.3v0.7h-1.3zM344.6,404.3h1.4v1.1h-1.4zM499.9,260.1h1.0v0.6h-1.0zM517.0,256.2h1.2v0.6h-1.2zM434.8,298.6h0.7v0.5h-0.7zM354.6,386.5h1.5v0.6h-1.5zM534.7,247.9h1.0v0.9h-1.0zM474.7,267.6h1.0v1.2h-1.0zM591.3,243.9h1.0v0.8h-1.0zM488.1,267.2h1.5v1.0h-1.5zM603.5,244.3h1.4v0.9h-1.4zM347.3,393.3h1.2v1.1h-1.2zM493.5,260.9h0.8v0.8h-0.8zM474.3,274.1h1.1v0.8h-1.1zM467.2,275.4h1.5v0.7h-1.5zM365.0,372.0h0.8v1.1h-0.8zM350.0,387.2h1.0v1.1h-1.0zM599.3,239.0h1.6v0.7h-1.6zM379.5,354.4h1.2v0.5h-1.2zM434.1,299.0h1.3v0.6h-1.3zM397.4,332.7h0.8v0.6h-0.8zM537.6,252.4h1.5v0.5h-1.5zM551.6,243.9h1.3v0.7h-1.3zM343.4,401.6h0.7v1.2h-0.7zM577.3,245.1h1.4v0.5h-1.4zM487.0,269.5h0.8v1.0h-0.8zM371.9,356.6h1.1v0.6h-1.1zM479.4,266.3h1.3v0.9h-1.3zM567.3,247.4h1.4v0.9h-1.4zM438.1,292.8h1.4v0.9h-1.4zM446.5,290.1h0.9v0.5h-0.9zM561.4,244.5h1.3v0.6h-1.3zM465.8,276.4h1.2v0.8h-1.2zM499.3,260.9h1.5v0.9h-1.5zM495.8,259.9h0.8v0.7h-0.8zM402.2,325.7h1.1v0.7h-1.1zM513.4,251.9h1.0v1.0h-1.0zM356.0,376.7h1.3v1.2h-1.3zM564.0,245.3h1.4v0.7h-1.4zM539.8,251.5h1.1v0.7h-1.1zM512.7,256.5h1.5v1.1h-1.5zM360.1,372.5h1.0v0.5h-1.0zM399.4,329.8h0.9v0.8h-0.9zM489.0,268.3h1.1v0.7h-1.1zM393.7,330.3h0.7v1.1h-0.7zM563.9,242.4h1.0v0.7h-1.0zM355.1,381.7h1.6v1.0h-1.6zM340.9,412.1h1.0v0.8h-1.0zM352.9,381.0h1.2v0.6h-1.2zM517.9,250.7h1.4v1.0h-1.4zM377.0,356.2h0.7v0.9h-0.7zM367.0,371.7h0.9v1.1h-0.9zM383.1,340.9h1.6v0.6h-1.6zM410.0,320.1h1.4v0.6h-1.4zM452.6,281.5h1.4v0.7h-1.4zM351.6,398.8h1.4v0.9h-1.4zM364.6,365.7h1.0v0.6h-1.0zM503.3,256.5h0.8v1.0h-0.8zM433.3,301.7h0.9v1.0h-0.9zM497.3,259.9h0.9v0.5h-0.9zM501.1,259.1h0.7v1.1h-0.7zM400.8,320.7h1.2v1.0h-1.2zM485.4,263.1h1.2v1.0h-1.2zM338.7,418.3h1.2v0.8h-1.2zM412.3,315.9h0.9v0.7h-0.9zM566.4,242.1h1.1v1.1h-1.1zM447.0,291.2h1.4v1.0h-1.4zM361.1,376.4h1.6v0.9h-1.6zM398.3,325.9h0.8v0.9h-0.8zM568.4,244.5h1.3v1.0h-1.3zM520.8,253.1h0.8v1.2h-0.8zM469.9,273.6h0.9v0.6h-0.9zM511.5,254.9h1.3v0.7h-1.3zM526.1,252.2h1.3v1.1h-1.3zM529.2,254.6h0.7v0.9h-0.7zM344.3,404.9h1.1v1.0h-1.1zM342.4,402.8h1.2v1.1h-1.2zM569.5,246.7h1.5v0.7h-1.5zM358.2,383.9h0.9v0.8h-0.9zM584.6,240.7h1.2v1.2h-1.2zM489.5,265.6h0.7v0.8h-0.7zM357.2,388.6h1.4v0.6h-1.4zM449.2,288.1h1.2v0.5h-1.2zM496.7,265.3h1.1v0.6h-1.1zM405.9,320.3h1.6v0.5h-1.6zM346.9,405.9h1.2v1.2h-1.2zM348.6,392.0h1.2v0.8h-1.2zM504.3,255.1h1.2v0.7h-1.2zM448.9,287.1h1.0v0.9h-1.0zM420.6,311.3h1.6v0.8h-1.6zM521.1,253.5h1.4v1.0h-1.4zM507.4,258.9h0.9v0.9h-0.9zM368.2,370.8h0.9v0.7h-0.9zM335.3,421.6h1.5v0.6h-1.5zM588.8,238.6h1.3v1.1h-1.3zM423.8,300.1h1.5v0.5h-1.5zM485.4,264.4h1.4v0.6h-1.4zM449.3,290.1h1.2v1.0h-1.2zM462.3,281.3h1.6v0.7h-1.6zM593.1,239.4h1.3v0.8h-1.3zM431.8,299.1h0.8v0.6h-0.8zM362.9,375.2h1.5v0.8h-1.5zM458.1,277.5h1.5v1.1h-1.5zM425.1,301.3h0.9v0.9h-0.9zM547.1,248.6h0.7v0.9h-0.7zM419.2,309.9h1.2v1.2h-1.2zM399.3,321.2h1.6v1.2h-1.6zM459.6,279.7h0.9v1.1h-0.9zM524.1,252.8h1.5v0.9h-1.5zM454.4,281.2h0.8v0.8h-0.8zM365.6,374.0h1.6v0.8h-1.6zM424.2,307.8h0.8v0.9h-0.8zM371.8,362.6h1.3v1.1h-1.3zM509.5,261.3h1.2v0.8h-1.2zM336.4,425.7h1.0v0.9h-1.0zM604.9,243.1h1.0v1.1h-1.0zM534.5,247.4h1.1v0.8h-1.1zM349.1,390.0h0.9v0.5h-0.9zM427.5,301.6h1.6v1.2h-1.6zM440.0,293.3h0.8v1.0h-0.8zM360.2,375.9h1.5v0.5h-1.5zM435.6,298.5h1.6v0.6h-1.6zM534.4,251.8h1.0v1.2h-1.0zM377.3,357.8h1.0v1.1h-1.0zM495.8,265.7h1.5v1.2h-1.5zM338.9,411.6h1.1v0.7h-1.1zM377.8,355.9h1.4v0.9h-1.4zM387.0,344.3h0.8v1.1h-0.8zM431.6,295.9h1.6v1.2h-1.6zM379.6,352.4h0.9v0.9h-0.9zM445.7,287.6h1.4v0.9h-1.4zM493.5,264.9h1.6v0.5h-1.6zM355.3,384.6h1.4v0.8h-1.4zM492.2,261.0h1.6v0.9h-1.6zM314.1,576.2h1.6v0.9h-1.6zM318.2,568.3h0.8v1.4h-0.8zM308.0,529.6h1.7v1.1h-1.7zM310.3,519.8h0.9v0.7h-0.9zM312.3,498.3h0.8v1.1h-0.8zM322.3,470.1h1.7v1.2h-1.7zM310.3,552.7h1.2v1.0h-1.2zM317.7,484.3h1.6v1.4h-1.6zM314.4,537.0h0.9v0.6h-0.9zM310.6,546.7h1.1v1.5h-1.1zM315.7,478.8h1.5v1.4h-1.5zM317.6,566.9h1.2v0.8h-1.2zM314.8,509.8h1.3v0.9h-1.3zM317.1,525.0h1.5v1.2h-1.5zM314.3,558.8h0.7v0.7h-0.7zM318.2,513.6h1.3v0.8h-1.3zM331.3,431.5h0.7v1.5h-0.7zM323.9,441.3h1.4v1.1h-1.4zM312.6,556.2h1.4v1.4h-1.4zM312.1,567.4h0.8v1.3h-0.8zM315.9,568.2h1.6v1.5h-1.6zM313.5,489.2h1.3v1.3h-1.3zM317.9,511.3h1.3v1.2h-1.3zM314.3,521.3h1.5v0.9h-1.5zM311.9,565.6h1.1v1.1h-1.1zM313.2,556.0h1.0v0.9h-1.0zM313.6,528.2h0.9v1.5h-0.9zM312.3,539.8h1.2v0.6h-1.2zM314.2,516.2h0.8v1.5h-0.8zM313.8,499.4h0.7v0.8h-0.7zM314.1,527.8h0.9v1.0h-0.9zM315.5,515.1h1.5v1.1h-1.5zM310.1,523.8h0.8v1.2h-0.8zM312.6,544.1h1.7v0.9h-1.7zM317.3,465.3h1.4v0.6h-1.4zM311.6,497.5h1.2v1.0h-1.2zM322.4,465.3h1.5v1.2h-1.5zM324.3,471.3h1.7v0.9h-1.7zM315.1,517.1h1.1v1.5h-1.1zM320.0,450.2h0.9v0.8h-0.9zM319.7,473.3h1.4v1.4h-1.4zM335.0,434.9h0.8v0.9h-0.8zM319.0,495.3h1.1v1.3h-1.1zM310.3,576.7h1.2v1.2h-1.2zM316.5,522.0h1.7v1.4h-1.7zM327.4,455.7h1.7v1.2h-1.7zM325.3,441.0h1.4v0.6h-1.4zM310.2,549.4h1.1v0.6h-1.1zM313.2,579.8h1.4v0.9h-1.4zM314.5,552.0h1.8v0.9h-1.8zM318.4,579.5h1.2v1.0h-1.2zM314.3,539.0h1.8v1.0h-1.8zM312.2,490.7h1.2v1.3h-1.2zM307.6,543.5h1.5v1.3h-1.5zM310.3,573.1h1.3v0.9h-1.3zM318.6,509.5h1.1v0.6h-1.1zM313.3,476.8h1.7v0.6h-1.7zM314.0,547.8h1.4v1.2h-1.4zM327.1,444.6h1.6v1.3h-1.6zM313.4,514.7h1.6v1.0h-1.6zM314.5,503.2h1.5v1.3h-1.5zM314.2,546.7h1.1v1.2h-1.1zM315.0,565.0h1.7v1.3h-1.7zM318.4,483.3h1.2v1.1h-1.2zM318.1,512.3h1.7v0.7h-1.7zM309.0,516.3h1.8v1.3h-1.8zM310.2,543.2h1.2v0.7h-1.2zM309.8,561.7h1.5v0.8h-1.5zM313.7,507.7h1.1v1.0h-1.1zM315.6,577.1h1.4v1.5h-1.4zM318.8,457.4h1.5v0.9h-1.5zM312.1,514.9h1.5v0.9h-1.5zM314.8,486.1h1.6v1.0h-1.6zM314.0,579.5h1.0v0.6h-1.0zM309.5,509.2h1.4v1.3h-1.4zM312.2,488.5h1.8v1.0h-1.8zM310.6,554.9h1.1v1.0h-1.1zM318.8,482.0h1.2v1.4h-1.2zM319.9,578.4h1.6v1.1h-1.6zM317.2,475.6h1.5v1.4h-1.5zM315.2,505.4h0.9v0.8h-0.9zM308.9,526.7h1.2v1.2h-1.2zM335.0,431.6h1.1v1.1h-1.1zM316.6,511.7h1.1v0.8h-1.1zM314.4,484.8h1.5v1.3h-1.5zM331.4,435.7h1.6v1.1h-1.6zM311.6,533.1h1.3v1.4h-1.3zM320.0,575.3h1.4v1.0h-1.4zM309.5,564.4h1.4v0.6h-1.4zM314.4,492.4h1.3v1.3h-1.3zM316.8,556.8h1.0v0.8h-1.0zM331.2,446.9h1.0v1.1h-1.0zM318.6,456.6h1.0v0.9h-1.0zM315.6,483.7h1.4v0.7h-1.4zM317.6,517.4h1.5v0.7h-1.5zM317.0,530.6h0.8v1.4h-0.8zM321.8,454.9h1.2v0.7h-1.2zM321.4,483.4h1.7v1.4h-1.7zM309.9,526.0h1.3v1.1h-1.3zM312.4,505.0h1.1v1.4h-1.1zM317.8,491.5h1.4v1.5h-1.4zM316.8,495.5h1.1v0.8h-1.1zM314.1,548.6h0.9v1.0h-0.9zM315.2,517.2h1.6v0.7h-1.6zM322.8,458.9h1.4v1.2h-1.4zM323.9,465.4h1.0v0.9h-1.0zM309.4,561.2h1.6v1.0h-1.6zM322.6,461.0h1.2v1.5h-1.2zM320.3,489.8h0.9v1.4h-0.9zM316.2,503.6h0.8v1.2h-0.8zM312.5,550.3h1.5v1.3h-1.5zM322.8,468.4h1.4v0.6h-1.4zM307.9,538.4h1.2v0.9h-1.2zM317.5,513.6h1.6v0.7h-1.6zM316.5,533.2h1.2v1.3h-1.2zM316.1,577.4h1.7v0.9h-1.7zM312.5,518.4h1.2v1.3h-1.2zM310.7,553.0h1.0v1.1h-1.0zM312.5,517.9h0.7v1.3h-0.7zM324.4,454.7h1.6v1.1h-1.6zM309.9,541.2h1.4v1.4h-1.4zM322.3,480.6h0.9v1.2h-0.9zM333.2,435.2h0.8v0.8h-0.8zM314.3,498.8h1.2v0.6h-1.2zM319.9,468.8h0.8v0.7h-0.8zM319.5,490.7h0.9v1.0h-0.9zM315.8,540.5h1.7v0.9h-1.7zM319.3,574.8h0.8v1.2h-0.8zM311.6,503.0h1.7v0.7h-1.7zM311.6,566.2h1.7v1.4h-1.7zM314.4,507.3h1.6v0.9h-1.6zM332.7,435.7h0.9v0.7h-0.9zM313.9,477.1h1.1v1.5h-1.1zM313.2,495.7h0.8v0.9h-0.8zM316.7,572.3h1.2v1.5h-1.2zM331.6,438.1h1.7v0.7h-1.7zM309.9,519.7h1.0v1.4h-1.0zM316.0,577.5h1.3v1.4h-1.3zM312.0,487.1h1.5v1.3h-1.5zM328.8,434.5h1.5v1.3h-1.5zM330.0,445.2h0.8v1.1h-0.8zM317.1,557.3h1.2v1.5h-1.2zM312.9,494.8h0.9v1.0h-0.9zM312.2,559.3h1.7v0.9h-1.7zM317.3,530.0h1.5v1.2h-1.5zM309.7,552.0h1.4v1.3h-1.4zM318.4,572.0h1.4v0.7h-1.4zM315.9,526.6h1.0v1.4h-1.0zM316.5,503.4h1.3v1.4h-1.3zM315.7,563.9h1.5v1.1h-1.5zM309.0,562.7h1.5v1.1h-1.5zM326.2,463.9h1.4v0.7h-1.4zM315.8,482.7h1.1v1.3h-1.1zM308.9,542.4h1.2v1.1h-1.2zM309.2,569.0h1.4v0.7h-1.4zM324.9,437.8h0.8v1.2h-0.8zM315.5,543.3h1.5v0.7h-1.5zM311.4,579.7h1.4v1.5h-1.4zM311.3,501.5h1.6v1.4h-1.6zM325.2,443.5h1.1v1.2h-1.1zM324.9,455.8h1.2v0.7h-1.2zM326.8,445.8h1.5v0.8h-1.5zM321.5,447.0h1.4v1.2h-1.4zM315.7,524.4h1.3v1.2h-1.3zM317.6,502.0h1.6v1.2h-1.6zM320.3,480.8h1.7v0.6h-1.7zM314.0,507.5h1.2v0.6h-1.2zM317.1,556.5h1.2v0.9h-1.2zM329.4,438.8h0.8v1.3h-0.8zM319.5,460.4h1.0v0.7h-1.0zM315.5,508.6h1.5v1.1h-1.5zM312.0,579.7h1.3v0.6h-1.3zM316.1,531.2h0.8v1.4h-0.8zM333.6,439.3h1.8v1.0h-1.8zM312.2,519.8h0.8v0.9h-0.8zM313.7,540.9h1.6v1.2h-1.6zM317.9,499.8h1.7v0.8h-1.7zM314.2,522.8h1.8v0.6h-1.8zM312.7,499.7h1.3v1.4h-1.3zM316.9,520.1h1.0v1.3h-1.0zM313.3,493.0h0.9v1.3h-0.9zM311.1,515.0h1.5v1.5h-1.5zM315.0,533.7h1.6v0.8h-1.6zM314.0,477.7h1.8v1.1h-1.8zM308.7,562.8h1.6v0.9h-1.6zM313.3,518.5h1.6v1.0h-1.6zM317.3,463.3h1.3v0.7h-1.3zM322.4,474.3h0.8v1.1h-0.8zM314.8,490.0h1.6v1.1h-1.6zM325.3,443.7h1.1v0.6h-1.1zM316.6,557.6h0.8v1.1h-0.8zM313.6,531.2h1.7v1.3h-1.7zM310.1,574.9h1.1v1.5h-1.1zM316.6,472.4h1.1v1.1h-1.1zM322.9,445.8h1.7v1.2h-1.7zM314.8,491.6h1.1v1.0h-1.1zM312.8,497.0h1.5v1.4h-1.5zM335.2,433.8h1.7v0.8h-1.7zM312.6,491.3h0.9v0.6h-0.9zM313.5,520.4h0.8v0.6h-0.8zM315.7,562.3h1.5v0.8h-1.5zM316.5,493.1h1.5v0.9h-1.5zM315.4,506.1h1.0v1.0h-1.0zM311.3,506.2h0.8v0.9h-0.8zM320.2,465.5h1.1v1.1h-1.1zM324.3,458.2h1.7v0.7h-1.7zM322.4,445.2h1.3v1.1h-1.3zM313.5,524.3h1.7v0.9h-1.7zM326.8,460.8h1.7v1.1h-1.7zM313.5,489.0h1.1v1.2h-1.1zM313.3,567.1h0.9v0.9h-0.9zM311.9,566.1h1.2v1.3h-1.2zM316.5,526.3h1.1v1.2h-1.1zM324.8,458.8h1.0v1.3h-1.0zM311.8,567.0h1.2v0.7h-1.2zM316.8,469.2h1.5v1.0h-1.5zM330.7,435.6h0.9v1.3h-0.9zM313.9,562.4h1.6v1.1h-1.6zM326.4,431.4h1.1v1.1h-1.1zM317.9,560.8h0.9v1.1h-0.9zM318.7,487.9h1.2v0.9h-1.2zM315.8,530.4h1.4v0.7h-1.4zM321.2,446.8h0.9v0.9h-0.9zM315.5,504.1h1.7v0.7h-1.7zM311.8,524.0h1.0v0.9h-1.0zM314.1,563.2h1.6v1.0h-1.6zM321.4,484.3h1.6v1.0h-1.6zM313.6,526.2h0.7v1.2h-0.7zM323.9,447.8h1.2v1.4h-1.2zM316.0,510.0h1.1v1.1h-1.1zM318.5,482.3h1.7v1.2h-1.7zM312.4,480.9h1.2v0.9h-1.2zM312.9,485.7h1.4v0.8h-1.4zM319.2,471.2h1.7v0.9h-1.7zM308.5,515.4h1.1v1.1h-1.1zM308.0,534.3h1.6v1.1h-1.6zM323.4,451.9h1.6v1.2h-1.6zM317.0,476.3h1.5v1.1h-1.5zM317.3,578.8h1.5v1.2h-1.5zM308.9,534.7h1.1v1.5h-1.1zM308.3,531.0h1.2v1.1h-1.2zM318.3,563.5h1.6v1.1h-1.6zM313.1,550.7h0.7v1.0h-0.7zM315.3,521.6h1.1v1.1h-1.1zM311.6,492.2h0.8v0.6h-0.8zM311.0,500.8h1.2v0.6h-1.2zM336.1,431.1h1.7v0.6h-1.7zM316.2,501.5h1.3v0.8h-1.3zM311.0,526.3h1.8v0.7h-1.8zM328.6,446.3h1.0v0.8h-1.0zM317.5,551.3h1.0v1.3h-1.0zM309.4,549.6h0.7v1.1h-0.7zM309.0,525.2h1.4v1.0h-1.4zM310.2,510.5h1.1v1.0h-1.1zM323.0,458.9h1.4v1.4h-1.4zM329.5,432.5h1.1v1.3h-1.1zM317.7,506.3h1.5v1.1h-1.5zM332.6,433.5h1.5v0.7h-1.5zM312.6,509.1h1.5v0.7h-1.5zM307.6,542.4h1.7v0.8h-1.7zM314.1,487.4h1.5v1.2h-1.5zM315.5,572.2h1.2v1.0h-1.2zM321.9,453.6h1.7v0.9h-1.7zM320.3,452.6h0.8v1.1h-0.8zM317.7,496.5h0.9v1.3h-0.9zM309.9,533.2h0.8v0.6h-0.8zM326.5,443.1h1.5v1.1h-1.5zM308.4,552.9h1.4v1.3h-1.4zM318.8,474.3h0.8v1.2h-0.8zM310.9,525.2h1.3v1.0h-1.3zM312.1,487.1h0.9v1.5h-0.9zM311.0,564.5h1.8v1.0h-1.8zM317.6,504.4h1.2v0.9h-1.2zM317.3,468.3h1.8v0.8h-1.8zM315.1,554.6h1.0v1.3h-1.0zM318.0,492.0h1.2v0.8h-1.2zM311.1,571.2h1.7v0.7h-1.7zM319.9,496.6h1.5v1.1h-1.5zM310.6,578.1h1.5v0.8h-1.5zM329.3,440.7h1.1v1.3h-1.1zM324.7,458.6h1.3v1.4h-1.3zM324.5,447.4h1.2v0.8h-1.2zM312.3,493.3h1.2v1.4h-1.2zM317.0,497.9h1.8v0.9h-1.8zM312.1,527.6h1.1v1.2h-1.1zM313.7,554.8h1.3v1.3h-1.3zM311.6,534.9h1.1v0.7h-1.1zM319.3,479.5h0.7v1.3h-0.7zM314.0,502.5h1.5v0.7h-1.5zM316.2,537.8h0.7v1.4h-0.7zM314.8,575.1h1.6v1.0h-1.6zM316.8,495.7h1.5v1.0h-1.5zM313.1,578.7h1.5v1.1h-1.5zM311.6,504.6h1.3v1.0h-1.3zM310.8,578.1h1.3v1.1h-1.3zM317.2,515.3h1.7v0.8h-1.7zM317.3,468.9h1.5v0.9h-1.5zM311.6,546.5h0.7v1.4h-0.7zM320.3,467.4h1.0v1.1h-1.0zM320.5,457.5h0.8v0.8h-0.8zM314.4,491.1h1.5v1.3h-1.5zM314.2,518.8h0.9v1.1h-0.9zM319.2,466.2h1.4v0.7h-1.4zM308.5,512.6h1.7v1.2h-1.7zM315.3,540.1h1.4v0.9h-1.4zM310.5,544.3h1.4v0.8h-1.4zM309.1,566.5h1.2v1.4h-1.2zM312.2,482.3h0.9v0.8h-0.9zM324.6,452.5h1.0v1.3h-1.0zM317.6,522.2h1.1v1.2h-1.1zM316.8,502.3h0.9v0.6h-0.9zM313.0,485.6h1.0v1.4h-1.0zM314.7,511.6h0.9v1.0h-0.9zM309.0,553.8h1.6v1.4h-1.6zM331.8,438.8h0.8v1.2h-0.8zM316.2,486.0h1.5v0.8h-1.5zM314.4,493.2h0.9v1.3h-0.9zM315.9,550.2h1.5v1.0h-1.5zM322.5,461.6h0.9v1.2h-0.9zM314.5,514.9h1.1v0.8h-1.1zM315.9,544.6h1.2v0.7h-1.2zM320.1,454.0h1.0v0.7h-1.0zM311.9,546.9h0.7v1.4h-0.7zM310.9,554.8h1.2v1.0h-1.2zM324.1,470.1h1.7v0.9h-1.7zM308.9,555.2h1.7v0.7h-1.7zM313.7,555.2h1.0v0.8h-1.0zM318.4,510.5h1.3v0.8h-1.3zM315.0,525.3h0.9v1.3h-0.9zM311.6,493.6h0.8v1.1h-0.8zM328.5,446.6h1.5v1.1h-1.5zM322.8,467.8h1.5v1.4h-1.5zM314.4,518.2h0.9v1.0h-0.9zM317.6,476.5h1.4v1.1h-1.4zM330.5,448.7h1.2v0.7h-1.2zM312.4,519.4h1.4v1.4h-1.4zM311.4,546.0h0.8v1.4h-0.8zM308.5,519.1h1.6v1.1h-1.6zM324.5,454.9h1.2v1.2h-1.2zM310.7,564.2h1.3v1.5h-1.3zM332.1,433.8h1.2v1.1h-1.2zM318.0,465.8h0.7v1.3h-0.7zM316.3,557.9h1.3v0.7h-1.3zM312.3,546.1h0.9v1.5h-0.9zM329.0,453.1h1.4v1.2h-1.4zM313.1,568.6h0.9v0.6h-0.9zM316.7,483.4h1.1v1.0h-1.1zM315.1,473.5h1.5v1.1h-1.5zM316.2,566.9h1.0v0.9h-1.0zM315.5,535.4h1.5v0.9h-1.5zM316.7,519.7h1.1v1.1h-1.1zM330.0,431.2h0.8v1.3h-0.8zM323.2,444.0h0.9v1.0h-0.9zM314.9,477.0h1.8v0.7h-1.8zM324.3,439.5h1.4v1.5h-1.4zM311.7,567.1h1.1v1.5h-1.1zM315.2,471.9h1.5v1.4h-1.5zM319.1,489.3h1.5v1.1h-1.5zM310.9,495.6h1.2v0.8h-1.2zM315.7,561.3h1.0v1.4h-1.0zM310.0,516.0h1.0v0.6h-1.0zM316.8,554.4h1.8v1.5h-1.8zM316.6,570.6h1.2v0.9h-1.2zM308.7,553.1h1.4v0.9h-1.4zM327.0,458.3h1.0v0.8h-1.0zM317.4,477.9h0.9v1.4h-0.9zM333.0,431.5h0.7v1.1h-0.7zM318.0,514.0h0.7v1.0h-0.7zM312.2,511.5h0.9v1.4h-0.9zM308.0,552.2h1.7v1.5h-1.7zM314.7,512.0h1.2v1.3h-1.2zM324.6,464.7h1.2v1.1h-1.2zM312.5,481.0h0.7v0.9h-0.7zM322.7,445.3h1.3v1.1h-1.3zM314.3,479.8h1.4v1.5h-1.4zM308.3,515.2h1.1v1.2h-1.1zM310.0,532.4h1.4v0.9h-1.4zM314.9,483.4h1.0v0.7h-1.0zM322.8,456.4h1.0v0.9h-1.0zM316.9,493.1h1.8v1.1h-1.8zM315.4,490.7h1.3v1.3h-1.3zM313.5,507.3h1.1v0.8h-1.1zM330.1,444.3h1.0v0.6h-1.0zM313.9,516.4h0.8v1.3h-0.8zM313.1,523.9h1.2v1.3h-1.2zM323.6,449.0h1.3v0.8h-1.3zM314.1,486.2h0.9v0.6h-0.9zM320.4,448.7h1.0v1.4h-1.0zM320.3,492.2h1.2v1.2h-1.2zM312.2,576.2h1.1v0.7h-1.1zM334.6,431.7h1.0v1.2h-1.0zM322.3,445.8h1.0v1.4h-1.0zM315.0,490.5h0.8v0.7h-0.8zM315.5,522.8h0.8v1.1h-0.8zM328.2,431.4h1.0v1.0h-1.0zM311.3,540.6h1.4v1.0h-1.4zM314.2,524.3h1.2v1.4h-1.2zM312.6,518.2h1.4v1.0h-1.4zM312.5,529.9h1.4v1.5h-1.4zM316.0,504.7h1.8v1.3h-1.8zM317.9,476.3h0.9v1.0h-0.9zM316.0,495.4h1.0v1.0h-1.0zM325.6,446.2h1.4v1.2h-1.4zM323.5,468.1h0.7v1.0h-0.7zM313.8,492.4h1.3v1.1h-1.3zM333.8,439.0h1.3v1.4h-1.3zM312.8,497.4h1.0v0.7h-1.0zM311.0,544.9h1.1v0.7h-1.1zM314.6,536.4h1.5v1.0h-1.5zM312.2,489.1h0.7v0.8h-0.7zM308.4,536.1h0.8v0.9h-0.8zM315.3,502.7h0.7v1.4h-0.7zM319.5,470.3h0.7v1.1h-0.7zM307.9,538.1h1.6v1.4h-1.6zM326.9,439.5h1.0v1.1h-1.0zM322.4,463.3h0.8v1.4h-0.8zM316.9,475.5h1.2v1.4h-1.2zM316.2,524.7h1.0v1.4h-1.0zM311.5,572.3h1.1v1.1h-1.1zM319.0,483.3h1.7v1.5h-1.7zM308.8,566.3h1.2v1.2h-1.2zM311.0,495.2h1.7v1.3h-1.7zM319.2,484.6h1.5v0.7h-1.5zM325.0,459.9h0.8v1.4h-0.8zM307.8,553.2h1.3v1.3h-1.3zM313.1,496.8h1.3v0.7h-1.3zM320.0,482.2h1.1v1.2h-1.1zM323.4,466.4h1.7v1.3h-1.7zM308.1,547.1h0.9v1.0h-0.9zM309.3,551.1h1.0v1.0h-1.0zM330.2,432.6h1.0v1.3h-1.0zM313.2,497.6h1.3v1.1h-1.3zM328.9,443.7h1.5v1.3h-1.5zM313.2,545.7h1.6v1.2h-1.6zM311.7,575.0h0.7v1.4h-0.7zM313.0,546.9h1.5v0.7h-1.5zM326.1,444.3h1.5v0.9h-1.5zM320.8,471.7h1.6v1.2h-1.6zM314.4,541.4h0.9v1.3h-0.9zM311.4,545.1h1.4v1.5h-1.4zM312.6,500.1h1.3v1.1h-1.3zM320.7,476.6h1.6v1.3h-1.6zM307.6,533.3h1.3v1.0h-1.3zM310.4,527.7h1.7v1.3h-1.7zM320.5,472.5h0.7v1.3h-0.7zM316.8,489.8h0.8v1.0h-0.8zM315.2,472.3h1.5v1.3h-1.5zM311.2,519.8h1.0v1.2h-1.0zM314.0,575.1h1.3v0.9h-1.3zM308.5,524.1h1.1v1.2h-1.1zM326.3,459.1h1.7v1.0h-1.7zM318.4,463.0h1.2v0.8h-1.2zM309.7,520.0h1.1v0.9h-1.1zM324.8,462.4h1.5v0.9h-1.5zM320.3,488.5h1.2v1.5h-1.2zM317.0,491.1h1.8v1.2h-1.8zM316.4,490.3h0.9v0.7h-0.9zM312.8,526.4h0.8v1.0h-0.8zM316.1,520.7h1.1v1.2h-1.1zM312.9,491.3h1.1v0.7h-1.1zM315.6,523.6h1.6v0.7h-1.6zM309.1,567.2h1.1v1.1h-1.1zM316.0,480.1h1.1v1.2h-1.1zM315.3,496.1h1.3v0.7h-1.3zM319.1,474.9h0.9v1.1h-0.9zM311.5,509.4h1.2v1.2h-1.2zM316.0,577.3h0.9v0.6h-0.9zM311.7,534.6h1.1v1.0h-1.1zM322.2,467.2h1.6v1.4h-1.6zM315.4,515.1h1.2v0.7h-1.2zM311.1,510.2h1.8v1.4h-1.8zM315.7,470.0h0.8v1.3h-0.8zM316.4,533.4h0.9v1.2h-0.9zM331.9,444.0h1.7v1.1h-1.7zM315.5,575.8h1.6v0.8h-1.6zM314.1,488.4h1.2v0.9h-1.2zM321.4,476.1h1.0v0.8h-1.0zM312.5,487.5h1.3v1.3h-1.3zM322.1,454.3h1.7v1.4h-1.7zM314.2,480.1h1.6v1.2h-1.6zM321.3,487.3h1.5v1.1h-1.5zM308.0,548.8h1.6v1.5h-1.6zM315.5,566.3h0.7v1.3h-0.7zM318.2,505.4h1.2v0.7h-1.2zM311.2,548.3h0.9v0.8h-0.9zM310.8,509.8h0.7v0.9h-0.7zM314.8,472.1h1.0v1.0h-1.0zM308.8,551.6h1.1v1.2h-1.1zM333.4,440.7h1.1v1.2h-1.1zM333.3,437.4h1.6v0.8h-1.6zM332.0,443.8h0.8v0.9h-0.8zM311.6,528.8h1.0v1.1h-1.0zM314.7,517.4h0.8v1.2h-0.8zM319.2,568.5h0.9v1.1h-0.9zM318.2,497.2h1.0v1.2h-1.0zM310.2,556.8h1.8v1.0h-1.8zM316.6,483.4h1.0v1.1h-1.0zM323.6,439.3h1.5v0.9h-1.5zM318.7,470.6h1.5v1.0h-1.5zM316.8,497.7h0.7v0.7h-0.7zM323.0,443.3h1.1v1.2h-1.1zM319.0,569.7h0.9v1.5h-0.9zM313.6,518.3h1.4v0.7h-1.4zM312.4,542.7h1.6v1.3h-1.6zM323.3,450.1h1.2v1.1h-1.2zM317.2,545.1h0.8v1.1h-0.8zM326.1,455.3h1.7v1.2h-1.7zM310.4,521.4h1.3v1.4h-1.3zM320.9,487.4h0.9v1.1h-0.9zM315.2,568.2h1.0v0.8h-1.0zM308.1,538.4h1.2v0.9h-1.2zM321.8,453.1h1.5v0.8h-1.5zM324.5,442.0h1.7v1.4h-1.7zM328.9,454.8h1.7v1.3h-1.7zM314.8,550.3h1.3v0.8h-1.3zM313.6,492.8h0.9v1.4h-0.9zM318.2,467.3h1.2v1.2h-1.2zM321.4,469.4h1.3v1.5h-1.3zM324.5,468.5h1.2v1.5h-1.2zM325.9,432.2h1.4v0.7h-1.4z" fill="#fff" stroke="none"/>
<path d="M607.5,237.2 A289.4,289.4 0 0 0 328.8,431.0" stroke-width="1.7"/>
<path d="M607.5,246.6 A280,280 0 0 0 338.8,431.0" stroke-width="1.7"/>
<path d="M338.1,431.0 A289.5,289.5 0 0 0 321.9,582.0" stroke-width="1.7"/>
<path d="M325.3,431.5 A301.3,301.3 0 0 0 309.9,582.0" stroke-width="1.5"/>
<path d="M320.7,430.2 A306,306 0 0 0 305.2,582.0" stroke-width="1.4"/>
<path d="M320.7,430.2 L325.5,431.5" stroke-width="1.3"/>
<path d="M607.5,252.9 A273.7,273.7 0 0 0 344.4,434.0" stroke-width="1.3"/>
<path d="M607.5,277.1 A259.2,259.2 0 0 0 352.6,582.0" stroke-width="1.7"/>
<path d="M607.0,237.1 A289.4,289.4 0 0 1 647.3,240.7" stroke-width="1.3"/>
<path d="M607.0,246.5 A280,280 0 0 1 651.7,250.9" stroke-width="1.3"/>
<path d="M607,227 V286.5" stroke-width="1.8"/>
<path d="M607,291.5 V578" stroke-width="1.8" stroke-dasharray="9 5.5 20 5.5"/>
<path d="M449,245 V578" stroke-width="1.6"/>
<path d="M449,247 H607" stroke-width="1.1"/>
<path d="M325,434.4 H607" stroke-width="2.2"/>
<path d="M330.5,450 H607" stroke-width="2"/>
<path d="M314,541 H607" stroke-width="1.8"/>
<path d="M294,434 H318" stroke-width="1.6"/>
<path d="M275,422 H300 V433" stroke-width="1.2"/>
<path d="M304,397.5 H316 L336,433" stroke-width="1.2"/>
<path d="M401,398 H392 L373,378" stroke-width="1.2"/>
<path d="M341,437 L366,447" stroke-width="1.6"/>
<path d="M510,413.5 H505 L501,433" stroke-width="1.3"/>
<path d="M441,421 C441,427 445,431 448,434" stroke-width="1.3"/>
<path d="M267,509 L302,516" stroke-width="1.3"/>
</g>
<path d="M438.6,424 V578" stroke="#b8b8b8" stroke-width=".9"/>
<path d="M335,432 L342,432 L343,450 L336,450Z" fill="#111"/>
<circle cx="449" cy="434" r="2" fill="#111"/>
<circle cx="449" cy="450.5" r="1.5" fill="#111"/>
<circle cx="449" cy="247" r="1.5" fill="#111"/>
<circle cx="607" cy="277" r="1.5" fill="#111"/>
<g fill="#fff" stroke="#c4c4c4" stroke-width=".8">
<rect x="517.5" y="351.7" width="44" height="11.8" rx="2"/>
<rect x="518" y="495" width="50.3" height="11.3" rx="2"/>
<rect x="245.6" y="393.4" width="58.4" height="23.4" rx="2"/>
<rect x="245.6" y="418.4" width="28.9" height="7.3" rx="1.5"/>
<rect x="401" y="393.4" width="31.7" height="8.9" rx="1.5"/>
<rect x="509.7" y="410.5" width="66.6" height="17" rx="2"/>
<rect x="236.6" y="505" width="30.6" height="9" rx="1.5"/>
<rect x="451.5" y="532" width="35.9" height="7" rx="1.5"/>
<rect x="510" y="572.4" width="66" height="10" rx="1.5"/>
<rect x="439" y="338" width="7.4" height="22" rx="1.5"/>
<rect x="437.6" y="410" width="6.4" height="12" rx="1.5"/>
<rect x="439.5" y="436" width="7" height="11" rx="1.5"/>
<rect x="341.3" y="504" width="9" height="18" rx="1.5"/>
<rect x="320" y="527" width="10" height="7" rx="1.5"/>
<rect x="455" y="316" width="24" height="7" rx="1.5" transform="rotate(-33 467 319)"/>
</g>
<g font-family="Liberation Sans" fill="#444">
<text x="520" y="360.8" font-size="7.2" letter-spacing="-.35" font-weight="bold" fill="#666">BEDROOMS</text>
<text x="520.5" y="504" font-size="7.2" letter-spacing="-.4" font-weight="bold" fill="#666">LIVING ROOM</text>
<g font-size="3.6" fill="#222" font-weight="bold">
<text x="248" y="398.5">1-SUPPLY TOP SILL (CURVED)</text>
<text x="248" y="403.5">LENGTH, C/W ANCHOR</text>
<text x="248" y="408">BOLTS CAST INTO CONC</text>
<text x="248" y="412.5">CORBEL</text>
<text x="247.5" y="423.5">POUR JOINT</text>
<text x="403.5" y="399.5">FORM SET A0</text>
<text x="512" y="416">SIP OR EXP PLYWOOD</text>
<text x="512" y="420.5">SHEATHING ON 16" TOP HANGER</text>
<text x="512" y="425">JOISTS @ 16" O/C MAX</text>
<text x="239" y="511">FORM SET A0</text>
<text x="455" y="537.5">10' - 0" RADIUS</text>
<text x="512" y="578">SIP OR EXP PLYWOOD</text>
<text x="0" y="0" transform="translate(444.5,358) rotate(-90)">10' - 0"</text>
<text x="0" y="0" transform="translate(348,520) rotate(-90)">6' - 0"</text>
<text x="0" y="0" transform="translate(444.5,560) rotate(-90)">8' - 0"</text>
<text x="0" y="0" transform="translate(459,322) rotate(-33)">10' - 6"</text>
</g>
</g>
</svg>
<!-- scrollbar -->
<div class="a" style="left:872px;top:189px;width:15px;height:389px;background:linear-gradient(90deg,#bdbdbd,#d9d9d9 45%,#cdcdcd);border-left:1px solid #777"></div>
<div class="a" style="left:873px;top:190px;width:14px;height:14px;background:linear-gradient(#fff,#f0f0f0);border:1px solid #b0b0b0;border-radius:2px"></div>
<svg class="a" style="left:876px;top:194px" width="8" height="5" viewBox="0 0 8 5"><path d="M0,5 L4,1 L8,5 Z" fill="#606060"/></svg>
<div class="a" style="left:873px;top:205px;width:14px;height:13px;background:linear-gradient(#fff,#f0f0f0);border:1px solid #b0b0b0;border-radius:2px"></div>
<div class="a" style="left:876px;top:208px;width:7px;height:1px;background:#707070"></div>
<div class="a" style="left:876px;top:211px;width:7px;height:1px;background:#707070"></div>
<div class="a" style="left:876px;top:214px;width:7px;height:1px;background:#707070"></div>
<div class="a" style="left:873px;top:564px;width:14px;height:14px;background:linear-gradient(#fff,#f0f0f0);border:1px solid #b0b0b0;border-radius:2px"></div>
<svg class="a" style="left:876px;top:569px" width="8" height="5" viewBox="0 0 8 5"><path d="M0,0 L4,4 L8,0 Z" fill="#606060"/></svg>

<!-- STATUS BAR -->
<div class="a" style="left:1px;top:578px;width:888px;height:33px;background:#f9e49f"></div>
<div class="a" style="left:3px;top:578px;width:884px;height:31px;background:#f5f5f5"></div>
<svg class="a" style="left:4px;top:581px" width="8" height="26"><use href="#grip"/></svg>
<svg class="a" style="left:13px;top:580px" width="26" height="26" viewBox="0 0 26 26">
<g transform="translate(9,9)"><path d="M5.18,-1.14 L7.12,-1.08 L7.12,1.08 L5.18,1.14 L4.90,2.03 L4.46,2.86 L5.80,4.27 L4.27,5.80 L2.86,4.46 L2.03,4.90 L1.14,5.18 L1.08,7.12 L-1.08,7.12 L-1.14,5.18 L-2.03,4.90 L-2.86,4.46 L-4.27,5.80 L-5.80,4.27 L-4.46,2.86 L-4.90,2.03 L-5.18,1.14 L-7.12,1.08 L-7.12,-1.08 L-5.18,-1.14 L-4.90,-2.03 L-4.46,-2.86 L-5.80,-4.27 L-4.27,-5.80 L-2.86,-4.46 L-2.03,-4.90 L-1.14,-5.18 L-1.08,-7.12 L1.08,-7.12 L1.14,-5.18 L2.03,-4.90 L2.86,-4.46 L4.27,-5.80 L5.80,-4.27 L4.46,-2.86 L4.90,-2.03Z M2.6,0 A2.6,2.6 0 1 0 -2.6,0 A2.6,2.6 0 1 0 2.6,0Z" fill="#8f877b" fill-rule="evenodd"/></g>
<g transform="translate(18,18)"><circle r="7.5" fill="#f5f5f5"/><path d="M4.79,-1.05 L6.52,-0.99 L6.52,0.99 L4.79,1.05 L4.53,1.88 L4.13,2.64 L5.32,3.91 L3.91,5.32 L2.64,4.13 L1.88,4.53 L1.05,4.79 L0.99,6.52 L-0.99,6.52 L-1.05,4.79 L-1.88,4.53 L-2.64,4.13 L-3.91,5.32 L-5.32,3.91 L-4.13,2.64 L-4.53,1.88 L-4.79,1.05 L-6.52,0.99 L-6.52,-0.99 L-4.79,-1.05 L-4.53,-1.88 L-4.13,-2.64 L-5.32,-3.91 L-3.91,-5.32 L-2.64,-4.13 L-1.88,-4.53 L-1.05,-4.79 L-0.99,-6.52 L0.99,-6.52 L1.05,-4.79 L1.88,-4.53 L2.64,-4.13 L3.91,-5.32 L5.32,-3.91 L4.13,-2.64 L4.53,-1.88Z M2.6,0 A2.6,2.6 0 1 0 -2.6,0 A2.6,2.6 0 1 0 2.6,0Z" fill="#f9a637" fill-rule="evenodd"/></g>
</svg>
<div class="dd" style="left:44px;top:592px"></div>
<div class="sep" style="left:56px;top:582px;height:24px"></div>
<svg class="a" style="left:63px;top:588px" width="8" height="12"><use href="#chev"/></svg>

<svg class="a" style="left:233px;top:581px" width="8" height="26"><use href="#grip"/></svg>
<svg class="a" style="left:244px;top:583px" width="22" height="22" viewBox="0 0 22 22"><circle cx="11" cy="11" r="10.2" fill="#f7f7f7" stroke="#cfc6b8" stroke-width="1.2"/><path d="M7,6.5 V15.5" stroke="#a9cde9" stroke-width="1.8"/><path d="M15,6.5 L10.5,11 L15,15.5" fill="none" stroke="#a9cde9" stroke-width="2"/></svg>
<svg class="a" style="left:272px;top:583px" width="22" height="22" viewBox="0 0 22 22"><circle cx="11" cy="11" r="10.2" fill="#f7f7f7" stroke="#cfc6b8" stroke-width="1.2"/><path d="M13,6.5 L8.5,11 L13,15.5" fill="none" stroke="#a9cde9" stroke-width="2"/></svg>
<div class="a" style="left:298px;top:582px;width:90px;height:23px;background:#fff;border:1px solid #9a9a9a;border-top-color:#808080;border-radius:3px;box-shadow:inset 0 1px 1px rgba(0,0,0,.12)"></div>
<div class="t" style="left:365px;top:588px;font-size:13px;color:#111">1</div>
<svg class="a" style="left:372px;top:587px" width="7" height="15" viewBox="0 0 7 15"><path d="M6,0.5 L1,14.5" stroke="#444" stroke-width="1.1"/></svg>
<div class="t" style="left:380px;top:584px;font-size:10px;color:#555">9</div>
<svg class="a" style="left:392px;top:583px" width="22" height="22" viewBox="0 0 22 22"><circle cx="11" cy="11" r="10.2" fill="#f7f7f7" stroke="#8b7f6c" stroke-width="1.2"/><path d="M9,6.5 L13.5,11 L9,15.5" fill="none" stroke="#4f9ad8" stroke-width="2"/></svg>
<svg class="a" style="left:420px;top:583px" width="22" height="22" viewBox="0 0 22 22"><circle cx="11" cy="11" r="10.2" fill="#f7f7f7" stroke="#8b7f6c" stroke-width="1.2"/><path d="M15,6.5 V15.5" stroke="#4f9ad8" stroke-width="1.8"/><path d="M7,6.5 L11.5,11 L7,15.5" fill="none" stroke="#4f9ad8" stroke-width="2"/></svg>
<div class="sep" style="left:448px;top:582px;height:24px"></div>
<svg class="a" style="left:454px;top:583px" width="24" height="23" viewBox="0 0 24 23"><circle cx="12" cy="11.5" r="10.8" fill="#f7f7f7" stroke="#8b7f6c" stroke-width="1.2"/><path d="M6.5,11.5 H17.5" stroke="#7db63f" stroke-width="2.2"/><path d="M11,7 L6.5,11.5 L11,16" fill="none" stroke="#7db63f" stroke-width="2.2"/></svg>
<svg class="a" style="left:482.5px;top:588px" width="8" height="12"><use href="#chev"/></svg>
<svg class="a" style="left:494px;top:581px" width="8" height="26"><use href="#grip"/></svg>
<svg class="a" style="left:507px;top:583px" width="18" height="22" viewBox="0 0 18 22"><path d="M1.6,0.6 H11 L17,7 V20.4 A1,1 0 0 1 16,21.4 H1.6 A1,1 0 0 1 0.6,20.4 V1.6 A1,1 0 0 1 1.6,0.6Z" fill="#fff" stroke="#7b6e5e" stroke-width="1.2"/><path d="M10.5,0.4 L17.3,7.5 L15,7.5 C12,7 10.3,4 10.5,0.4Z" fill="#5f564a"/></svg>
<div class="a" style="left:530px;top:580px;width:28px;height:27px;border:1px solid #b09660;border-radius:3px;background:linear-gradient(#f2e0ac,#fbe9b6 45%,#fde496 100%)"></div>
<svg class="a" style="left:534px;top:583px" width="20" height="22" viewBox="0 0 20 22"><path d="M1.6,0.6 H18.4 V8.4 H1.6Z" fill="#fff" stroke="#6e6252" stroke-width="1.2"/><path d="M1.6,11.6 H12 L18.4,18 V21.4 H1.6Z" fill="#fff" stroke="#6e6252" stroke-width="1.2"/><path d="M11.5,11.4 L18.6,18.6 L16,18.6 C13,18 11.3,15 11.5,11.4Z" fill="#5f564a"/></svg>
<svg class="a" style="left:560px;top:585px" width="25" height="19" viewBox="0 0 25 19"><path d="M1,0.6 H7 L11,5 V18.4 H1Z M13.5,0.6 H19.5 L23.5,5 V18.4 H13.5Z" fill="#fff" stroke="#7b6e5e" stroke-width="1.1"/><path d="M6.6,0.4 L11.2,5.4 L9.5,5.4 C7.5,5 6.4,3 6.6,0.4Z M19.1,0.4 L23.7,5.4 L22,5.4 C20,5 18.9,3 19.1,0.4Z" fill="#5f564a"/></svg>
<svg class="a" style="left:588px;top:588px" width="8" height="12"><use href="#chev"/></svg>
<svg class="a" style="left:600px;top:581px" width="8" height="26"><use href="#grip"/></svg>
<div class="a" style="left:609px;top:583px;width:82px;height:22px;background:#fff;border:1px solid #a8a8a8;border-radius:3px"></div>
<div class="t" style="left:614px;top:587px;font-size:12px;color:#111;letter-spacing:-0.9px">100%</div>
<div class="dd" style="left:679px;top:592px;border-left-width:4px;border-right-width:4px;border-top-width:4px;border-top-color:#777"></div>
<div class="sep" style="left:695px;top:582px;height:24px"></div>
<svg class="a" style="left:701px;top:582px" width="24" height="24" viewBox="0 0 24 24"><defs><linearGradient id="zg" x1="0" y1="0" x2="1" y2="1"><stop offset="0" stop-color="#fff"/><stop offset=".5" stop-color="#fff"/><stop offset=".5" stop-color="#fbe3c8"/><stop offset="1" stop-color="#f8dcc0"/></linearGradient></defs><circle cx="12" cy="12" r="10.8" fill="url(#zg)" stroke="#8b7f6c" stroke-width="1.4"/><path d="M6.5,12 H17.5" stroke="#5ba3de" stroke-width="1.6"/></svg>
<div class="a" style="left:729px;top:594px;width:100px;height:1px;background:#666"></div>
<div class="a" style="left:775px;top:582px;width:7px;height:23px;background:#fdfdfd;border:1px solid #6e6e6e;border-radius:3px"></div>
<svg class="a" style="left:834px;top:588px" width="8" height="12"><use href="#chev"/></svg>
<svg class="a" style="left:845px;top:581px" width="8" height="26"><use href="#grip"/></svg>
<svg class="a" style="left:866px;top:588px" width="8" height="12"><use href="#chev"/></svg>
<div class="a" style="left:878px;top:580px;width:0;height:0;border-left:3.5px solid transparent;border-right:3.5px solid transparent;border-top:4px solid #666"></div>
<div class="a" style="left:878px;top:585px;width:7px;height:1px;background:#666"></div>

<div class="a" style="left:0;top:0;width:890px;height:612px;border:1px solid #a9a9a9"></div>
<!-- DROPDOWN MENU -->
<div class="a" style="left:167px;top:146px;width:267px;height:65px;background:#f7f7f7;border:1px solid #6e6e6e;border-radius:3px;box-shadow:1px 1px 2px rgba(0,0,0,.35)"></div>
<div class="a" style="left:172px;top:179px;width:258px;height:28px;border:1px solid #cdb57a;border-radius:3px;background:linear-gradient(#fdf6e0 0%,#fcf0cc 40%,#fde69a 78%,#fdeba8 100%)"></div>
<div class="t" style="left:214px;top:158px;letter-spacing:-0.39px">Delete Pages...</div>
<div class="t" style="left:339px;top:158px;letter-spacing:-0.58px">CTRL+SHIFT+D</div>
<div class="t" style="left:214px;top:186px;letter-spacing:-0.26px">Delete Empty Pages...</div>
<svg class="a" style="left:188px;top:154px" width="17" height="20" viewBox="0 0 18 21"><use href="#pgl"/></svg>
<svg class="a" style="left:198px;top:164px" width="13" height="13"><use href="#xs" width="13" height="13"/></svg>
<svg class="a" style="left:188px;top:182px" width="17" height="20" viewBox="0 0 18 21"><use href="#pgs"/></svg>
<svg class="a" style="left:198px;top:192px" width="13" height="13"><use href="#xs" width="13" height="13"/></svg>
</body></html>
